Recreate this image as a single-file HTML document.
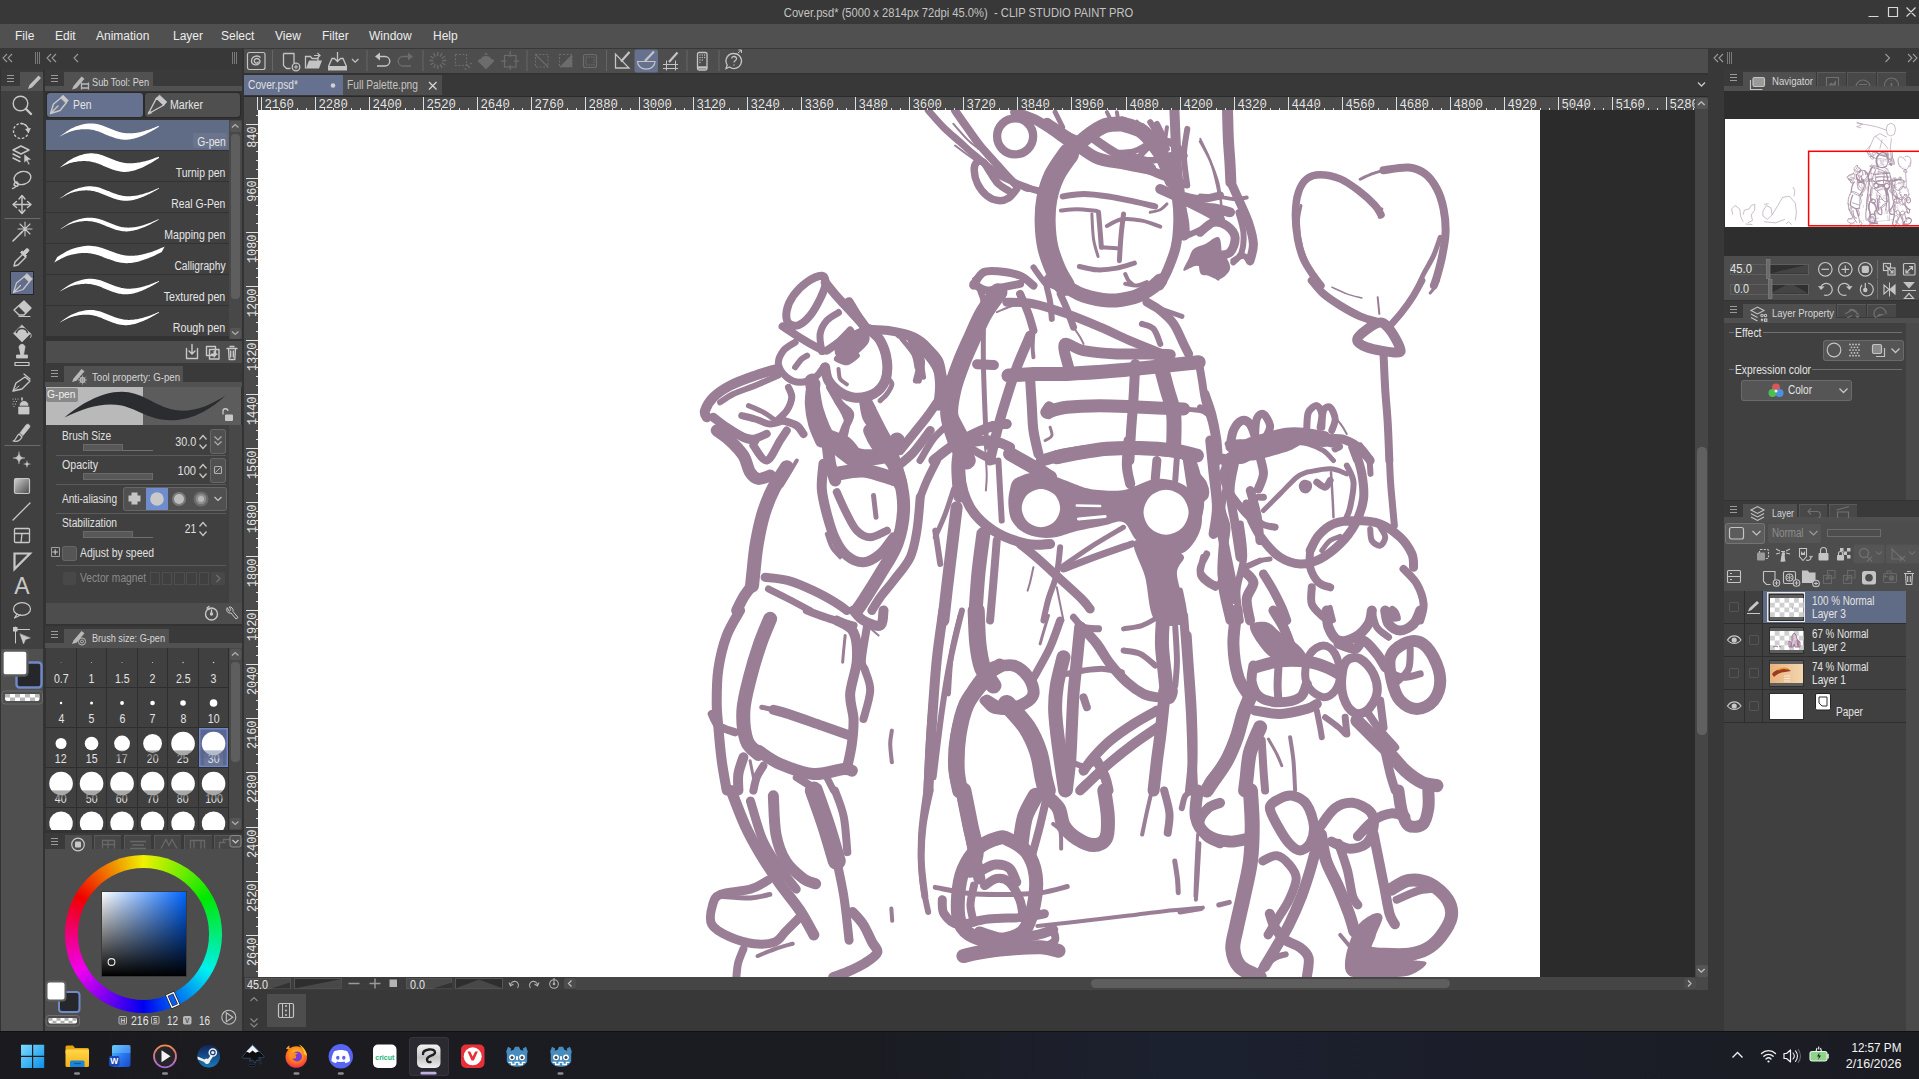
<!DOCTYPE html>
<html lang="en">
<head>
<meta charset="utf-8">
<title>Cover.psd - CLIP STUDIO PAINT PRO</title>
<style>
html,body{margin:0;padding:0;}
body{width:1919px;height:1079px;overflow:hidden;position:relative;background:#4d4d4d;font-family:"Liberation Sans",sans-serif;font-size:12px;color:#dcdcdc;}
.a{position:absolute;}
.t{position:absolute;white-space:nowrap;line-height:14px;}
svg{position:absolute;overflow:visible;}
.ic{stroke:#c8c8c8;fill:none;stroke-width:1.4;stroke-linecap:round;stroke-linejoin:round;}
.icd{stroke:#6e6e6e;fill:none;stroke-width:1.3;stroke-linecap:round;stroke-linejoin:round;}
</style>
</head>
<body>
<!-- title bar -->
<div class="a" style="left:0;top:0;width:1919px;height:24px;background:#383838;"></div>
<div class="t" style="left:771px;width:375px;top:5.600px;text-align:center;color:#c4c4c4;font-size:12px;transform:scaleX(0.932);transform-origin:center center;">Cover.psd* (5000 x 2814px 72dpi 45.0%)&nbsp; - CLIP STUDIO PAINT PRO</div>
<svg style="left:1860px;top:0" width="59" height="24"><path d="M8.500 16.500H18.500 M28.500 7.500h9v9h-9z M46.500 7.500l9 9 M55.500 7.500l-9 9" stroke="#d8d8d8" stroke-width="1.200" fill="none"/></svg>
<!-- menu bar -->
<div class="a" style="left:0;top:24px;width:1919px;height:24px;background:#505050;"></div>
<div class="t" style="left:15px;top:29px;color:#ececec;">File</div>
<div class="t" style="left:55px;top:29px;color:#ececec;">Edit</div>
<div class="t" style="left:96px;top:29px;color:#ececec;">Animation</div>
<div class="t" style="left:173px;top:29px;color:#ececec;">Layer</div>
<div class="t" style="left:221px;top:29px;color:#ececec;">Select</div>
<div class="t" style="left:275px;top:29px;color:#ececec;">View</div>
<div class="t" style="left:322px;top:29px;color:#ececec;">Filter</div>
<div class="t" style="left:369px;top:29px;color:#ececec;">Window</div>
<div class="t" style="left:433px;top:29px;color:#ececec;">Help</div>
<!-- dock header strips -->
<div class="a" style="left:0;top:48px;width:243px;height:21px;background:#383838;"></div>
<div class="a" style="left:1707px;top:48px;width:212px;height:21px;background:#383838;"></div>
<!-- left dock header icons -->
<svg style="left:0;top:48px" width="243" height="21"><path d="M7 6l-4 4 4 4M12 6l-4 4 4 4M51 6l-4 4 4 4M56 6l-4 4 4 4M78 6l-4 4 4 4" stroke="#9a9a9a" stroke-width="1.1" fill="none"/><path d="M35.500 4v12M37.500 4v12M39.500 4v12M232.500 4v12M234.500 4v12M236.500 4v12" stroke="#7a7a7a" stroke-width="1"/></svg>
<!-- tool column -->
<div class="a" style="left:0;top:69px;width:243px;height:962px;background:#333333;"></div>
<div class="a" style="left:1px;top:69px;width:42px;height:17px;background:#3a3a3a;"></div>
<div class="a" style="left:20px;top:72px;width:23px;height:16px;background:#515151;"></div>
<div class="a" style="left:1px;top:86px;width:42px;height:5px;background:#515151;"></div>
<div class="a" style="left:1px;top:91px;width:42px;height:558px;background:#404040;"></div>
<div class="a" style="left:1px;top:649px;width:42px;height:382px;background:#4f4f4f;"></div>
<svg style="left:0;top:69px" width="44" height="22"><path d="M7 6.500h7M7 9.500h7M7 12.500h7" stroke="#9a9a9a" stroke-width="1"/><path d="M28 20l1.500-4 9-9.500 2.500 2.500-9 9.500z" fill="#c0c0c0"/></svg>
<svg style="left:0;top:0" width="44" height="720">
<g class="ic">
<!-- magnifier -->
<circle cx="20.500" cy="103.500" r="7.300"/><path d="M26 109l5 5" stroke-width="2.400"/>
<!-- rotate -->
<circle cx="21" cy="131" r="7.500" stroke-dasharray="1.500 2.900"/><path d="M21 123.500a7.500 7.500 0 0 1 7.300 6" /><path d="M25 129l3.500 4 2.500-5z" fill="#c8c8c8" stroke="none"/>
<!-- layer select -->
<path d="M13 150l8-4 8 4-8 4z M13 154l7 3.500 M13 158l7 3.500"/><path d="M24 154l0 9 2.500-2 2 4 1.500-0.800-2-4 3.500-0.500z" fill="#c8c8c8" stroke="#404040" stroke-width="0.600"/>
<!-- lasso -->
<ellipse cx="22.500" cy="178" rx="8.500" ry="6.500" transform="rotate(-15 22.500 178)"/><path d="M17 182c-3 0-4 3-1.500 4s4-2 1.500-4 M16 186c-1 2-2 2.500-3.500 2.500"/>
<!-- move -->
<path d="M22 196v17M13.500 204.500h17" /><path d="M19 199l3-3.500 3 3.500M19 210l3 3.500 3-3.500M16.500 201.500l-3.500 3 3.500 3M27.500 201.500l3.500 3-3.500 3"/>
<!-- sep -->
<path d="M5 218.500h35" stroke="#6a6a6a" stroke-width="1"/>
<!-- wand -->
<path d="M13 241l9-9" stroke-width="1.600"/><path d="M25 222v14M18 229h14M20 224l10 10M30 224l-10 10" stroke-width="1.100"/>
<!-- eyedropper -->
<path d="M14 266l1-4 8-8 3 3-8 8z" /><path d="M23 252l3-3c1.500-1.500 4 1 2.500 2.500l-3 3 1 1-1.500 1.500-4.500-4.500 1.500-1.500z" fill="#c8c8c8" stroke-width="0.800"/>
</g>
<!-- pen selected -->
<rect x="10.500" y="271.500" width="23" height="23" fill="#616d8b" stroke="#262626" stroke-width="1"/>
<g class="ic">
<path d="M13.500 292.500l3-9.500 8-6.500 5 5-6.500 8z M13.500 292.500l7-7" stroke-width="1.200"/><path d="M24 276.500l3-3 5.500 5.500-3 3z" fill="#c8c8c8" stroke-width="0.600"/>
<!-- eraser -->
<path d="M14 310l10-9 7 7-7 7h-5z" /><path d="M24 301l7 7-5.500 5.500-7-7z" fill="#c8c8c8" stroke="none"/><path d="M19 316.500h11" stroke-width="1.200"/>
<!-- bucket -->
<path d="M22 325l8.500 8.500-8.500 8.500-8.500-8.500z" fill="#c8c8c8" stroke-width="0.500"/><path d="M16.500 332.500c1.500-5.500 9.500-5.500 11 0" stroke="#404040" stroke-width="1.500"/><path d="M30.500 333.500c1 1.500 1 3 0 4" stroke-width="1"/>
<!-- stamp -->
<path d="M19.500 349a3 3 0 1 1 5 0l-1 6h4v3h-11v-3h4z" fill="#c8c8c8" stroke-width="0.800"/><path d="M15 362.500h14v3h-14z" stroke-width="1.200"/>
<!-- nib pencil -->
<path d="M13 391l3-8 9-6 5 4-8 8z" stroke-width="1.300"/><path d="M13 391l6-5" stroke-width="1"/><path d="M24 374l6 5" stroke-width="1.200"/>
<!-- airbrush -->
<path d="M19 407h10v7h-10z" fill="#c8c8c8" stroke-width="0.800"/><path d="M20 405c0-5 8-5 8 0z" fill="#c8c8c8" stroke-width="0.800"/><path d="M22 400v-2" stroke-width="1.600"/><path d="M13 399h0M15.500 399h0M18 399h0M14 401.500h0M16.500 401.500h0M13 404h0M15.500 404h0M14 406.500h0" stroke-width="1.200"/>
<!-- brush -->
<path d="M13 441c3 0 3-5 6-7l3 3c-2 4-5 5-9 4z" stroke-width="1.200"/><path d="M20 433l6-8c1.500-2 5 0 3.500 2.500l-6.500 8z" fill="#c8c8c8" stroke-width="0.700"/>
<!-- sep -->
<path d="M5 445.500h35" stroke="#6a6a6a" stroke-width="1"/>
<!-- sparkles -->
<path d="M19 452c0.500 4 1.500 5.500 6 6-4.500 0.500-5.500 2-6 6-0.500-4-1.500-5.500-6-6 4.500-0.500 5.500-2 6-6z" fill="#c8c8c8" stroke-width="0.400"/><path d="M27 461c0.300 2.200 0.900 2.800 3.500 3-2.600 0.300-3.200 0.900-3.500 3.500-0.300-2.600-0.900-3.200-3.500-3.500 2.600-0.200 3.200-0.800 3.500-3z" fill="#c8c8c8" stroke-width="0.300"/>
</g>
<defs><linearGradient id="tg" x1="0" y1="0" x2="1" y2="1"><stop offset="0" stop-color="#d0d0d0"/><stop offset="1" stop-color="#4a4a4a"/></linearGradient></defs>
<rect x="14.500" y="478.500" width="15" height="15" rx="1.500" fill="url(#tg)" stroke="#c8c8c8" stroke-width="1.200"/>
<g class="ic">
<!-- line -->
<path d="M13 520l17-17" stroke-width="1.300"/>
<!-- frame -->
<rect x="14.500" y="528.500" width="15" height="14" rx="1" stroke-width="1.300"/><path d="M14.500 533.500h15M22 533.500l-1 9" stroke-width="1.300"/>
<!-- triangle ruler -->
<path d="M14.500 553.500h15.500l-15.500 15.500z" stroke-width="2.200" stroke-linejoin="miter"/>
<!-- balloon -->
<ellipse cx="22" cy="609" rx="8.500" ry="6.300" stroke-width="1.200"/><path d="M17 614l-2.500 4 6-3" stroke-width="1.200"/>
<!-- correct line -->
<path d="M15.500 627v16M15.500 629.500h14" stroke-width="1"/><rect x="13" y="627" width="4.500" height="4.500" fill="#c8c8c8" stroke="none"/><path d="M20 634l3.500 10 2-4.500 4.500-1.500z" fill="#c8c8c8" stroke-width="0.500"/>
</g>
<text x="22" y="594" text-anchor="middle" font-family="Liberation Sans, sans-serif" font-size="23" fill="#c8c8c8">A</text>
<!-- swatches -->
<rect x="16.500" y="662.500" width="25" height="25" rx="3" fill="#26272b" stroke="#6f89c9" stroke-width="2.400"/>
<rect x="2.500" y="650.500" width="25" height="25" rx="3" fill="#ffffff" stroke="#5a5a5a" stroke-width="2.400"/>
<rect x="2" y="691" width="40.500" height="13" rx="3" fill="none" stroke="#6a6a6a" stroke-width="1"/>
<rect x="5" y="694" width="34.500" height="7" rx="2" fill="#ffffff"/>
<path d="M5 694h5v3.500h-5zM15 694h5v3.500h-5zM25 694h5v3.500h-5zM35 694h4.500v3.500h-4.500zM10 697.500h5v3.500h-5zM20 697.500h5v3.500h-5zM30 697.500h5v3.500h-5z" fill="#b8b8b8"/>
</svg>
<!-- sub tool -->
<div class="a" style="left:45.000px;top:69.000px;width:197.000px;height:17.000px;background:#3a3a3a;"></div>
<div class="a" style="left:64.000px;top:72.000px;width:89.000px;height:16.000px;background:#515151;"></div>
<div class="a" style="left:45.000px;top:86.000px;width:197.000px;height:5.000px;background:#515151;"></div>
<svg style="left:45px;top:69px" width="60" height="22"><path d="M6 6.500h7M6 9.500h7M6 12.500h7" stroke="#9a9a9a" stroke-width="1"/><path d="M27 20.500l1.500-3.500 8-9.500 3 2.200-8 9.500z" fill="#b8b8b8"/><path d="M36.500 13.500v7M36.500 15h7M36.500 19h7M43.500 13.500v7" stroke="#b8b8b8" stroke-width="1.300" fill="none"/></svg>
<div class="t" style="left:91.500px;top:75.500px;font-size:11px;line-height:13px;color:#d6d6d6;transform:scaleX(0.835);transform-origin:left center;">Sub Tool: Pen</div>
<div class="a" style="left:47.000px;top:93.000px;width:95.500px;height:23.500px;background:#65718e;border-radius:3px;box-shadow:0 0 0 1px #2a2a2a;"></div>
<div class="a" style="left:145.000px;top:93.000px;width:94.500px;height:23.500px;background:#4f4f4f;border-radius:3px;box-shadow:0 0 0 1px #2a2a2a;"></div>
<svg style="left:47px;top:93px" width="200" height="24"><g class="ic" stroke-width="1.100"><path d="M3.500 20.500l3-9.500 8-6.500 5 5-6.500 8z M3.500 20.500l7.500-7.500"/><path d="M13.500 4.500l2.500-2.500 5.500 5.500-2.500 2.500z" fill="#c8c8c8" stroke-width="0.500"/><path d="M101.500 20l1.500-2.500 6.500-12.500 7.500 7-12.500 7z"/><path d="M109.500 5l3-3 7.500 7-3 3z" fill="#c8c8c8" stroke-width="0.500"/><path d="M101 21l1.500-3 2 2z" fill="#c8c8c8" stroke-width="0.500"/></g></svg>
<div class="t" style="left:72.500px;top:98.250px;font-size:12.5px;line-height:14.5px;color:#e4e4e4;transform:scaleX(0.832);transform-origin:left center;">Pen</div>
<div class="t" style="left:170.000px;top:98.250px;font-size:12.5px;line-height:14.5px;color:#e4e4e4;transform:scaleX(0.849);transform-origin:left center;">Marker</div>
<div class="a" style="left:46.000px;top:120.000px;width:182.500px;height:30.000px;background:#606b85;"></div>
<div class="a" style="left:192.500px;top:133.000px;width:34.500px;height:15.000px;background:#6a748c;border-radius:2px;"></div>
<div class="t" style="left:190.759px;top:135.250px;font-size:12.5px;line-height:14.5px;color:#e6e6e6;transform:scaleX(0.820);transform-origin:right center;">G-pen</div>
<div class="a" style="left:46.000px;top:151.000px;width:182.500px;height:30.000px;background:#404040;"></div>
<div class="t" style="left:166.206px;top:166.250px;font-size:12.5px;line-height:14.5px;color:#e6e6e6;transform:scaleX(0.835);transform-origin:right center;">Turnip pen</div>
<div class="a" style="left:46.000px;top:182.000px;width:182.500px;height:30.000px;background:#404040;"></div>
<div class="t" style="left:160.194px;top:197.250px;font-size:12.5px;line-height:14.5px;color:#e6e6e6;transform:scaleX(0.827);transform-origin:right center;">Real G-Pen</div>
<div class="a" style="left:46.000px;top:213.000px;width:182.500px;height:30.000px;background:#404040;"></div>
<div class="t" style="left:153.225px;top:228.250px;font-size:12.5px;line-height:14.5px;color:#e6e6e6;transform:scaleX(0.844);transform-origin:right center;">Mapping pen</div>
<div class="a" style="left:46.000px;top:244.000px;width:182.500px;height:30.000px;background:#404040;"></div>
<div class="t" style="left:162.973px;top:259.250px;font-size:12.5px;line-height:14.5px;color:#e6e6e6;transform:scaleX(0.816);transform-origin:right center;">Calligraphy</div>
<div class="a" style="left:46.000px;top:275.000px;width:182.500px;height:30.000px;background:#404040;"></div>
<div class="t" style="left:153.230px;top:290.250px;font-size:12.5px;line-height:14.5px;color:#e6e6e6;transform:scaleX(0.851);transform-origin:right center;">Textured pen</div>
<div class="a" style="left:46.000px;top:306.000px;width:182.500px;height:30.000px;background:#404040;"></div>
<div class="t" style="left:164.339px;top:321.250px;font-size:12.5px;line-height:14.5px;color:#e6e6e6;transform:scaleX(0.858);transform-origin:right center;">Rough pen</div>
<svg style="left:0;top:0" width="243" height="340"><path d="M59.500 136.700 60.313 136.086 61.398 135.267 62.690 134.298 64.125 133.240 65.638 132.152 67.164 131.094 68.640 130.127 70.000 129.311 71.281 128.620 72.559 127.984 73.831 127.400 75.094 126.864 76.345 126.373 77.582 125.922 78.801 125.508 80.000 125.127 81.173 124.781 82.320 124.476 83.448 124.210 84.562 123.984 85.669 123.797 86.773 123.647 87.882 123.536 89.000 123.462 90.118 123.426 91.227 123.429 92.331 123.470 93.438 123.550 94.552 123.668 95.680 123.827 96.827 124.025 98.000 124.264 99.202 124.560 100.430 124.923 101.677 125.336 102.938 125.786 104.206 126.257 105.477 126.771 106.743 127.280 108.000 127.765 109.257 128.249 110.523 128.755 111.794 129.272 113.062 129.786 114.323 130.286 115.570 130.758 116.798 131.190 118.000 131.569 119.166 131.903 120.297 132.205 121.404 132.476 122.500 132.713 123.596 132.914 124.703 133.079 125.834 133.207 127.000 133.297 128.195 133.347 129.406 133.359 130.633 133.333 131.875 133.272 133.133 133.176 134.406 133.046 135.695 132.884 137.000 132.690 138.327 132.459 139.680 132.186 141.052 131.877 142.438 131.535 143.831 131.167 145.227 130.776 146.618 130.366 148.000 129.944 149.450 129.466 151.008 128.912 152.608 128.315 154.188 127.707 155.681 127.122 157.023 126.592 158.151 126.150 159.000 125.827 159.000 126.773 158.151 127.273 157.023 127.947 155.681 128.748 154.188 129.630 152.608 130.548 151.008 131.455 149.450 132.306 148.000 133.056 146.618 133.735 145.227 134.398 143.831 135.039 142.438 135.652 141.052 136.232 139.680 136.772 138.327 137.266 137.000 137.710 135.695 138.106 134.406 138.463 133.133 138.779 131.875 139.053 130.633 139.283 129.406 139.469 128.195 139.610 127.000 139.703 125.834 139.748 124.703 139.744 123.596 139.694 122.500 139.600 121.404 139.464 120.297 139.290 119.166 139.078 118.000 138.831 116.798 138.533 115.570 138.175 114.323 137.769 113.062 137.326 111.794 136.860 110.523 136.381 109.257 135.902 108.000 135.435 106.743 134.957 105.477 134.444 104.206 133.911 102.938 133.339 101.677 132.780 100.430 132.249 99.202 131.763 98.000 131.336 96.827 130.964 95.680 130.628 94.552 130.328 93.438 130.063 92.331 129.832 91.227 129.635 90.118 129.471 89.000 129.338 87.882 129.237 86.773 129.171 85.669 129.139 84.562 129.141 83.448 129.176 82.320 129.243 81.173 129.342 80.000 129.473 78.801 129.631 77.582 129.814 76.345 130.027 75.094 130.274 73.831 130.559 72.559 130.887 71.281 131.262 70.000 131.689 68.640 132.221 67.164 132.875 65.638 133.604 64.125 134.360 62.690 135.096 61.398 135.764 60.313 136.317 59.500 136.700z" fill="#ffffff"/><path d="M59.500 167.700 60.313 167.045 61.398 166.179 62.690 165.158 64.125 164.042 65.638 162.895 67.164 161.780 68.640 160.758 70.000 159.891 71.281 159.153 72.559 158.471 73.831 157.842 75.094 157.262 76.345 156.728 77.582 156.235 78.801 155.780 80.000 155.360 81.173 154.976 82.320 154.635 83.448 154.334 84.562 154.074 85.669 153.854 86.773 153.672 87.882 153.530 89.000 153.426 90.118 153.360 91.227 153.334 92.331 153.347 93.438 153.400 94.552 153.493 95.680 153.627 96.827 153.801 98.000 154.016 99.202 154.289 100.430 154.630 101.677 155.022 102.938 155.453 104.206 155.906 105.477 156.417 106.743 156.925 108.000 157.411 109.257 157.898 110.523 158.409 111.794 158.933 113.062 159.455 114.323 159.965 115.570 160.449 116.798 160.894 118.000 161.288 119.166 161.636 120.297 161.955 121.404 162.243 122.500 162.497 123.596 162.718 124.703 162.903 125.834 163.053 127.000 163.166 128.195 163.242 129.406 163.280 130.633 163.283 131.875 163.252 133.133 163.187 134.406 163.090 135.695 162.962 137.000 162.804 138.327 162.610 139.680 162.377 141.052 162.108 142.438 161.809 143.831 161.484 145.227 161.136 146.618 160.772 148.000 160.394 149.450 159.965 151.008 159.463 152.608 158.921 154.188 158.368 155.681 157.836 157.023 157.354 158.151 156.952 159.000 156.660 159.000 157.940 158.151 158.471 157.023 159.186 155.681 160.035 154.188 160.969 152.608 161.942 151.008 162.904 149.450 163.807 148.000 164.606 146.618 165.329 145.227 166.037 143.831 166.722 142.438 167.379 141.052 168.000 139.680 168.581 138.327 169.115 137.000 169.596 135.695 170.028 134.406 170.419 133.133 170.768 131.875 171.073 130.633 171.333 129.406 171.548 128.195 171.715 127.000 171.834 125.834 171.902 124.703 171.920 123.596 171.890 122.500 171.815 121.404 171.698 120.297 171.540 119.166 171.344 118.000 171.112 116.798 170.829 115.570 170.484 114.323 170.089 113.062 169.657 111.794 169.199 110.523 168.727 109.257 168.252 108.000 167.789 106.743 167.311 105.477 166.799 104.206 166.262 102.938 165.672 101.677 165.094 100.430 164.542 99.202 164.034 98.000 163.584 96.827 163.188 95.680 162.828 94.552 162.503 93.438 162.212 92.331 161.955 91.227 161.730 90.118 161.537 89.000 161.374 87.882 161.244 86.773 161.146 85.669 161.082 84.562 161.051 83.448 161.052 82.320 161.084 81.173 161.147 80.000 161.240 78.801 161.359 77.582 161.501 76.345 161.672 75.094 161.875 73.831 162.116 72.559 162.399 71.281 162.728 70.000 163.109 68.640 163.590 67.164 164.189 65.638 164.860 64.125 165.558 62.690 166.237 61.398 166.852 60.313 167.357 59.500 167.700z" fill="#ffffff"/><path d="M59.500 198.700 60.313 198.120 61.398 197.340 62.690 196.416 64.125 195.405 65.638 194.365 67.164 193.356 68.640 192.435 70.000 191.661 71.281 191.008 72.559 190.411 73.831 189.864 75.094 189.365 76.345 188.910 77.582 188.494 78.801 188.114 80.000 187.766 81.173 187.452 82.320 187.177 83.448 186.941 84.562 186.742 85.669 186.582 86.773 186.460 87.882 186.374 89.000 186.326 90.118 186.315 91.227 186.342 92.331 186.406 93.438 186.507 94.552 186.648 95.680 186.827 96.827 187.045 98.000 187.304 99.202 187.620 100.430 188.000 101.677 188.431 102.938 188.897 104.206 189.383 105.477 189.900 106.743 190.409 108.000 190.893 109.257 191.374 110.523 191.877 111.794 192.388 113.062 192.895 114.323 193.386 115.570 193.849 116.798 194.270 118.000 194.637 119.166 194.958 120.297 195.247 121.404 195.504 122.500 195.726 123.596 195.911 124.703 196.060 125.834 196.169 127.000 196.239 128.195 196.268 129.406 196.257 130.633 196.208 131.875 196.122 133.133 196.000 134.406 195.843 135.695 195.652 137.000 195.428 138.327 195.166 139.680 194.860 141.052 194.517 142.438 194.141 143.831 193.736 145.227 193.308 146.618 192.862 148.000 192.401 149.450 191.884 151.008 191.286 152.608 190.643 154.188 189.990 155.681 189.361 157.023 188.792 158.151 188.315 159.000 187.966 159.000 188.634 158.151 189.108 157.023 189.747 155.681 190.509 154.188 191.347 152.608 192.219 151.008 193.081 149.450 193.889 148.000 194.599 146.618 195.240 145.227 195.865 143.831 196.469 142.438 197.047 141.052 197.591 139.680 198.097 138.327 198.559 137.000 198.972 135.695 199.338 134.406 199.667 133.133 199.955 131.875 200.203 130.633 200.408 129.406 200.571 128.195 200.689 127.000 200.761 125.834 200.786 124.703 200.764 123.596 200.697 122.500 200.587 121.404 200.437 120.297 200.248 119.166 200.023 118.000 199.763 116.798 199.453 115.570 199.084 114.323 198.668 113.062 198.218 111.794 197.744 110.523 197.259 109.257 196.776 108.000 196.307 106.743 195.828 105.477 195.316 104.206 194.786 102.938 194.228 101.677 193.685 100.430 193.172 99.202 192.703 98.000 192.296 96.827 191.943 95.680 191.628 94.552 191.349 93.438 191.105 92.331 190.897 91.227 190.722 90.118 190.582 89.000 190.474 87.882 190.399 86.773 190.359 85.669 190.354 84.562 190.383 83.448 190.445 82.320 190.542 81.173 190.672 80.000 190.834 78.801 191.025 77.582 191.242 76.345 191.489 75.094 191.772 73.831 192.094 72.559 192.460 71.281 192.873 70.000 193.339 68.640 193.913 67.164 194.613 65.638 195.390 64.125 196.195 62.690 196.979 61.398 197.691 60.313 198.283 59.500 198.700z" fill="#ffffff"/><path d="M59.500 229.700 60.313 229.133 61.398 228.369 62.690 227.463 64.125 226.471 65.638 225.451 67.164 224.461 68.640 223.558 70.000 222.801 71.281 222.164 72.559 221.581 73.831 221.050 75.094 220.566 76.345 220.125 77.582 219.723 78.801 219.357 80.000 219.022 81.173 218.720 82.320 218.457 83.448 218.233 84.562 218.046 85.669 217.897 86.773 217.785 87.882 217.710 89.000 217.672 90.118 217.671 91.227 217.707 92.331 217.780 93.438 217.891 94.552 218.040 95.680 218.227 96.827 218.454 98.000 218.720 99.202 219.043 100.430 219.431 101.677 219.869 102.938 220.341 104.206 220.833 105.477 221.351 106.743 221.860 108.000 222.344 109.257 222.824 110.523 223.325 111.794 223.834 113.062 224.339 114.323 224.826 115.570 225.285 116.798 225.702 118.000 226.064 119.166 226.380 120.297 226.664 121.404 226.915 122.500 227.131 123.596 227.310 124.703 227.452 125.834 227.554 127.000 227.616 128.195 227.636 129.406 227.617 130.633 227.558 131.875 227.462 133.133 227.330 134.406 227.161 135.695 226.959 137.000 226.724 138.327 226.449 139.680 226.130 141.052 225.773 142.438 225.383 143.831 224.964 145.227 224.521 146.618 224.060 148.000 223.585 149.450 223.051 151.008 222.436 152.608 221.775 154.188 221.103 155.681 220.457 157.023 219.871 158.151 219.381 159.000 219.022 159.000 219.578 158.151 220.042 157.023 220.668 155.681 221.413 154.188 222.234 152.608 223.088 151.008 223.931 149.450 224.722 148.000 225.415 146.618 226.041 145.227 226.652 143.831 227.242 142.438 227.805 141.052 228.335 139.680 228.828 138.327 229.277 137.000 229.676 135.695 230.031 134.406 230.348 133.133 230.625 131.875 230.863 130.633 231.058 129.406 231.211 128.195 231.320 127.000 231.384 125.834 231.401 124.703 231.372 123.596 231.298 122.500 231.182 121.404 231.026 120.297 230.831 119.166 230.601 118.000 230.336 116.798 230.021 115.570 229.648 114.323 229.228 113.062 228.774 111.794 228.298 110.523 227.811 109.257 227.326 108.000 226.856 106.743 226.376 105.477 225.865 104.206 225.336 102.938 224.784 101.677 224.247 100.430 223.741 99.202 223.280 98.000 222.880 96.827 222.535 95.680 222.228 94.552 221.957 93.438 221.722 92.331 221.522 91.227 221.357 90.118 221.226 89.000 221.128 87.882 221.064 86.773 221.034 85.669 221.039 84.562 221.079 83.448 221.153 82.320 221.261 81.173 221.403 80.000 221.578 78.801 221.782 77.582 222.013 76.345 222.275 75.094 222.572 73.831 222.908 72.559 223.289 71.281 223.718 70.000 224.199 68.640 224.790 67.164 225.508 65.638 226.305 64.125 227.129 62.690 227.932 61.398 228.662 60.313 229.269 59.500 229.700z" fill="#ffffff"/><path d="M57.260 256.940 58.139 256.414 59.310 255.693 60.706 254.833 62.255 253.889 63.889 252.917 65.537 251.975 67.131 251.118 68.600 250.401 69.983 249.803 71.363 249.258 72.737 248.765 74.101 248.317 75.453 247.912 76.789 247.546 78.105 247.214 79.400 246.913 80.667 246.644 81.906 246.413 83.124 246.219 84.328 246.063 85.522 245.943 86.715 245.860 87.912 245.815 89.120 245.805 90.328 245.833 91.525 245.896 92.718 245.996 93.913 246.133 95.116 246.308 96.334 246.521 97.573 246.773 98.840 247.065 100.138 247.413 101.464 247.826 102.811 248.288 104.173 248.783 105.543 249.297 106.915 249.815 108.283 250.321 109.640 250.801 110.997 251.275 112.365 251.769 113.737 252.269 115.108 252.764 116.469 253.241 117.816 253.687 119.142 254.091 120.440 254.439 121.699 254.741 122.921 255.010 124.117 255.246 125.300 255.446 126.483 255.609 127.679 255.733 128.901 255.817 130.160 255.859 131.451 255.859 132.759 255.818 134.083 255.737 135.425 255.617 136.783 255.459 138.159 255.266 139.551 255.037 140.960 254.774 142.393 254.471 143.854 254.123 145.336 253.736 146.833 253.314 148.338 252.864 149.845 252.389 151.348 251.894 152.840 251.386 154.406 250.817 156.088 250.164 157.817 249.463 159.523 248.751 161.135 248.066 162.585 247.445 163.803 246.924 164.720 246.540 161.720 252.060 160.803 252.499 159.585 253.094 158.135 253.804 156.523 254.586 154.817 255.400 153.088 256.203 151.406 256.955 149.840 257.614 148.348 258.207 146.845 258.785 145.338 259.342 143.833 259.873 142.336 260.373 140.854 260.835 139.393 261.254 137.960 261.626 136.551 261.953 135.159 262.244 133.783 262.496 132.425 262.708 131.083 262.880 129.759 263.010 128.451 263.098 127.160 263.141 125.901 263.138 124.679 263.090 123.483 262.999 122.300 262.867 121.117 262.695 119.921 262.485 118.699 262.240 117.440 261.961 116.142 261.632 114.816 261.246 113.469 260.814 112.108 260.349 110.737 259.862 109.365 259.367 107.997 258.875 106.640 258.399 105.283 257.915 103.915 257.400 102.543 256.871 101.173 256.342 99.811 255.828 98.464 255.346 97.138 254.910 95.840 254.535 94.573 254.215 93.334 253.933 92.116 253.688 90.913 253.479 89.718 253.306 88.525 253.168 87.328 253.064 86.120 252.995 84.912 252.959 83.715 252.958 82.522 252.993 81.328 253.062 80.124 253.167 78.906 253.306 77.667 253.479 76.400 253.687 75.105 253.925 73.789 254.190 72.453 254.487 71.101 254.820 69.737 255.194 68.363 255.612 66.983 256.079 65.600 256.599 64.131 257.230 62.537 257.994 60.889 258.838 59.255 259.711 57.706 260.562 56.310 261.338 55.139 261.988 54.260 262.460z" fill="#ffffff"/><path d="M59.500 291.700 60.313 291.099 61.398 290.296 62.690 289.345 64.125 288.306 65.638 287.237 67.164 286.199 68.640 285.250 70.000 284.451 71.281 283.775 72.559 283.154 73.831 282.586 75.094 282.065 76.345 281.587 77.582 281.151 78.801 280.750 80.000 280.382 81.173 280.049 82.320 279.756 83.448 279.502 84.562 279.287 85.669 279.111 86.773 278.972 87.882 278.871 89.000 278.808 90.118 278.782 91.227 278.794 92.331 278.844 93.438 278.933 94.552 279.060 95.680 279.227 96.827 279.433 98.000 279.680 99.202 279.984 100.430 280.354 101.677 280.774 102.938 281.230 104.206 281.707 105.477 282.223 106.743 282.731 108.000 283.216 109.257 283.699 110.523 284.204 111.794 284.718 113.062 285.230 114.323 285.726 115.570 286.194 116.798 286.622 118.000 286.996 119.166 287.325 120.297 287.622 121.404 287.887 122.500 288.118 123.596 288.313 124.703 288.471 125.834 288.592 127.000 288.673 128.195 288.715 129.406 288.718 130.633 288.683 131.875 288.612 133.133 288.506 134.406 288.365 135.695 288.191 137.000 287.985 138.327 287.742 139.680 287.456 141.052 287.133 142.438 286.778 143.831 286.395 145.227 285.989 146.618 285.565 148.000 285.127 149.450 284.633 151.008 284.062 152.608 283.446 154.188 282.820 155.681 282.218 157.023 281.672 158.151 281.216 159.000 280.882 159.000 281.718 158.151 282.207 157.023 282.867 155.681 283.652 154.188 284.517 152.608 285.416 151.008 286.305 149.450 287.139 148.000 287.873 146.618 288.537 145.227 289.185 143.831 289.811 142.438 290.410 141.052 290.975 139.680 291.502 138.327 291.984 137.000 292.415 135.695 292.799 134.406 293.145 133.133 293.449 131.875 293.713 130.633 293.933 129.406 294.110 128.195 294.241 127.000 294.327 125.834 294.363 124.703 294.352 123.596 294.295 122.500 294.195 121.404 294.053 120.297 293.873 119.166 293.656 118.000 293.404 116.798 293.101 115.570 292.739 114.323 292.329 113.062 291.883 111.794 291.413 110.523 290.932 109.257 290.452 108.000 289.984 106.743 289.505 105.477 288.993 104.206 288.461 102.938 287.895 101.677 287.342 100.430 286.818 99.202 286.339 98.000 285.920 96.827 285.556 95.680 285.228 94.552 284.936 93.438 284.680 92.331 284.458 91.227 284.270 90.118 284.115 89.000 283.992 87.882 283.902 86.773 283.846 85.669 283.825 84.562 283.838 83.448 283.883 82.320 283.962 81.173 284.074 80.000 284.218 78.801 284.389 77.582 284.585 76.345 284.812 75.094 285.073 73.831 285.373 72.559 285.716 71.281 286.106 70.000 286.549 68.640 287.097 67.164 287.770 65.638 288.518 64.125 289.294 62.690 290.049 61.398 290.735 60.313 291.303 59.500 291.700z" fill="#ffffff"/><path d="M59.500 322.700 60.313 322.106 61.398 321.311 62.690 320.369 64.125 319.339 65.638 318.280 67.164 317.251 68.640 316.312 70.000 315.521 71.281 314.853 72.559 314.240 73.831 313.678 75.094 313.165 76.345 312.695 77.582 312.265 78.801 311.872 80.000 311.510 81.173 311.184 82.320 310.897 83.448 310.649 84.562 310.439 85.669 310.268 86.773 310.135 87.882 310.039 89.000 309.981 90.118 309.960 91.227 309.977 92.331 310.031 93.438 310.124 94.552 310.256 95.680 310.427 96.827 310.637 98.000 310.888 99.202 311.196 100.430 311.569 101.677 311.993 102.938 312.452 104.206 312.932 105.477 313.448 106.743 313.957 108.000 314.442 109.257 314.924 110.523 315.428 111.794 315.941 113.062 316.451 114.323 316.946 115.570 317.412 116.798 317.838 118.000 318.210 119.166 318.536 120.297 318.831 121.404 319.093 122.500 319.320 123.596 319.512 124.703 319.668 125.834 319.784 127.000 319.862 128.195 319.899 129.406 319.898 130.633 319.858 131.875 319.782 133.133 319.670 134.406 319.524 135.695 319.345 137.000 319.133 138.327 318.883 139.680 318.591 141.052 318.261 142.438 317.899 143.831 317.509 145.227 317.095 146.618 316.664 148.000 316.218 149.450 315.717 151.008 315.137 152.608 314.512 154.188 313.877 155.681 313.266 157.023 312.712 158.151 312.249 159.000 311.910 159.000 312.690 158.151 313.174 157.023 313.827 155.681 314.604 154.188 315.460 152.608 316.351 151.008 317.231 149.450 318.056 148.000 318.782 146.618 319.438 145.227 320.078 143.831 320.697 142.438 321.289 141.052 321.847 139.680 322.367 138.327 322.842 137.000 323.267 135.695 323.646 134.406 323.985 133.133 324.285 131.875 324.543 130.633 324.758 129.406 324.930 128.195 325.057 127.000 325.138 125.834 325.171 124.703 325.156 123.596 325.096 122.500 324.992 121.404 324.848 120.297 324.665 119.166 324.445 118.000 324.190 116.798 323.885 115.570 323.520 114.323 323.108 113.062 322.661 111.794 322.190 110.523 321.708 109.257 321.227 108.000 320.758 106.743 320.279 105.477 319.767 104.206 319.236 102.938 318.673 101.677 318.123 100.430 317.603 99.202 317.127 98.000 316.712 96.827 316.352 95.680 316.028 94.552 315.740 93.438 315.488 92.331 315.271 91.227 315.088 90.118 314.937 89.000 314.819 87.882 314.734 86.773 314.684 85.669 314.668 84.562 314.686 83.448 314.737 82.320 314.822 81.173 314.940 80.000 315.090 78.801 315.267 77.582 315.471 76.345 315.704 75.094 315.973 73.831 316.280 72.559 316.630 71.281 317.029 70.000 317.479 68.640 318.036 67.164 318.718 65.638 319.476 64.125 320.261 62.690 321.026 61.398 321.720 60.313 322.296 59.500 322.700z" fill="#ffffff"/></svg>
<div class="a" style="left:229.000px;top:120.000px;width:12.500px;height:218.500px;background:#484848;"></div>
<div class="a" style="left:229.500px;top:120.500px;width:11.500px;height:11.000px;background:#555555;border-radius:2px;"></div>
<div class="a" style="left:229.500px;top:327.500px;width:11.500px;height:11.000px;background:#555555;border-radius:2px;"></div>
<div class="a" style="left:230.500px;top:133.500px;width:9.000px;height:165.000px;background:#5e5e5e;border-radius:4px;"></div>
<svg style="left:229px;top:120px" width="13" height="220"><path d="M3 7.500l3.200-3 3.200 3M3 211.500l3.200 3 3.200-3" stroke="#b0b0b0" stroke-width="1.200" fill="none"/></svg>
<div class="a" style="left:46.000px;top:341.000px;width:196.000px;height:21.500px;background:#4d4d4d;"></div>
<svg style="left:180px;top:341px" width="62" height="22"><g class="ic" stroke="#a8a8a8" stroke-width="1.100"><path d="M6.500 7.500v10h11v-10M12 3.500v9.500M9 10l3 3 3-3"/><path d="M26.500 5.500h9v9h-9z M29.500 8.500h9.500v9.500h-9.500z M34.200 10.500v5.500M31.500 13.200h5.500"/><path d="M47 7.500h10M48.500 7.500l0.700 11h5.600l0.700-11M50 5.500h4M50.700 10v6M53.300 10v6"/></g></svg>
<!-- tool property + brush size -->
<div class="a" style="left:45.000px;top:363.000px;width:197.000px;height:19.000px;background:#3a3a3a;"></div>
<div class="a" style="left:64.000px;top:366.000px;width:119.000px;height:18.000px;background:#515151;"></div>
<div class="a" style="left:45.000px;top:382.000px;width:197.000px;height:5.000px;background:#515151;"></div>
<svg style="left:45px;top:363px" width="60" height="24"><path d="M6 7.500h7M6 10.500h7M6 13.500h7" stroke="#9a9a9a" stroke-width="1"/><path d="M27 19l1.500-3.500 8-9.500 3 2.200-8 9.500z" fill="#b8b8b8"/><circle cx="37.500" cy="17" r="2.300" fill="none" stroke="#b8b8b8" stroke-width="1.200"/><path d="M37.500 12.500v9M33 17h9M34.300 13.800l6.400 6.400M40.700 13.800l-6.400 6.400" stroke="#b8b8b8" stroke-width="0.800"/></svg>
<div class="t" style="left:91.500px;top:370.800px;font-size:11px;line-height:13px;color:#d6d6d6;transform:scaleX(0.878);transform-origin:left center;">Tool property: G-pen</div>
<div class="a" style="left:46.000px;top:387.000px;width:97.000px;height:38.000px;background:#b9b9b9;"></div>
<div class="a" style="left:143.000px;top:387.000px;width:98.000px;height:38.000px;background:#5c5c5c;"></div>
<svg style="left:46px;top:387px" width="196" height="38"><path d="M19 35C35 22 60 7 84 7c22 0 34 13 56 19 22 5 42-3 62-15-14 13-36 27-62 27-24 0-38-12-56-16-20-4-42 2-65 13z" fill="#2b2c30" transform="scale(0.88 0.92) translate(2 -1.800)"/><path d="M177 27.500v-3a2.500 2.500 0 0 1 5-0.500" stroke="#c8c8c8" stroke-width="1.300" fill="none"/><rect x="179" y="27.500" width="8" height="6.500" rx="1" fill="#c8c8c8"/></svg>
<div class="a" style="left:46.000px;top:388.000px;width:32.000px;height:14.000px;background:rgba(120,120,120,0.75);border-radius:2px;"></div>
<div class="t" style="left:47.000px;top:388.250px;font-size:11.5px;line-height:13.5px;color:#f0f0f0;transform:scaleX(0.892);transform-origin:left center;">G-pen</div>
<div class="a" style="left:46.000px;top:425.000px;width:182.500px;height:178.000px;background:#404040;"></div>
<div class="a" style="left:228.500px;top:425.000px;width:13.000px;height:178.000px;background:#484848;"></div>
<div class="t" style="left:62.000px;top:428.750px;font-size:12.5px;line-height:14.5px;color:#e0e0e0;transform:scaleX(0.811);transform-origin:left center;">Brush Size</div>
<div class="a" style="left:83.000px;top:450.000px;width:70.000px;height:1.000px;background:#707070;"></div>
<div class="a" style="left:83.000px;top:444.000px;width:39.900px;height:6.500px;background:#585858;box-shadow:inset 0 0 0 1px #6a6a6a;"></div>
<div class="t" style="left:173.145px;top:434.500px;font-size:12px;line-height:14px;color:#e0e0e0;transform:scaleX(0.899);transform-origin:right center;">30.0</div>
<svg style="left:198.000px;top:432.500px" width="10" height="18"><path d="M1.500 6.500l3.500-4 3.500 4M1.500 11.500l3.500 4 3.500-4" stroke="#c8c8c8" stroke-width="1.200" fill="none"/></svg>
<div class="a" style="left:211.000px;top:429.500px;width:14.000px;height:23.000px;background:#505050;border-radius:2px;box-shadow:0 0 0 1px #666;"></div>
<svg style="left:211px;top:429px" width="14" height="24"><path d="M3.500 7.500l3.500 3.500 3.500-3.500M3.500 12.500l3.500 3.500 3.500-3.500" stroke="#b0b0b0" stroke-width="1.200" fill="none"/></svg>
<div class="a" style="left:56.000px;top:455.000px;width:169.500px;height:1.000px;background:#5a5a5a;"></div>
<div class="t" style="left:62.000px;top:457.750px;font-size:12.5px;line-height:14.5px;color:#e0e0e0;transform:scaleX(0.850);transform-origin:left center;">Opacity</div>
<div class="a" style="left:83.000px;top:479.000px;width:70.000px;height:1.000px;background:#707070;"></div>
<div class="a" style="left:83.000px;top:473.000px;width:70.000px;height:6.500px;background:#585858;box-shadow:inset 0 0 0 1px #6a6a6a;"></div>
<div class="t" style="left:176.480px;top:463.500px;font-size:12px;line-height:14px;color:#e0e0e0;transform:scaleX(0.924);transform-origin:right center;">100</div>
<svg style="left:198.000px;top:461.500px" width="10" height="18"><path d="M1.500 6.500l3.500-4 3.500 4M1.500 11.500l3.500 4 3.500-4" stroke="#c8c8c8" stroke-width="1.200" fill="none"/></svg>
<div class="a" style="left:211.000px;top:458.500px;width:14.000px;height:23.000px;background:#505050;border-radius:2px;box-shadow:0 0 0 1px #666;"></div>
<svg style="left:211px;top:458px" width="14" height="24"><rect x="3.500" y="8.500" width="7" height="7" rx="1" stroke="#b0b0b0" fill="none" stroke-width="1.100"/><path d="M4.500 14.500l5-5" stroke="#b0b0b0" stroke-width="1"/></svg>
<div class="a" style="left:56.000px;top:484.000px;width:169.500px;height:1.000px;background:#5a5a5a;"></div>
<div class="t" style="left:62.000px;top:491.750px;font-size:12.5px;line-height:14.5px;color:#e0e0e0;transform:scaleX(0.808);transform-origin:left center;">Anti-aliasing</div>
<div class="a" style="left:124.000px;top:488.000px;width:101.500px;height:22.000px;background:#505050;border-radius:2px;box-shadow:0 0 0 1px #666;"></div>
<div class="a" style="left:146.000px;top:488.000px;width:22.000px;height:22.000px;background:#6f8ccf;"></div>
<svg style="left:124px;top:488px" width="102" height="22"><path d="M7.500 4.500h6v3h3v6h-3v3h-6v-3h-3v-6h3z" fill="#c4c4c4"/><circle cx="33" cy="11" r="6.800" fill="#c9c9c9"/><circle cx="55" cy="11" r="7" fill="#7a7a7a"/><circle cx="55" cy="11" r="5" fill="#bdbdbd"/><circle cx="77" cy="11" r="7.500" fill="#6c6c6c"/><circle cx="77" cy="11" r="5.200" fill="#8f8f8f"/><circle cx="77" cy="11" r="3" fill="#b8b8b8"/><path d="M90.500 9l3.500 3.500 3.500-3.500" stroke="#c8c8c8" stroke-width="1.200" fill="none"/></svg>
<div class="a" style="left:56.000px;top:513.000px;width:169.500px;height:1.000px;background:#5a5a5a;"></div>
<div class="t" style="left:62.000px;top:515.750px;font-size:12.5px;line-height:14.5px;color:#e0e0e0;transform:scaleX(0.816);transform-origin:left center;">Stabilization</div>
<div class="a" style="left:83.000px;top:537.000px;width:70.000px;height:1.000px;background:#707070;"></div>
<div class="a" style="left:83.000px;top:531.000px;width:50.400px;height:6.500px;background:#585858;box-shadow:inset 0 0 0 1px #6a6a6a;"></div>
<div class="t" style="left:183.153px;top:521.500px;font-size:12px;line-height:14px;color:#e0e0e0;transform:scaleX(0.862);transform-origin:right center;">21</div>
<svg style="left:198.000px;top:519.500px" width="10" height="18"><path d="M1.500 6.500l3.500-4 3.500 4M1.500 11.500l3.500 4 3.500-4" stroke="#c8c8c8" stroke-width="1.200" fill="none"/></svg>
<div class="a" style="left:50.500px;top:547.000px;width:9.500px;height:10.000px;background:#404040;box-shadow:inset 0 0 0 1px #a0a0a0;border-radius:1px;"></div>
<svg style="left:50px;top:547px" width="10" height="10"><path d="M2.500 5h5.500M5.200 2.300v5.500" stroke="#d0d0d0" stroke-width="1"/></svg>
<div class="a" style="left:62.500px;top:546.500px;width:13.500px;height:13.000px;background:#555555;border-radius:2px;box-shadow:0 0 0 1px #666;"></div>
<div class="t" style="left:80.000px;top:545.750px;font-size:12.5px;line-height:14.5px;color:#e0e0e0;transform:scaleX(0.832);transform-origin:left center;">Adjust by speed</div>
<div class="a" style="left:56.000px;top:565.000px;width:169.500px;height:1.000px;background:#5a5a5a;"></div>
<div class="a" style="left:62.500px;top:571.500px;width:13.500px;height:13.000px;background:#484848;border-radius:2px;"></div>
<div class="t" style="left:80.000px;top:570.750px;font-size:12.5px;line-height:14.5px;color:#8a8a8a;transform:scaleX(0.819);transform-origin:left center;">Vector magnet</div>
<div class="a" style="left:149.500px;top:572.000px;width:10.500px;height:12.500px;background:#404040;box-shadow:inset 0 0 0 1px #4e4e4e;"></div>
<div class="a" style="left:161.800px;top:572.000px;width:10.500px;height:12.500px;background:#404040;box-shadow:inset 0 0 0 1px #4e4e4e;"></div>
<div class="a" style="left:174.100px;top:572.000px;width:10.500px;height:12.500px;background:#404040;box-shadow:inset 0 0 0 1px #4e4e4e;"></div>
<div class="a" style="left:186.400px;top:572.000px;width:10.500px;height:12.500px;background:#404040;box-shadow:inset 0 0 0 1px #4e4e4e;"></div>
<div class="a" style="left:198.700px;top:572.000px;width:10.500px;height:12.500px;background:#404040;box-shadow:inset 0 0 0 1px #4e4e4e;"></div>
<div class="a" style="left:211.000px;top:572.000px;width:14.000px;height:13.000px;background:#484848;border-radius:2px;"></div>
<svg style="left:211px;top:572px" width="14" height="13"><path d="M5.500 3l3.500 3.500-3.500 3.500" stroke="#707070" stroke-width="1.200" fill="none"/></svg>
<div class="a" style="left:46.000px;top:603.000px;width:196.000px;height:20.500px;background:#4d4d4d;"></div>
<svg style="left:200px;top:603px" width="42" height="21"><g class="ic" stroke="#a8a8a8" stroke-width="1.100"><circle cx="11.500" cy="11" r="6"/><path d="M11.500 11v-4M9 3.500l-2 1.500 2 1.500" /><circle cx="11.500" cy="11" r="1" fill="#a8a8a8"/><path d="M27 5a3.500 3.500 0 0 0 4 5l5 6 2-1.500-5-6a3.500 3.500 0 0 0-4-4.500l2 2.500-1.500 1.500z" stroke-width="1"/></g></svg>
<div class="a" style="left:45.000px;top:626.000px;width:197.000px;height:18.000px;background:#3a3a3a;"></div>
<div class="a" style="left:64.000px;top:629.000px;width:105.000px;height:17.000px;background:#515151;"></div>
<div class="a" style="left:45.000px;top:643.000px;width:197.000px;height:5.000px;background:#515151;"></div>
<svg style="left:45px;top:626px" width="60" height="24"><path d="M6 5.500h7M6 8.500h7M6 11.500h7" stroke="#9a9a9a" stroke-width="1"/><path d="M27 18l1.500-3.500 8-9.500 3 2.200-8 9.500z" fill="#b8b8b8"/><circle cx="37" cy="15.500" r="3.600" fill="none" stroke="#b8b8b8" stroke-width="1"/><circle cx="37" cy="15.500" r="1.500" fill="none" stroke="#b8b8b8" stroke-width="1"/></svg>
<div class="t" style="left:92.000px;top:632.000px;font-size:11px;line-height:13px;color:#d6d6d6;transform:scaleX(0.829);transform-origin:left center;">Brush size: G-pen</div>
<div class="a" style="left:46.000px;top:648.000px;width:183.000px;height:182.000px;background:#2e2e2e;"></div>
<div class="a" style="left:46.000px;top:648.000px;width:29.500px;height:39.000px;background:#404040;"></div>
<div class="t" style="left:52.709px;top:672.000px;font-size:12px;line-height:14px;color:#e4e4e4;transform:scaleX(0.880);transform-origin:center center;">0.7</div>
<div class="a" style="left:76.500px;top:648.000px;width:29.500px;height:39.000px;background:#404040;"></div>
<div class="t" style="left:88.213px;top:672.000px;font-size:12px;line-height:14px;color:#e4e4e4;transform:scaleX(0.880);transform-origin:center center;">1</div>
<div class="a" style="left:107.000px;top:648.000px;width:29.500px;height:39.000px;background:#404040;"></div>
<div class="t" style="left:113.709px;top:672.000px;font-size:12px;line-height:14px;color:#e4e4e4;transform:scaleX(0.880);transform-origin:center center;">1.5</div>
<div class="a" style="left:137.500px;top:648.000px;width:29.500px;height:39.000px;background:#404040;"></div>
<div class="t" style="left:149.213px;top:672.000px;font-size:12px;line-height:14px;color:#e4e4e4;transform:scaleX(0.880);transform-origin:center center;">2</div>
<div class="a" style="left:168.000px;top:648.000px;width:29.500px;height:39.000px;background:#404040;"></div>
<div class="t" style="left:174.709px;top:672.000px;font-size:12px;line-height:14px;color:#e4e4e4;transform:scaleX(0.880);transform-origin:center center;">2.5</div>
<div class="a" style="left:198.500px;top:648.000px;width:29.500px;height:39.000px;background:#404040;"></div>
<div class="t" style="left:210.213px;top:672.000px;font-size:12px;line-height:14px;color:#e4e4e4;transform:scaleX(0.880);transform-origin:center center;">3</div>
<div class="a" style="left:46.000px;top:688.000px;width:29.500px;height:39.000px;background:#404040;"></div>
<div class="t" style="left:57.713px;top:712.000px;font-size:12px;line-height:14px;color:#e4e4e4;transform:scaleX(0.880);transform-origin:center center;">4</div>
<div class="a" style="left:76.500px;top:688.000px;width:29.500px;height:39.000px;background:#404040;"></div>
<div class="t" style="left:88.213px;top:712.000px;font-size:12px;line-height:14px;color:#e4e4e4;transform:scaleX(0.880);transform-origin:center center;">5</div>
<div class="a" style="left:107.000px;top:688.000px;width:29.500px;height:39.000px;background:#404040;"></div>
<div class="t" style="left:118.713px;top:712.000px;font-size:12px;line-height:14px;color:#e4e4e4;transform:scaleX(0.880);transform-origin:center center;">6</div>
<div class="a" style="left:137.500px;top:688.000px;width:29.500px;height:39.000px;background:#404040;"></div>
<div class="t" style="left:149.213px;top:712.000px;font-size:12px;line-height:14px;color:#e4e4e4;transform:scaleX(0.880);transform-origin:center center;">7</div>
<div class="a" style="left:168.000px;top:688.000px;width:29.500px;height:39.000px;background:#404040;"></div>
<div class="t" style="left:179.713px;top:712.000px;font-size:12px;line-height:14px;color:#e4e4e4;transform:scaleX(0.880);transform-origin:center center;">8</div>
<div class="a" style="left:198.500px;top:688.000px;width:29.500px;height:39.000px;background:#404040;"></div>
<div class="t" style="left:206.877px;top:712.000px;font-size:12px;line-height:14px;color:#e4e4e4;transform:scaleX(0.880);transform-origin:center center;">10</div>
<div class="a" style="left:46.000px;top:728.000px;width:29.500px;height:39.000px;background:#404040;"></div>
<div class="t" style="left:54.377px;top:752.000px;font-size:12px;line-height:14px;color:#e4e4e4;transform:scaleX(0.880);transform-origin:center center;">12</div>
<div class="a" style="left:76.500px;top:728.000px;width:29.500px;height:39.000px;background:#404040;"></div>
<div class="t" style="left:84.877px;top:752.000px;font-size:12px;line-height:14px;color:#e4e4e4;transform:scaleX(0.880);transform-origin:center center;">15</div>
<div class="a" style="left:107.000px;top:728.000px;width:29.500px;height:39.000px;background:#404040;"></div>
<div class="t" style="left:115.377px;top:752.000px;font-size:12px;line-height:14px;color:#e4e4e4;transform:scaleX(0.880);transform-origin:center center;">17</div>
<div class="a" style="left:137.500px;top:728.000px;width:29.500px;height:39.000px;background:#404040;"></div>
<div class="t" style="left:145.877px;top:752.000px;font-size:12px;line-height:14px;color:#e4e4e4;transform:scaleX(0.880);transform-origin:center center;">20</div>
<div class="a" style="left:168.000px;top:728.000px;width:29.500px;height:39.000px;background:#404040;"></div>
<div class="t" style="left:176.377px;top:752.000px;font-size:12px;line-height:14px;color:#e4e4e4;transform:scaleX(0.880);transform-origin:center center;">25</div>
<div class="a" style="left:198.500px;top:728.000px;width:29.500px;height:39.000px;background:#5a6790;box-shadow:inset 0 0 0 1.5px #7086c6;"></div>
<div class="a" style="left:203.500px;top:753.000px;width:19.500px;height:13.000px;background:#6a7698;border-radius:2px;"></div>
<div class="t" style="left:206.877px;top:752.000px;font-size:12px;line-height:14px;color:#e4e4e4;transform:scaleX(0.880);transform-origin:center center;">30</div>
<div class="a" style="left:46.000px;top:768.000px;width:29.500px;height:39.000px;background:#404040;"></div>
<div class="t" style="left:54.377px;top:792.000px;font-size:12px;line-height:14px;color:#e4e4e4;transform:scaleX(0.880);transform-origin:center center;">40</div>
<div class="a" style="left:76.500px;top:768.000px;width:29.500px;height:39.000px;background:#404040;"></div>
<div class="t" style="left:84.877px;top:792.000px;font-size:12px;line-height:14px;color:#e4e4e4;transform:scaleX(0.880);transform-origin:center center;">50</div>
<div class="a" style="left:107.000px;top:768.000px;width:29.500px;height:39.000px;background:#404040;"></div>
<div class="t" style="left:115.377px;top:792.000px;font-size:12px;line-height:14px;color:#e4e4e4;transform:scaleX(0.880);transform-origin:center center;">60</div>
<div class="a" style="left:137.500px;top:768.000px;width:29.500px;height:39.000px;background:#404040;"></div>
<div class="t" style="left:145.877px;top:792.000px;font-size:12px;line-height:14px;color:#e4e4e4;transform:scaleX(0.880);transform-origin:center center;">70</div>
<div class="a" style="left:168.000px;top:768.000px;width:29.500px;height:39.000px;background:#404040;"></div>
<div class="t" style="left:176.377px;top:792.000px;font-size:12px;line-height:14px;color:#e4e4e4;transform:scaleX(0.880);transform-origin:center center;">80</div>
<div class="a" style="left:198.500px;top:768.000px;width:29.500px;height:39.000px;background:#404040;"></div>
<div class="t" style="left:203.540px;top:792.000px;font-size:12px;line-height:14px;color:#e4e4e4;transform:scaleX(0.880);transform-origin:center center;">100</div>
<div class="a" style="left:46.000px;top:808.000px;width:29.500px;height:22.000px;background:#404040;"></div>
<div class="a" style="left:76.500px;top:808.000px;width:29.500px;height:22.000px;background:#404040;"></div>
<div class="a" style="left:107.000px;top:808.000px;width:29.500px;height:22.000px;background:#404040;"></div>
<div class="a" style="left:137.500px;top:808.000px;width:29.500px;height:22.000px;background:#404040;"></div>
<div class="a" style="left:168.000px;top:808.000px;width:29.500px;height:22.000px;background:#404040;"></div>
<div class="a" style="left:198.500px;top:808.000px;width:29.500px;height:22.000px;background:#404040;"></div>
<svg style="left:0;top:0" width="243" height="832"><circle cx="61.050" cy="662.500" r="0.400" fill="#c8c8c8"/><circle cx="91.550" cy="662.500" r="0.500" fill="#c8c8c8"/><circle cx="122.050" cy="662.500" r="0.500" fill="#c8c8c8"/><circle cx="152.550" cy="662.500" r="0.600" fill="#c8c8c8"/><circle cx="183.050" cy="662.500" r="0.700" fill="#c8c8c8"/><circle cx="213.550" cy="662.500" r="0.800" fill="#c8c8c8"/><circle cx="61.050" cy="703.000" r="1.200" fill="#ffffff"/><circle cx="91.550" cy="703.000" r="1.500" fill="#ffffff"/><circle cx="122.050" cy="703.000" r="1.900" fill="#ffffff"/><circle cx="152.550" cy="703.000" r="2.300" fill="#ffffff"/><circle cx="183.050" cy="703.000" r="2.800" fill="#ffffff"/><circle cx="213.550" cy="703.000" r="3.800" fill="#ffffff"/><circle cx="61.050" cy="743.500" r="5.500" fill="#ffffff"/><circle cx="91.550" cy="743.500" r="6.800" fill="#ffffff"/><circle cx="122.050" cy="743.500" r="7.900" fill="#ffffff"/><rect x="108.000" y="750.400" width="27.500" height="8.000" fill="#404040" fill-opacity="0.450"/><circle cx="152.550" cy="743.500" r="9.400" fill="#ffffff"/><rect x="138.500" y="750.400" width="27.500" height="8.000" fill="#404040" fill-opacity="0.450"/><circle cx="183.050" cy="743.500" r="11.800" fill="#ffffff"/><rect x="169.000" y="750.400" width="27.500" height="8.000" fill="#404040" fill-opacity="0.450"/><circle cx="213.550" cy="743.500" r="11.800" fill="#ffffff"/><rect x="199.500" y="750.400" width="27.500" height="8.000" fill="#5a6790" fill-opacity="0.450"/><circle cx="61.050" cy="783.500" r="11.800" fill="#ffffff"/><rect x="47.000" y="790.400" width="27.500" height="8.000" fill="#404040" fill-opacity="0.450"/><circle cx="91.550" cy="783.500" r="11.800" fill="#ffffff"/><rect x="77.500" y="790.400" width="27.500" height="8.000" fill="#404040" fill-opacity="0.450"/><circle cx="122.050" cy="783.500" r="11.800" fill="#ffffff"/><rect x="108.000" y="790.400" width="27.500" height="8.000" fill="#404040" fill-opacity="0.450"/><circle cx="152.550" cy="783.500" r="11.800" fill="#ffffff"/><rect x="138.500" y="790.400" width="27.500" height="8.000" fill="#404040" fill-opacity="0.450"/><circle cx="183.050" cy="783.500" r="11.800" fill="#ffffff"/><rect x="169.000" y="790.400" width="27.500" height="8.000" fill="#404040" fill-opacity="0.450"/><circle cx="213.550" cy="783.500" r="11.800" fill="#ffffff"/><rect x="199.500" y="790.400" width="27.500" height="8.000" fill="#404040" fill-opacity="0.450"/><path d="M51.374 830.000a11.800 11.800 0 1 1 19.352 0z" fill="#ffffff"/><path d="M81.874 830.000a11.800 11.800 0 1 1 19.352 0z" fill="#ffffff"/><path d="M112.374 830.000a11.800 11.800 0 1 1 19.352 0z" fill="#ffffff"/><path d="M142.874 830.000a11.800 11.800 0 1 1 19.352 0z" fill="#ffffff"/><path d="M173.374 830.000a11.800 11.800 0 1 1 19.352 0z" fill="#ffffff"/><path d="M203.874 830.000a11.800 11.800 0 1 1 19.352 0z" fill="#ffffff"/></svg>
<div class="a" style="left:45.000px;top:830.000px;width:197.000px;height:3.000px;background:#333333;"></div>
<div class="a" style="left:229.000px;top:648.000px;width:12.500px;height:182.000px;background:#484848;"></div>
<div class="a" style="left:229.500px;top:648.500px;width:11.500px;height:11.000px;background:#555555;border-radius:2px;"></div>
<div class="a" style="left:229.500px;top:817.500px;width:11.500px;height:11.000px;background:#555555;border-radius:2px;"></div>
<div class="a" style="left:230.500px;top:661.500px;width:9.000px;height:100.000px;background:#5e5e5e;border-radius:4px;"></div>
<svg style="left:229px;top:648px" width="13" height="182"><path d="M3 7.500l3.200-3 3.200 3M3 173.500l3.200 3 3.200-3" stroke="#b0b0b0" stroke-width="1.200" fill="none"/></svg>
<!-- color wheel -->
<div class="a" style="left:45.000px;top:833.000px;width:197.000px;height:198.000px;background:#4d4d4d;"></div>
<div class="a" style="left:45.000px;top:833.000px;width:197.000px;height:16.000px;background:#3a3a3a;"></div>
<div class="a" style="left:64.500px;top:835.000px;width:27.000px;height:15.000px;background:#4d4d4d;"></div>
<div class="a" style="left:93.500px;top:835.000px;width:27.500px;height:13.500px;background:#474747;box-shadow:inset 0 1px 0 #5a5a5a, inset 1px 0 0 #585858;"></div>
<div class="a" style="left:123.500px;top:835.000px;width:27.500px;height:13.500px;background:#474747;box-shadow:inset 0 1px 0 #5a5a5a, inset 1px 0 0 #585858;"></div>
<div class="a" style="left:153.500px;top:835.000px;width:27.500px;height:13.500px;background:#474747;box-shadow:inset 0 1px 0 #5a5a5a, inset 1px 0 0 #585858;"></div>
<div class="a" style="left:183.500px;top:835.000px;width:28.000px;height:13.500px;background:#474747;box-shadow:inset 0 1px 0 #5a5a5a, inset 1px 0 0 #585858;"></div>
<div class="a" style="left:213.500px;top:835.000px;width:28.000px;height:13.500px;background:#474747;box-shadow:inset 0 1px 0 #5a5a5a, inset 1px 0 0 #585858;"></div>
<svg style="left:45px;top:833px" width="197" height="18"><path d="M6 5.500h7M6 8.500h7M6 11.500h7" stroke="#9a9a9a" stroke-width="1"/><circle cx="33" cy="11.500" r="6.300" fill="none" stroke="#c8c8c8" stroke-width="1.200"/><rect x="30" y="8.500" width="6" height="6" rx="1" fill="#c8c8c8"/><g stroke="#686868" fill="none" stroke-width="1.300"><path d="M57.500 15.500v-8h12v8M63 7.500v8M57.500 11.500h12"/><path d="M85 8.500h16M87 12h12M85 15.500h16"/><path d="M116 15.500l5-9 3 6 3-6 5 9"/><path d="M145.500 15.500v-8h14v8M149 7.500v8M156 7.500v8"/><path d="M174.500 15.500v-6h6M178.500 9.500v-3h7"/></g><rect x="185" y="2.500" width="11" height="11.500" rx="2" fill="#505050" stroke="#8a8a8a" stroke-width="1"/><path d="M187.500 7l3 3 3-3" stroke="#c8c8c8" stroke-width="1.200" fill="none"/></svg>
<div class="a" style="left:64.850px;top:855.200px;width:157.600px;height:157.600px;border-radius:50%;background:conic-gradient(from 0deg,#f0f000 0deg,#00e800 60deg,#00f0f0 120deg,#0000f0 180deg,#f000f0 240deg,#f00000 300deg,#f0f000 360deg);"></div>
<div class="a" style="left:77.950px;top:868.300px;width:131.400px;height:131.400px;border-radius:50%;background:#4d4d4d;"></div>
<div class="a" style="left:102px;top:892px;width:84px;height:83.500px;background:linear-gradient(to bottom,rgba(0,0,0,0),#000000),linear-gradient(to right,#ffffff,#0066ff);box-shadow:0 0 0 1px #3a3a3a;"></div>
<svg style="left:0;top:0" width="243" height="1031"><circle cx="111.500" cy="962" r="3.400" fill="none" stroke="#202020" stroke-width="2.200"/><circle cx="111.500" cy="962" r="3.400" fill="none" stroke="#f0f0f0" stroke-width="1.100"/><g transform="translate(172.800 1000) rotate(-24)"><rect x="-3.700" y="-6.500" width="7.400" height="13" fill="#0a5cf0" stroke="#222" stroke-width="2.600"/><rect x="-3.700" y="-6.500" width="7.400" height="13" fill="none" stroke="#ffffff" stroke-width="1.300"/></g><rect x="59" y="992" width="20.500" height="20" rx="3" fill="#26272b" stroke="#6f89c9" stroke-width="2"/><rect x="46.500" y="981.500" width="19" height="19" rx="3" fill="#ffffff" stroke="#5e5e5e" stroke-width="2"/><rect x="46" y="1015.500" width="33.500" height="10.500" rx="3" fill="none" stroke="#707070" stroke-width="1"/><rect x="48.500" y="1018" width="28.500" height="5.500" rx="2" fill="#ffffff"/><path d="M48.500 1018h4v2.700h-4zM56.500 1018h4v2.700h-4zM64.500 1018h4v2.700h-4zM72.500 1018h4v2.700h-4zM52.500 1020.700h4v2.800h-4zM60.500 1020.700h4v2.800h-4zM68.500 1020.700h4v2.800h-4z" fill="#b0b0b0"/><g fill="none" stroke="#b8b8b8" stroke-width="1"><rect x="119" y="1016.500" width="7.500" height="7.500" rx="1"/><rect x="151.500" y="1016.500" width="7.500" height="7.500" rx="1"/><rect x="183.500" y="1016.500" width="7.500" height="7.500" rx="1" fill="#b8b8b8"/></g><circle cx="228.800" cy="1017.200" r="7" fill="none" stroke="#c0c0c0" stroke-width="1.100"/><path d="M226.300 1012.800l6.500 4.400-6.500 4.400z" fill="none" stroke="#c0c0c0" stroke-width="1.100"/><text x="122.750" y="1023" font-size="6.500" font-family="Liberation Sans, sans-serif" font-weight="bold" fill="#d0d0d0" text-anchor="middle">H</text><text x="155.250" y="1023" font-size="6.500" font-family="Liberation Sans, sans-serif" font-weight="bold" fill="#d0d0d0" text-anchor="middle">S</text><text x="187.250" y="1023" font-size="6.500" font-family="Liberation Sans, sans-serif" font-weight="bold" fill="#4d4d4d" text-anchor="middle">V</text></svg>
<div class="t" style="left:130.500px;top:1014.050px;font-size:12.5px;line-height:14.5px;color:#e4e4e4;transform:scaleX(0.839);transform-origin:left center;">216</div>
<div class="t" style="left:167.000px;top:1014.050px;font-size:12.5px;line-height:14.5px;color:#e4e4e4;transform:scaleX(0.791);transform-origin:left center;">12</div>
<div class="t" style="left:199.000px;top:1014.050px;font-size:12.5px;line-height:14.5px;color:#e4e4e4;transform:scaleX(0.791);transform-origin:left center;">16</div>
<!-- canvas window -->
<div class="a" style="left:242.000px;top:48.000px;width:2.000px;height:983.000px;background:#333333;"></div>
<div class="a" style="left:244.000px;top:48.000px;width:1464.000px;height:25.000px;background:#4d4d4d;"></div>
<div class="a" style="left:243.000px;top:48.000px;width:1465.000px;height:1.000px;background:#383838;"></div>
<div class="a" style="left:244.000px;top:73.000px;width:1464.000px;height:2.000px;background:#333333;"></div>
<svg style="left:244px;top:48px" width="520" height="25"><rect x="3.500" y="4.500" width="17.500" height="17" rx="2" fill="none" stroke="#c4c4c4" stroke-width="1.200"/><path d="M16.500 9.500c-3-3-9-1-9 3.500 0 4 5 5 7.500 2.500 2-2 0.500-5-2-5s-3.500 2.500-2 4 3.500 0 3-1" fill="none" stroke="#c4c4c4" stroke-width="1.300"/><path d="M28.500 2v21" stroke="#666" stroke-width="1"/><g fill="none" stroke="#c4c4c4" stroke-width="1.300" stroke-linejoin="round"><path d="M39.500 5.500h10.500v9.500M39.500 5.500v12l3 3h4"/><circle cx="52" cy="19" r="3.800" fill="#4f4f4f"/><path d="M52 16.800v4.400M49.800 19h4.400" stroke-width="1.100"/></g><path d="M61.500 20.500v-12h5l1.500 2h6v2.500" fill="none" stroke="#c4c4c4" stroke-width="1.300"/><path d="M62 20.500l3-8h13l-3 8z" fill="#c4c4c4"/><path d="M70 7.500h5M73.500 5l2.500 2.500-2.500 2.500" fill="none" stroke="#c4c4c4" stroke-width="1.200"/><path d="M84.500 18.500l3.500-8h3M96 10.500h3l3.500 8M93.500 4v9M90.500 10.500l3 3 3-3" fill="none" stroke="#c4c4c4" stroke-width="1.300"/><rect x="84.500" y="18.500" width="18" height="3.500" fill="#c4c4c4" stroke="#c4c4c4" stroke-width="1"/><path d="M108 11l3.200 3.200 3.200-3.200" fill="none" stroke="#c4c4c4" stroke-width="1.200"/><path d="M123.000 2v21" stroke="#666" stroke-width="1"/><path d="M133 8.500h8a4.500 4.500 0 0 1 0 9.500h-8" fill="none" stroke="#c4c4c4" stroke-width="1.400"/><path d="M131 8.500l5-4v8z" fill="#c4c4c4"/><path d="M167 8.500h-8a4.500 4.500 0 0 0 0 9.500h8" fill="none" stroke="#6c6c6c" stroke-width="1.400"/><path d="M169 8.500l-5-4v8z" fill="#6c6c6c"/><path d="M179.000 2v21" stroke="#666" stroke-width="1"/><path d="M198.300 12.500L202.300 12.500M197.697 14.750L201.161 16.750M196.050 16.397L198.050 19.861M193.800 17.000L193.800 21.000M191.550 16.397L189.550 19.861M189.903 14.750L186.439 16.750M189.300 12.500L185.300 12.500M189.903 10.250L186.439 8.250M191.550 8.603L189.550 5.139M193.800 8.000L193.800 4.000M196.050 8.603L198.050 5.139M197.697 10.250L201.161 8.250" stroke="#6c6c6c" stroke-width="1.300" fill="none"/><rect x="211.500" y="6.500" width="11" height="11" fill="none" stroke="#6c6c6c" stroke-width="1.200" stroke-dasharray="2 1.500"/><path d="M222 16l4 4M226 15l2 1M221 20l1 2" stroke="#6c6c6c" stroke-width="1.200"/><path d="M242 4.500l8.500 8.500-8.500 8.500-8.500-8.500z" fill="#6c6c6c"/><path d="M236 11c2-5 10-5 12 0" stroke="#4f4f4f" stroke-width="1.300" fill="none"/><rect x="260.500" y="7.500" width="11.500" height="11.500" fill="none" stroke="#6c6c6c" stroke-width="1.200"/><path d="M266.200 3v6M266.200 17v5M257 13.200h5M270 13.200h5" stroke="#6c6c6c" stroke-width="1.200"/><path d="M283.000 2v21" stroke="#666" stroke-width="1"/><rect x="291.500" y="6.500" width="12.500" height="12.500" fill="none" stroke="#6c6c6c" stroke-width="1.100" stroke-dasharray="2 1.500"/><path d="M291.500 6.500l12.500 12.500" stroke="#6c6c6c" stroke-width="1.100"/><rect x="315.500" y="6.500" width="12.500" height="12.500" fill="none" stroke="#6c6c6c" stroke-width="1.100" stroke-dasharray="2 1.500"/><path d="M328 6.500v12.500h-12.500z" fill="#6c6c6c"/><rect x="339.500" y="6.500" width="13" height="13" rx="2" fill="none" stroke="#6c6c6c" stroke-width="1.200"/><rect x="342" y="9" width="8" height="8" fill="none" stroke="#6c6c6c" stroke-width="1" stroke-dasharray="1.500 1"/><path d="M362.500 2v21" stroke="#666" stroke-width="1"/><path d="M371.500 6v14h13.500z" fill="none" stroke="#c4c4c4" stroke-width="1.300"/><path d="M377 13.500l8.500-9.500" stroke="#c4c4c4" stroke-width="2.200"/><rect x="390.500" y="1.500" width="23.500" height="23" rx="2" fill="#65718e"/><path d="M393.500 13.500a8.500 7.500 0 0 0 17.500 0z" fill="none" stroke="#c4c4c4" stroke-width="1.200"/><path d="M401 13l9-9.500" stroke="#c4c4c4" stroke-width="2.200"/><path d="M419 16.500h15M422.500 12.500v10M431.500 12.500v10M419 20.500h15" stroke="#c4c4c4" stroke-width="1" fill="none"/><path d="M425 14l8.500-9.500" stroke="#c4c4c4" stroke-width="2.200"/><path d="M443.000 2v21" stroke="#666" stroke-width="1"/><rect x="453.500" y="4.500" width="9.500" height="17.500" rx="1.500" fill="none" stroke="#c4c4c4" stroke-width="1.300"/><path d="M456 7h0M458.300 7h0M460.600 7h0M456 9.500h0M458.300 9.500h0M460.600 9.500h0M456 12h0M458.300 12h0M456 14.500h0" stroke="#c4c4c4" stroke-width="1.300" stroke-linecap="round"/><path d="M454 19.500h9" stroke="#c4c4c4" stroke-width="2.400"/><path d="M475.000 2v21" stroke="#666" stroke-width="1"/><path d="M490 5.500a7.500 7.500 0 1 1-4.500 13.500l-3.500 1.500 1.200-3.500a7.500 7.500 0 0 1 6.800-11.500z" fill="none" stroke="#c4c4c4" stroke-width="1.300"/><path d="M487.500 10.500c0.500-3 5.500-2.500 5 0.500-0.300 1.600-2.500 1.500-2.500 3.500M490 16.500v1" fill="none" stroke="#c4c4c4" stroke-width="1.300"/><path d="M494 5l3-2.500M494.500 2h3v3" fill="none" stroke="#c4c4c4" stroke-width="1"/></svg>
<div class="a" style="left:244.000px;top:75.000px;width:1464.000px;height:21.000px;background:#383838;"></div>
<div class="a" style="left:244.000px;top:75.000px;width:99.000px;height:20.000px;background:#65718e;"></div>
<div class="a" style="left:343.000px;top:75.000px;width:99.000px;height:20.000px;background:#4d4d4d;"></div>
<div class="t" style="left:247.500px;top:77.750px;font-size:12.5px;line-height:14.5px;color:#e0e0e0;transform:scaleX(0.818);transform-origin:left center;">Cover.psd*</div>
<div class="t" style="left:347.000px;top:77.750px;font-size:12.5px;line-height:14.5px;color:#c4c4c4;transform:scaleX(0.817);transform-origin:left center;">Full Palette.png</div>
<svg style="left:244px;top:75px" width="1464" height="21"><circle cx="89" cy="10.500" r="2.300" fill="#d0d0d0"/><path d="M185 7l7.500 7.500M192.500 7l-7.500 7.500" stroke="#d8d8d8" stroke-width="1.200"/><path d="M1454 7.500l3.500 3.500 3.500-3.500" stroke="#c8c8c8" stroke-width="1.300" fill="none"/></svg>
<div class="a" style="left:244.000px;top:96.000px;width:1464.000px;height:1.000px;background:#2b2b2b;"></div>
<div class="a" style="left:244.000px;top:97.000px;width:1451.000px;height:12.500px;background:#4a4a4a;"></div>
<div class="a" style="left:244.000px;top:109.500px;width:14.000px;height:868.000px;background:#4a4a4a;"></div>
<div class="a" style="left:258.000px;top:109.500px;width:1282.000px;height:867.500px;background:#ffffff;"></div>
<div class="a" style="left:1540.000px;top:109.500px;width:155.000px;height:867.500px;background:#2b2b2b;"></div>
<svg style="left:0;top:0" width="1708" height="980" font-family="Liberation Mono, monospace" font-size="12" fill="#e4e4e4"><text x="264.500" y="108" textLength="29.500" lengthAdjust="spacingAndGlyphs">2160</text><text x="318.500" y="108" textLength="29.500" lengthAdjust="spacingAndGlyphs">2280</text><text x="372.500" y="108" textLength="29.500" lengthAdjust="spacingAndGlyphs">2400</text><text x="426.500" y="108" textLength="29.500" lengthAdjust="spacingAndGlyphs">2520</text><text x="480.500" y="108" textLength="29.500" lengthAdjust="spacingAndGlyphs">2640</text><text x="534.500" y="108" textLength="29.500" lengthAdjust="spacingAndGlyphs">2760</text><text x="588.500" y="108" textLength="29.500" lengthAdjust="spacingAndGlyphs">2880</text><text x="642.500" y="108" textLength="29.500" lengthAdjust="spacingAndGlyphs">3000</text><text x="696.500" y="108" textLength="29.500" lengthAdjust="spacingAndGlyphs">3120</text><text x="750.500" y="108" textLength="29.500" lengthAdjust="spacingAndGlyphs">3240</text><text x="804.500" y="108" textLength="29.500" lengthAdjust="spacingAndGlyphs">3360</text><text x="858.500" y="108" textLength="29.500" lengthAdjust="spacingAndGlyphs">3480</text><text x="912.500" y="108" textLength="29.500" lengthAdjust="spacingAndGlyphs">3600</text><text x="966.500" y="108" textLength="29.500" lengthAdjust="spacingAndGlyphs">3720</text><text x="1020.500" y="108" textLength="29.500" lengthAdjust="spacingAndGlyphs">3840</text><text x="1074.500" y="108" textLength="29.500" lengthAdjust="spacingAndGlyphs">3960</text><text x="1129.500" y="108" textLength="29.500" lengthAdjust="spacingAndGlyphs">4080</text><text x="1183.500" y="108" textLength="29.500" lengthAdjust="spacingAndGlyphs">4200</text><text x="1237.500" y="108" textLength="29.500" lengthAdjust="spacingAndGlyphs">4320</text><text x="1291.500" y="108" textLength="29.500" lengthAdjust="spacingAndGlyphs">4440</text><text x="1345.500" y="108" textLength="29.500" lengthAdjust="spacingAndGlyphs">4560</text><text x="1399.500" y="108" textLength="29.500" lengthAdjust="spacingAndGlyphs">4680</text><text x="1453.500" y="108" textLength="29.500" lengthAdjust="spacingAndGlyphs">4800</text><text x="1507.500" y="108" textLength="29.500" lengthAdjust="spacingAndGlyphs">4920</text><text x="1561.500" y="108" textLength="29.500" lengthAdjust="spacingAndGlyphs">5040</text><text x="1615.500" y="108" textLength="29.500" lengthAdjust="spacingAndGlyphs">5160</text><text x="1669.500" y="108" textLength="29.500" lengthAdjust="spacingAndGlyphs">5280</text><text transform="translate(255.500 147.700) rotate(-90)" textLength="21.200" lengthAdjust="spacingAndGlyphs">840</text><text transform="translate(255.500 201.700) rotate(-90)" textLength="21.200" lengthAdjust="spacingAndGlyphs">960</text><text transform="translate(255.500 263.100) rotate(-90)" textLength="28.600" lengthAdjust="spacingAndGlyphs">1080</text><text transform="translate(255.500 317.100) rotate(-90)" textLength="28.600" lengthAdjust="spacingAndGlyphs">1200</text><text transform="translate(255.500 371.100) rotate(-90)" textLength="28.600" lengthAdjust="spacingAndGlyphs">1320</text><text transform="translate(255.500 425.100) rotate(-90)" textLength="28.600" lengthAdjust="spacingAndGlyphs">1440</text><text transform="translate(255.500 479.100) rotate(-90)" textLength="28.600" lengthAdjust="spacingAndGlyphs">1560</text><text transform="translate(255.500 533.100) rotate(-90)" textLength="28.600" lengthAdjust="spacingAndGlyphs">1680</text><text transform="translate(255.500 587.100) rotate(-90)" textLength="28.600" lengthAdjust="spacingAndGlyphs">1800</text><text transform="translate(255.500 641.100) rotate(-90)" textLength="28.600" lengthAdjust="spacingAndGlyphs">1920</text><text transform="translate(255.500 695.100) rotate(-90)" textLength="28.600" lengthAdjust="spacingAndGlyphs">2040</text><text transform="translate(255.500 749.100) rotate(-90)" textLength="28.600" lengthAdjust="spacingAndGlyphs">2160</text><text transform="translate(255.500 803.100) rotate(-90)" textLength="28.600" lengthAdjust="spacingAndGlyphs">2280</text><text transform="translate(255.500 858.100) rotate(-90)" textLength="28.600" lengthAdjust="spacingAndGlyphs">2400</text><text transform="translate(255.500 912.100) rotate(-90)" textLength="28.600" lengthAdjust="spacingAndGlyphs">2520</text><text transform="translate(255.500 966.100) rotate(-90)" textLength="28.600" lengthAdjust="spacingAndGlyphs">2640</text><path d="M261.500 97v12.500M270.500 107.500v2M279.500 107.500v2M288.500 107.500v2M297.500 107.500v2M306.500 107.500v2M315.500 97v12.500M324.500 107.500v2M333.500 107.500v2M342.500 107.500v2M351.500 107.500v2M360.500 107.500v2M369.500 97v12.500M378.500 107.500v2M387.500 107.500v2M396.500 107.500v2M405.500 107.500v2M414.500 107.500v2M423.500 97v12.500M432.500 107.500v2M441.500 107.500v2M450.500 107.500v2M459.500 107.500v2M468.500 107.500v2M477.500 97v12.500M486.500 107.500v2M495.500 107.500v2M504.500 107.500v2M513.500 107.500v2M522.500 107.500v2M531.500 97v12.500M540.500 107.500v2M549.500 107.500v2M558.500 107.500v2M567.500 107.500v2M576.500 107.500v2M585.500 97v12.500M594.500 107.500v2M603.500 107.500v2M612.500 107.500v2M621.500 107.500v2M630.500 107.500v2M639.500 97v12.500M648.500 107.500v2M657.500 107.500v2M666.500 107.500v2M675.500 107.500v2M684.500 107.500v2M693.500 97v12.500M702.500 107.500v2M711.500 107.500v2M720.500 107.500v2M729.500 107.500v2M738.500 107.500v2M747.500 97v12.500M756.500 107.500v2M765.500 107.500v2M774.500 107.500v2M783.500 107.500v2M792.500 107.500v2M801.500 97v12.500M810.500 107.500v2M819.500 107.500v2M828.500 107.500v2M837.500 107.500v2M846.500 107.500v2M855.500 97v12.500M864.500 107.500v2M873.500 107.500v2M882.500 107.500v2M891.500 107.500v2M900.500 107.500v2M909.500 97v12.500M918.500 107.500v2M927.500 107.500v2M936.500 107.500v2M945.500 107.500v2M954.500 107.500v2M963.500 97v12.500M972.500 107.500v2M981.500 107.500v2M990.500 107.500v2M999.500 107.500v2M1008.500 107.500v2M1017.500 97v12.500M1026.500 107.500v2M1035.500 107.500v2M1044.500 107.500v2M1053.500 107.500v2M1062.500 107.500v2M1071.500 97v12.500M1080.500 107.500v2M1089.500 107.500v2M1098.500 107.500v2M1107.500 107.500v2M1116.500 107.500v2M1126.500 97v12.500M1135.500 107.500v2M1144.500 107.500v2M1153.500 107.500v2M1162.500 107.500v2M1171.500 107.500v2M1180.500 97v12.500M1189.500 107.500v2M1198.500 107.500v2M1207.500 107.500v2M1216.500 107.500v2M1225.500 107.500v2M1234.500 97v12.500M1243.500 107.500v2M1252.500 107.500v2M1261.500 107.500v2M1270.500 107.500v2M1279.500 107.500v2M1288.500 97v12.500M1297.500 107.500v2M1306.500 107.500v2M1315.500 107.500v2M1324.500 107.500v2M1333.500 107.500v2M1342.500 97v12.500M1351.500 107.500v2M1360.500 107.500v2M1369.500 107.500v2M1378.500 107.500v2M1387.500 107.500v2M1396.500 97v12.500M1405.500 107.500v2M1414.500 107.500v2M1423.500 107.500v2M1432.500 107.500v2M1441.500 107.500v2M1450.500 97v12.500M1459.500 107.500v2M1468.500 107.500v2M1477.500 107.500v2M1486.500 107.500v2M1495.500 107.500v2M1504.500 97v12.500M1513.500 107.500v2M1522.500 107.500v2M1531.500 107.500v2M1540.500 107.500v2M1549.500 107.500v2M1558.500 97v12.500M1567.500 107.500v2M1576.500 107.500v2M1585.500 107.500v2M1594.500 107.500v2M1603.500 107.500v2M1612.500 97v12.500M1621.500 107.500v2M1630.500 107.500v2M1639.500 107.500v2M1648.500 107.500v2M1657.500 107.500v2M1666.500 97v12.500M1675.500 107.500v2M1684.500 107.500v2M1693.500 107.500v2M257.500 97v12.500M246 124.500h11.500M255.500 133.500h2M255.500 142.500h2M255.500 151.500h2M255.500 160.500h2M255.500 169.500h2M246 178.500h11.500M255.500 187.500h2M255.500 196.500h2M255.500 205.500h2M255.500 214.500h2M255.500 223.500h2M246 232.500h11.500M255.500 241.500h2M255.500 250.500h2M255.500 259.500h2M255.500 268.500h2M255.500 277.500h2M246 286.500h11.500M255.500 295.500h2M255.500 304.500h2M255.500 313.500h2M255.500 322.500h2M255.500 331.500h2M246 340.500h11.500M255.500 349.500h2M255.500 358.500h2M255.500 367.500h2M255.500 376.500h2M255.500 385.500h2M246 394.500h11.500M255.500 403.500h2M255.500 412.500h2M255.500 421.500h2M255.500 430.500h2M255.500 439.500h2M246 448.500h11.500M255.500 457.500h2M255.500 466.500h2M255.500 475.500h2M255.500 484.500h2M255.500 493.500h2M246 502.500h11.500M255.500 511.500h2M255.500 520.500h2M255.500 529.500h2M255.500 538.500h2M255.500 547.500h2M246 556.500h11.500M255.500 565.500h2M255.500 574.500h2M255.500 583.500h2M255.500 592.500h2M255.500 601.500h2M246 610.500h11.500M255.500 619.500h2M255.500 628.500h2M255.500 637.500h2M255.500 646.500h2M255.500 655.500h2M246 664.500h11.500M255.500 673.500h2M255.500 682.500h2M255.500 691.500h2M255.500 700.500h2M255.500 709.500h2M246 718.500h11.500M255.500 727.500h2M255.500 736.500h2M255.500 745.500h2M255.500 754.500h2M255.500 763.500h2M246 772.500h11.500M255.500 782.500h2M255.500 791.500h2M255.500 800.500h2M255.500 809.500h2M255.500 818.500h2M246 827.500h11.500M255.500 836.500h2M255.500 845.500h2M255.500 854.500h2M255.500 863.500h2M255.500 872.500h2M246 881.500h11.500M255.500 890.500h2M255.500 899.500h2M255.500 908.500h2M255.500 917.500h2M255.500 926.500h2M246 935.500h11.500M255.500 944.500h2M255.500 953.500h2M255.500 962.500h2M255.500 971.500h2M255.500 115.500h2" stroke="#e0e0e0" stroke-width="1" fill="none" shape-rendering="crispEdges"/></svg>
<!-- sketch -->
<svg style="left:258px;top:109.500px;overflow:hidden" width="1282" height="867.500" viewBox="258 109.500 1282 867.500"><g id="sk" fill="none" stroke="#997e95" stroke-linecap="round" stroke-linejoin="round"><path d="M1331.798 286.673C1334.301 287.786 1341.808 291.539 1346.813 293.347C1351.818 295.154 1359.326 296.822 1361.828 297.518" stroke-width="1.500"/><path d="M953.387 123.352C955.611 125.854 962.563 134.196 966.733 138.367C970.904 142.538 976.465 146.708 978.412 148.377M955.055 145.040C958.114 147.264 965.899 153.660 973.407 158.387C980.914 163.114 995.651 170.899 1000.100 173.402M1200.300 138.367C1201.969 141.981 1207.530 152.269 1210.310 160.055C1213.091 167.841 1215.538 178.685 1216.984 185.080C1218.430 191.475 1218.652 196.202 1218.986 198.427M1136.904 120.015C1138.572 121.683 1144.133 126.966 1146.914 130.025C1149.694 133.084 1152.475 136.976 1153.587 138.367M1377.678 296.683L1379.346 313.367M1335.135 416.803C1336.247 418.194 1339.862 422.365 1341.808 425.145C1343.755 427.926 1345.979 432.097 1346.813 433.487M1073.507 326.713C1074.619 328.382 1078.512 333.943 1080.180 336.723C1081.849 339.504 1082.961 342.285 1083.517 343.397M996.763 311.698C998.710 310.864 1004.549 308.084 1008.442 306.693C1012.335 305.303 1018.174 303.913 1020.120 303.357M985.045 445.005C985.323 449.732 986.574 465.859 986.713 473.367C986.852 480.874 986.018 487.269 985.879 490.050M1033.427 566.793C1032.871 569.296 1031.063 577.916 1030.090 581.808C1029.117 585.701 1028.005 588.760 1027.588 590.150M1056.783 586.813C1057.340 589.594 1059.008 597.964 1060.120 603.497C1061.232 609.030 1062.901 617.261 1063.457 620.013M863.517 621.678L878.532 635.025" stroke-width="2.000"/><path d="M1015.115 183.412C1017.062 184.524 1023.179 189.112 1026.793 190.085C1030.408 191.058 1035.135 189.390 1036.803 189.251M1200.000 140.869C1201.668 144.067 1206.951 152.965 1210.010 160.055C1213.069 167.145 1216.405 175.348 1218.352 183.412C1220.298 191.475 1221.132 204.266 1221.688 208.437M1330.984 471.698C1331.262 476.147 1332.236 490.884 1332.653 498.392C1333.070 505.899 1333.348 513.685 1333.487 516.743" stroke-width="2.500"/><path d="M1150.250 211.773C1151.919 211.356 1157.480 210.661 1160.260 209.271C1163.041 207.881 1165.821 204.405 1166.934 203.432M1091.859 213.442C1092.137 217.613 1092.498 231.376 1093.527 238.467C1094.556 245.557 1097.281 253.065 1098.031 255.984M973.407 278.507L983.417 269.331M1381.849 208.437L1379.346 216.778M1300.934 205.100C1300.517 207.881 1298.293 214.832 1298.432 221.783C1298.571 228.735 1299.822 239.023 1301.768 246.808C1303.715 254.594 1308.720 264.882 1310.110 268.497M1360.160 178.740C1362.107 177.851 1367.946 174.903 1371.839 173.402C1375.731 171.900 1381.570 170.343 1383.517 169.731M1438.572 280.000C1437.738 281.390 1434.957 286.256 1433.567 288.342C1432.177 290.427 1430.786 291.817 1430.230 292.513M1200.000 370.090C1200.417 372.315 1201.668 379.544 1202.503 383.437C1203.337 387.330 1204.588 391.778 1205.005 393.447M1050.150 426.813C1050.428 428.204 1052.653 432.931 1051.818 435.155C1050.984 437.380 1046.257 439.326 1045.145 440.160M973.627 285.025C974.461 283.357 976.129 277.462 978.632 275.015C981.134 272.568 986.974 271.122 988.642 270.344M1388.542 440.000L1389.376 456.683M1268.422 738.462C1269.812 740.964 1274.539 749.028 1276.763 753.477C1278.988 757.926 1280.934 763.209 1281.768 765.155M1197.612 834.030C1197.318 839.900 1196.291 858.980 1195.851 869.253C1195.410 879.527 1195.117 891.268 1194.970 895.671M1048.482 615.005C1047.648 617.786 1044.867 626.961 1043.477 631.688C1042.087 636.415 1040.696 641.420 1040.140 643.367M845.165 635.025C844.887 637.806 843.914 647.259 843.497 651.708C843.080 656.157 842.802 660.050 842.663 661.718M750.070 760.150L753.407 776.834M928.327 911.522L925.685 899.193" stroke-width="3.000"/><path d="M1106.874 111.673L1111.879 121.683M1116.884 111.673L1118.552 121.683M1166.934 126.688L1165.265 138.367M1060.994 210.105C1063.636 209.883 1070.865 208.715 1076.844 208.770C1082.822 208.826 1093.527 210.161 1096.864 210.439M1101.368 246.808L1116.884 247.809M1106.874 225.454C1109.376 224.342 1116.049 219.670 1121.889 218.780C1127.728 217.891 1135.513 218.892 1141.909 220.115C1148.304 221.339 1157.202 225.120 1160.260 226.121M1125.225 273.502C1125.781 274.614 1127.172 278.340 1128.562 280.175C1129.952 282.010 1132.733 283.790 1133.567 284.513M1200.000 195.090C1202.781 195.229 1211.122 195.368 1216.683 195.924C1222.244 196.480 1228.362 198.232 1233.367 198.427C1238.372 198.621 1244.489 197.315 1246.713 197.092M1350.150 446.834L1355.155 460.013M1033.467 330.050C1033.328 332.831 1032.633 342.285 1032.633 346.733C1032.633 351.182 1033.328 355.075 1033.467 356.743M1125.225 283.337C1127.172 283.615 1133.289 285.283 1136.904 285.005C1140.518 284.727 1145.245 282.224 1146.914 281.668M918.572 346.753C921.074 350.090 929.694 359.544 933.587 366.773C937.480 374.003 940.205 384.291 941.929 390.130C943.653 395.969 943.597 399.862 943.931 401.808M838.492 368.442C838.770 370.110 838.770 375.894 840.160 378.452C841.550 381.010 845.721 382.901 846.834 383.790M868.522 398.472L873.527 406.813M796.783 460.030C795.115 462.811 789.276 472.543 786.773 476.713C784.271 480.884 782.603 483.665 781.768 485.055M826.813 533.437C827.648 535.661 829.594 542.891 831.818 546.783C834.043 550.676 838.770 555.125 840.160 556.793M1185.005 615.005L1186.673 635.025M1290.110 736.793C1290.666 740.686 1292.613 751.280 1293.447 760.150C1294.281 769.020 1294.837 785.036 1295.115 790.013M1340.268 934.417L1349.074 944.984M1037.372 925.611C1043.830 924.877 1060.855 922.969 1076.118 921.208C1091.382 919.447 1114.277 916.805 1128.954 915.044C1143.630 913.283 1151.849 911.962 1164.178 910.641C1176.506 909.320 1196.466 907.706 1202.924 907.119M1053.223 823.462C1054.397 824.637 1058.947 826.398 1060.268 830.507C1061.589 834.617 1061.002 845.184 1061.148 848.119M1151.849 790.000C1150.969 793.816 1148.180 805.557 1146.566 812.895C1144.951 820.234 1142.897 830.507 1142.163 834.030M1199.401 842.836C1199.108 848.119 1198.227 865.144 1197.640 874.537C1197.053 883.930 1196.172 895.084 1195.879 899.193M891.879 730.120C891.600 732.345 890.210 738.184 890.210 743.467C890.210 748.750 891.600 758.760 891.879 761.818M757.492 955.551C760.427 954.377 769.233 950.561 775.104 948.507C780.975 946.452 789.780 944.104 792.716 943.223M891.342 907.999L892.223 920.328" stroke-width="4.000"/><path d="M1046.813 125.020C1050.150 126.410 1061.272 130.998 1066.834 133.362C1072.395 135.725 1077.956 138.228 1080.180 139.201M1055.155 111.673L1062.663 126.688M1098.532 211.773C1098.810 215.110 1099.728 225.954 1100.200 231.793C1100.673 237.633 1101.173 244.306 1101.368 246.808M1123.557 213.442C1123.140 217.057 1121.750 227.345 1121.054 235.130C1120.359 242.916 1119.664 255.984 1119.386 260.155M1079.346 265.994C1082.266 266.550 1090.607 269.053 1096.864 269.331C1103.120 269.609 1110.627 268.775 1116.884 267.663C1123.140 266.550 1131.481 263.492 1134.401 262.658M1440.240 236.798C1439.128 239.857 1436.347 249.033 1433.567 255.150C1430.786 261.267 1426.059 268.525 1423.557 273.502C1421.054 278.479 1419.386 283.095 1418.552 285.013M1293.427 441.828C1295.929 442.107 1303.437 442.107 1308.442 443.497C1313.447 444.887 1319.286 447.417 1323.457 450.170C1327.628 452.923 1331.798 458.373 1333.467 460.013M983.417 321.708C983.417 328.660 983.139 348.124 983.417 363.417C983.695 378.710 984.529 399.564 985.085 413.467C985.641 427.370 986.475 441.272 986.753 446.834M1160.260 308.362L1181.949 315.869M1183.617 408.462C1186.398 408.740 1196.408 409.296 1200.300 410.130C1204.193 410.964 1205.861 412.911 1206.974 413.467M916.683 346.733C918.908 348.958 925.581 354.519 930.030 360.080C934.479 365.641 940.318 373.983 943.377 380.100C946.435 386.217 947.548 394.003 948.382 396.783M886.874 376.783C887.708 377.896 891.879 380.676 891.879 383.457C891.879 386.237 888.820 390.686 886.874 393.467C884.927 396.247 881.312 399.028 880.200 400.140M748.402 405.145C750.904 406.257 759.246 409.594 763.417 411.818C767.588 414.043 771.758 417.380 773.427 418.492M873.527 495.065L876.029 516.753M953.607 488.392C952.217 492.563 948.324 505.353 945.265 513.417C942.207 521.480 936.924 532.881 935.255 536.773M1040.100 459.186L1056.783 456.683M1123.517 526.753C1117.956 530.090 1100.160 540.378 1090.150 546.773C1080.140 553.169 1067.906 562.067 1063.457 565.125M1263.417 510.070C1266.197 507.290 1274.539 498.948 1280.100 493.387C1285.661 487.826 1292.335 480.318 1296.783 476.703C1301.232 473.089 1305.125 472.533 1306.793 471.698M1306.793 471.698C1310.686 471.142 1323.477 468.084 1330.150 468.362C1336.823 468.640 1344.053 472.533 1346.834 473.367M1321.808 550.110C1323.199 548.442 1327.092 542.464 1330.150 540.100C1333.209 537.737 1338.492 536.624 1340.160 535.929M1330.150 606.834L1333.487 620.013M1243.397 566.793C1246.177 565.681 1255.631 561.510 1260.080 560.120C1264.529 558.730 1268.422 558.730 1270.090 558.452M1180.000 911.522L1201.134 907.999M1218.746 904.477L1229.313 901.835M960.060 615.005C958.670 621.122 953.665 638.640 951.718 651.708C949.772 664.777 948.938 686.465 948.382 693.417M1123.557 628.352C1126.616 627.796 1136.626 626.683 1141.909 625.015C1147.192 623.347 1153.031 619.454 1155.255 618.342M935.224 886.865C941.094 887.892 958.706 891.855 970.447 893.029C982.189 894.203 993.930 894.057 1005.671 893.910C1017.412 893.763 1030.621 893.470 1040.895 892.149C1051.168 890.828 1062.909 887.012 1067.312 885.985M1174.745 860.447C1175.185 863.383 1176.799 872.776 1177.386 878.059C1177.973 883.343 1178.120 889.800 1178.267 892.149M761.748 706.763L773.427 709.266M720.507 895.671C725.497 895.965 742.228 897.726 750.447 897.432C758.666 897.139 766.592 894.497 769.820 893.910M910.230 340.080C911.899 343.417 918.016 353.983 920.240 360.100C922.465 366.217 923.021 374.003 923.577 376.783M901.889 338.412C903.835 340.914 911.064 348.700 913.567 353.427C916.069 358.154 916.347 364.549 916.904 366.773" stroke-width="5.000"/><path d="M1113.547 152.548C1116.884 152.269 1128.006 152.269 1133.567 150.879C1139.128 149.489 1143.299 145.874 1146.914 144.206C1150.528 142.538 1153.865 141.425 1155.255 140.869M1140.240 155.050C1141.909 153.660 1146.914 146.708 1150.250 146.708C1153.587 146.708 1157.480 151.435 1160.260 155.050C1163.041 158.665 1165.821 166.172 1166.934 168.397M1156.924 123.352L1163.597 136.698M1187.287 128.357C1186.731 132.806 1183.951 145.596 1183.951 155.050C1183.951 164.504 1186.731 180.075 1187.287 185.080M1183.617 208.437C1184.034 210.661 1185.563 217.335 1186.119 221.783C1186.676 226.232 1186.815 232.906 1186.954 235.130M1186.954 235.130C1188.900 234.296 1195.017 231.654 1198.632 230.125C1202.247 228.596 1206.974 226.649 1208.642 225.954M1150.250 121.683L1166.934 148.377M1062.663 195.924C1066.138 195.507 1075.870 193.422 1083.517 193.422C1091.163 193.422 1100.200 194.673 1108.542 195.924C1116.884 197.176 1125.781 199.261 1133.567 200.929C1141.352 202.598 1151.641 205.100 1155.255 205.934M1033.467 266.828C1034.857 268.775 1039.584 275.476 1041.808 278.507C1044.033 281.538 1045.979 283.929 1046.813 285.013M1233.367 260.155C1235.035 259.321 1240.596 254.872 1243.377 255.150C1246.157 255.428 1248.938 260.711 1250.050 261.823M1238.372 211.773C1239.206 215.110 1242.821 225.120 1243.377 231.793C1243.933 238.467 1243.377 246.808 1241.708 251.813C1240.040 256.818 1234.757 260.155 1233.367 261.823M1200.000 406.793L1210.010 411.798M1221.688 460.013C1223.635 458.929 1228.640 454.313 1233.367 453.507C1238.094 452.700 1247.269 454.897 1250.050 455.175M980.080 290.010C980.636 291.956 983.695 297.796 983.417 301.688C983.139 305.581 979.246 311.420 978.412 313.367M1046.813 286.673C1047.370 289.176 1049.316 296.405 1050.150 301.688C1050.984 306.971 1051.540 315.591 1051.818 318.372M1141.909 323.377C1143.855 324.211 1150.528 325.045 1153.587 328.382C1156.646 331.718 1159.148 340.894 1160.260 343.397M915.849 380.100C916.322 377.876 918.546 371.202 918.685 366.753C918.824 362.305 917.017 355.631 916.683 353.407M913.567 343.417C914.957 346.197 921.019 353.983 921.909 360.100C922.798 366.217 919.406 376.783 918.906 380.120M795.115 366.773C796.227 365.383 799.786 360.378 801.788 358.432C803.790 356.485 806.237 355.651 807.127 355.095M836.823 358.432C838.492 358.988 843.497 362.325 846.834 361.768C850.170 361.212 855.175 356.207 856.844 355.095M778.432 375.115C774.539 376.783 762.583 382.067 755.075 385.125C747.568 388.184 739.226 390.686 733.387 393.467C727.548 396.247 722.264 400.418 720.040 401.808M935.255 530.100C935.672 532.881 936.924 541.222 937.758 546.783C938.592 552.345 939.843 560.686 940.260 563.467M1176.904 456.683L1175.235 480.040M998.392 460.020C998.670 465.025 999.504 480.040 1000.060 490.050C1000.616 500.060 1001.450 515.075 1001.728 520.080M1060.120 546.773C1059.564 551.222 1058.730 564.847 1056.783 573.467C1054.837 582.087 1050.666 590.734 1048.442 598.492C1046.217 606.250 1044.271 616.426 1043.437 620.013M1245.305 566.793L1259.987 560.120M1360.180 445.005C1361.570 446.951 1366.798 451.956 1368.522 456.683C1370.246 461.410 1370.190 470.586 1370.524 473.367M1346.834 465.025C1347.946 467.806 1352.951 474.757 1353.507 481.708C1354.063 488.660 1351.560 500.338 1350.170 506.733C1348.780 513.129 1345.999 517.856 1345.165 520.080M1370.190 528.422C1370.468 530.368 1370.190 537.320 1371.859 540.100C1373.527 542.881 1377.976 545.661 1380.200 545.105C1382.425 544.549 1385.205 539.822 1385.205 536.763C1385.205 533.705 1381.034 528.422 1380.200 526.753M1180.000 590.150C1180.556 592.931 1182.503 601.856 1183.337 606.834C1184.171 611.811 1184.727 617.817 1185.005 620.013M1316.803 710.100C1317.360 712.881 1319.306 722.335 1320.140 726.783C1320.974 731.232 1321.530 735.125 1321.808 736.793M1325.145 716.773C1327.370 718.442 1335.155 724.003 1338.492 726.783C1341.828 729.564 1344.053 732.345 1345.165 733.457M1261.014 967.880C1263.363 966.118 1270.994 959.661 1275.104 957.312C1279.213 954.964 1283.910 954.377 1285.671 953.790M1066.834 673.397C1069.614 672.841 1077.400 670.894 1083.517 670.060C1089.634 669.226 1097.142 668.114 1103.537 668.392C1109.932 668.670 1118.830 671.172 1121.889 671.728M1175.275 626.683C1175.553 632.244 1176.944 650.318 1176.944 660.050C1176.944 669.782 1175.553 680.904 1175.275 685.075M1123.557 650.040C1126.337 650.596 1134.957 650.874 1140.240 653.377C1145.523 655.879 1152.753 663.109 1155.255 665.055M1056.823 740.130C1058.492 742.911 1062.941 752.643 1066.834 756.813C1070.726 760.984 1076.009 764.043 1080.180 765.155C1084.351 766.267 1089.912 763.765 1091.859 763.487M926.418 790.000C925.537 797.338 921.868 819.353 921.134 834.030C920.400 848.706 920.841 865.144 922.015 878.059C923.189 890.975 927.152 905.945 928.179 911.522M1181.789 807.612C1182.376 805.557 1183.551 798.219 1185.312 795.284C1187.073 792.348 1191.182 790.881 1192.356 790.000M961.949 610.000C960.002 618.342 953.607 643.367 950.270 660.050C946.934 676.733 944.709 690.636 941.929 710.100C939.148 729.564 934.977 765.711 933.587 776.834M836.823 400.140C838.492 403.477 845.721 413.487 846.834 420.160C847.946 426.834 844.053 436.844 843.497 440.180" stroke-width="6.000"/><path d="M928.362 110.005C930.864 112.786 938.094 121.405 943.377 126.688C948.660 131.971 954.777 136.976 960.060 141.703C965.343 146.430 968.402 149.489 975.075 155.050C981.748 160.611 991.480 169.787 1000.100 175.070C1008.720 180.353 1020.398 184.190 1026.793 186.748C1033.189 189.307 1036.525 189.807 1038.472 190.419M1130.230 155.050C1133.567 155.884 1143.577 160.055 1150.250 160.055C1156.924 160.055 1166.934 155.884 1170.270 155.050M1421.889 280.000C1420.498 282.503 1416.884 289.732 1413.547 295.015C1410.210 300.298 1405.761 306.693 1401.869 311.698C1397.976 316.703 1392.137 322.821 1390.190 325.045M1306.773 426.813C1307.051 424.311 1306.773 415.413 1308.442 411.798C1310.110 408.184 1314.559 404.847 1316.783 405.125C1319.008 405.403 1321.232 409.852 1321.788 413.467C1322.345 417.082 1320.398 424.589 1320.120 426.813M1321.788 426.813C1322.067 424.033 1322.067 413.467 1323.457 410.130C1324.847 406.793 1328.184 405.403 1330.130 406.793C1332.077 408.184 1334.857 414.579 1335.135 418.472C1335.413 422.365 1332.355 428.204 1331.798 430.150M1060.160 293.347C1061.272 295.849 1064.609 302.801 1066.834 308.362C1069.058 313.923 1072.395 323.655 1073.507 326.713M920.020 460.013C922.244 456.426 928.918 444.303 933.367 438.492C937.816 432.680 944.489 427.370 946.713 425.145M838.492 312.052C836.545 313.387 829.872 316.501 826.813 320.060C823.755 323.619 820.974 328.263 820.140 333.407C819.306 338.551 821.530 348.005 821.808 350.924M795.115 341.748C793.169 343.139 786.217 346.475 783.437 350.090C780.656 353.705 777.876 358.988 778.432 363.437C778.988 367.886 783.159 373.725 786.773 376.783C790.388 379.842 795.393 381.788 800.120 381.788C804.847 381.788 811.242 379.286 815.135 376.783C819.028 374.281 822.087 368.442 823.477 366.773M741.728 415.155C743.953 415.711 750.348 417.102 755.075 418.492C759.802 419.882 765.363 423.219 770.090 423.497C774.817 423.775 781.212 420.716 783.437 420.160M788.442 386.793C788.998 388.462 792.057 392.911 791.778 396.803C791.500 400.696 789.276 406.257 786.773 410.150C784.271 414.043 778.432 418.492 776.763 420.160M768.422 588.492C771.758 590.160 781.490 594.915 788.442 598.502C795.393 602.089 806.515 608.095 810.130 610.013M1131.859 543.437C1126.297 545.383 1109.892 550.944 1098.492 555.115C1087.092 559.286 1069.296 566.237 1063.457 568.462M1223.617 456.683C1224.173 460.854 1227.232 473.367 1226.954 481.708C1226.676 490.050 1221.949 499.226 1221.949 506.733C1221.949 514.241 1226.676 519.802 1226.954 526.753C1227.232 533.705 1224.173 544.827 1223.617 548.442M1195.255 473.367C1196.646 475.035 1201.929 479.762 1203.597 483.377C1205.265 486.991 1206.099 492.274 1205.265 495.055C1204.431 497.836 1199.704 499.226 1198.592 500.060M1203.597 556.783C1203.041 559.564 1199.704 569.296 1200.260 573.467C1200.816 577.638 1204.431 579.584 1206.934 581.808C1209.436 584.033 1213.885 585.979 1215.275 586.813M1240.300 523.417C1240.856 528.978 1244.193 545.661 1243.637 556.783C1243.081 567.906 1237.520 579.612 1236.964 590.150C1236.408 600.688 1239.744 615.036 1240.300 620.013M1231.959 450.010C1233.349 451.678 1236.964 459.186 1240.300 460.020C1243.637 460.854 1250.032 455.849 1251.979 455.015M1389.376 456.683C1389.571 460.854 1389.988 473.367 1390.544 481.708C1391.100 490.050 1392.073 499.504 1392.713 506.733C1393.352 513.963 1394.103 522.026 1394.381 525.085M1316.803 481.708C1318.194 482.543 1322.921 486.991 1325.145 486.713C1327.370 486.435 1329.316 481.152 1330.150 480.040M1313.467 440.000C1317.638 440.834 1334.877 443.615 1338.492 445.005C1342.107 446.395 1335.711 447.786 1335.155 448.342M1263.417 496.723C1262.026 497.001 1256.604 495.611 1255.075 498.392C1253.546 501.172 1253.129 509.236 1254.241 513.407C1255.353 517.578 1258.273 521.192 1261.748 523.417C1265.224 525.641 1272.871 526.197 1275.095 526.753M1206.693 553.447C1205.581 556.227 1199.464 565.403 1200.020 570.130C1200.576 574.857 1206.971 579.306 1210.030 581.808C1213.089 584.311 1216.981 584.589 1218.372 585.145M1410.230 648.372C1409.952 651.708 1410.786 662.831 1408.562 668.392C1406.337 673.953 1398.830 679.514 1396.884 681.738M1385.205 668.392C1387.986 669.782 1396.049 675.899 1401.889 676.733C1407.728 677.568 1417.182 673.953 1420.240 673.397M1371.859 610.000C1372.693 612.781 1374.083 622.234 1376.864 626.683C1379.644 631.132 1386.595 635.025 1388.542 636.693M1345.165 716.773L1346.834 733.457M1073.507 616.673C1075.175 618.342 1079.346 624.737 1083.517 626.683C1087.688 628.630 1096.029 628.074 1098.532 628.352M826.813 776.834L833.487 790.013M943.597 610.000C942.485 618.342 939.148 640.586 936.924 660.050C934.699 679.514 931.919 705.123 930.250 726.783C928.582 748.444 927.470 779.475 926.914 790.013M930.088 790.000C928.914 795.871 924.511 813.482 923.043 825.224C921.576 836.965 920.989 848.706 921.282 860.447C921.576 872.189 924.217 889.800 924.805 895.671" stroke-width="7.000"/><path d="M1016.783 188.417C1015.393 189.946 1011.500 195.646 1008.442 197.593C1005.383 199.539 1002.046 200.512 998.432 200.095C994.817 199.678 990.229 197.871 986.753 195.090C983.278 192.310 979.663 187.583 977.578 183.412C975.492 179.241 974.380 173.680 974.241 170.065C974.102 166.450 975.214 163.114 976.743 161.723C978.273 160.333 981.192 160.055 983.417 161.723C985.641 163.392 987.588 168.119 990.090 171.733C992.593 175.348 995.373 180.353 998.432 183.412C1001.490 186.470 1006.773 188.973 1008.442 190.085M1381.014 214.276C1380.041 212.747 1378.929 209.132 1375.175 205.100C1371.421 201.068 1364.331 194.534 1358.492 190.085C1352.653 185.636 1346.535 181.048 1340.140 178.407C1333.745 175.765 1325.681 174.236 1320.120 174.236C1314.559 174.236 1310.388 175.487 1306.773 178.407C1303.159 181.326 1300.323 185.914 1298.432 191.753C1296.541 197.593 1295.568 205.656 1295.429 213.442C1295.290 221.227 1296.263 230.959 1297.598 238.467C1298.932 245.974 1300.795 252.370 1303.437 258.487C1306.078 264.604 1310.527 270.749 1313.447 275.170C1316.366 279.591 1319.703 283.373 1320.954 285.013" stroke-width="7.500"/><path d="M955.055 110.005C957.001 112.786 962.563 120.849 966.733 126.688C970.904 132.528 975.631 139.479 980.080 145.040C984.529 150.601 988.978 155.050 993.427 160.055C997.876 165.060 1002.881 170.899 1006.773 175.070C1010.666 179.241 1015.115 183.412 1016.783 185.080M1160.260 140.035C1162.485 140.591 1169.714 140.869 1173.607 143.372C1177.500 145.874 1181.949 153.104 1183.617 155.050M1181.949 195.090C1185.007 195.702 1193.961 198.760 1200.300 198.760C1206.640 198.760 1216.706 195.702 1219.987 195.090M1141.909 126.688C1144.967 130.025 1154.977 139.201 1160.260 146.708C1165.543 154.216 1171.382 167.563 1173.607 171.733M973.407 285.013C975.075 282.817 978.968 274.169 983.417 271.834C987.866 269.498 993.983 270.443 1000.100 270.999C1006.217 271.555 1014.559 272.835 1020.120 275.170C1025.681 277.506 1031.242 283.373 1033.467 285.013M1383.517 169.731C1387.688 169.287 1401.590 166.450 1408.542 167.062C1415.493 167.674 1420.498 169.843 1425.225 173.402C1429.952 176.961 1433.845 182.578 1436.904 188.417C1439.962 194.256 1442.131 201.207 1443.577 208.437C1445.023 215.666 1445.801 224.008 1445.579 231.793C1445.356 239.579 1443.633 247.921 1442.242 255.150C1440.852 262.380 1438.628 270.193 1437.237 275.170C1435.847 280.147 1434.457 283.373 1433.901 285.013M1311.778 280.000C1313.725 282.224 1318.730 289.176 1323.457 293.347C1328.184 297.518 1334.023 301.271 1340.140 305.025C1346.257 308.779 1353.765 313.089 1360.160 315.869C1366.555 318.650 1375.453 320.735 1378.512 321.708M1383.517 353.407C1383.795 359.246 1384.490 377.041 1385.185 388.442C1385.880 399.842 1386.993 409.880 1387.688 421.808C1388.383 433.737 1389.078 453.646 1389.356 460.013M1255.055 435.155C1255.333 432.375 1255.333 422.087 1256.723 418.472C1258.114 414.857 1261.172 412.355 1263.397 413.467C1265.621 414.579 1269.514 421.530 1270.070 425.145C1270.626 428.760 1267.290 433.487 1266.733 435.155M973.407 283.337C975.631 284.449 981.748 289.454 986.753 290.010C991.758 290.566 997.876 287.786 1003.437 286.673C1008.998 285.561 1017.340 283.893 1020.120 283.337M1020.120 293.347C1021.510 296.683 1026.237 307.249 1028.462 313.367C1030.686 319.484 1032.633 327.269 1033.467 330.050M1198.632 360.080C1199.188 363.417 1200.856 373.427 1201.969 380.100C1203.081 386.773 1203.637 393.169 1205.305 400.120C1206.974 407.072 1210.032 414.023 1211.979 421.808C1213.925 429.594 1216.149 442.663 1216.984 446.834M955.055 438.492C959.226 440.994 973.685 449.920 980.080 453.507C986.475 457.094 991.202 458.929 993.427 460.013M821.808 275.349C818.694 275.071 811.520 278.407 806.793 281.688C802.067 284.969 796.783 290.308 793.447 295.035C790.110 299.762 787.608 305.462 786.773 310.050C785.939 314.638 786.495 320.116 788.442 322.563C790.388 325.009 794.837 325.983 798.452 324.731C802.067 323.480 806.515 319.448 810.130 315.055C813.745 310.662 817.582 303.655 820.140 298.372C822.698 293.089 825.201 287.194 825.479 283.357C825.757 279.520 824.923 275.627 821.808 275.349zM782.603 325.899C784.966 327.429 791.639 331.877 796.783 335.075C801.927 338.273 809.018 342.583 813.467 345.085C817.916 347.588 821.808 349.256 823.477 350.090M826.813 350.090C828.760 348.700 834.599 345.085 838.492 341.748C842.385 338.412 848.224 332.016 850.170 330.070M783.437 420.160C785.661 420.994 793.447 422.941 796.783 425.165C800.120 427.390 802.345 432.117 803.457 433.507M830.150 386.793C831.818 389.574 836.823 399.028 840.160 403.477C843.497 407.926 849.336 409.594 850.170 413.487C851.004 417.380 846.834 422.412 845.165 426.834C843.497 431.255 840.994 437.817 840.160 440.013M940.260 368.442C941.372 372.057 945.265 383.735 946.934 390.130C948.602 396.525 947.490 399.584 950.270 406.813C953.051 414.043 961.393 429.058 963.617 433.507M735.055 433.337C737.836 434.171 746.455 438.342 751.738 438.342C757.021 438.342 764.251 434.171 766.753 433.337M753.407 445.015C755.631 447.518 762.305 460.864 766.753 460.030C771.202 459.196 776.763 445.015 780.100 440.010C783.437 435.005 785.661 431.668 786.773 430.000M836.823 491.728C838.492 495.343 843.497 507.021 846.834 513.417C850.170 519.812 852.951 526.207 856.844 530.100C860.736 533.993 865.185 536.773 870.190 536.773C875.195 536.773 884.093 531.212 886.874 530.100M830.150 433.337C832.931 434.449 842.385 436.951 846.834 440.010C851.282 443.069 855.175 449.742 856.844 451.688M936.924 460.030C935.255 463.367 929.694 473.933 926.914 480.050C924.133 486.167 921.352 493.953 920.240 496.733M996.723 540.100C996.167 547.051 994.499 568.490 993.387 581.808C992.274 595.127 990.606 613.646 990.050 620.013M1230.050 460.020C1228.938 462.244 1223.655 468.362 1223.377 473.367C1223.099 478.372 1225.045 483.933 1228.382 490.050C1231.718 496.167 1239.226 505.065 1243.397 510.070C1247.568 515.075 1251.738 518.412 1253.407 520.080M1310.130 550.110C1310.130 552.891 1308.740 561.510 1310.130 566.793C1311.520 572.077 1315.135 578.472 1318.472 581.808C1321.808 585.145 1328.204 585.979 1330.150 586.813M1311.798 586.813C1311.798 589.594 1310.130 598.770 1311.798 603.497C1313.467 608.224 1318.750 612.422 1321.808 615.175C1324.867 617.928 1328.760 619.207 1330.150 620.013M1403.557 568.462C1405.781 570.964 1413.567 577.638 1416.904 583.477C1420.240 589.316 1423.021 597.407 1423.577 603.497C1424.133 609.586 1420.796 617.261 1420.240 620.013M1278.432 666.723C1278.293 669.782 1277.598 679.514 1277.598 685.075C1277.598 690.636 1278.293 697.588 1278.432 700.090M1310.130 653.377C1313.189 648.650 1319.306 645.035 1323.477 645.035C1327.648 645.035 1332.375 648.650 1335.155 653.377C1337.936 658.104 1340.160 667.280 1340.160 673.397C1340.160 679.514 1337.936 686.187 1335.155 690.080C1332.375 693.973 1327.648 697.031 1323.477 696.753C1319.306 696.475 1313.189 692.305 1310.130 688.412C1307.072 684.519 1305.125 679.236 1305.125 673.397C1305.125 667.558 1307.072 658.104 1310.130 653.377zM1261.748 740.130C1262.026 744.857 1262.861 760.178 1263.417 768.492C1263.973 776.806 1264.807 786.426 1265.085 790.013M1368.522 713.437C1370.468 716.217 1375.751 724.559 1380.200 730.120C1384.649 735.681 1392.713 744.023 1395.215 746.803M1380.200 700.090L1383.537 726.783M1396.626 899.193C1400.148 897.726 1412.183 892.149 1417.760 890.387C1423.337 888.626 1428.033 888.920 1430.088 888.626M1060.160 620.010C1058.492 624.459 1054.043 638.084 1050.150 646.703C1046.257 655.323 1039.862 666.167 1036.803 671.728C1033.745 677.290 1032.633 678.680 1031.798 680.070M1083.517 696.753L1086.854 706.763M1046.178 798.806C1045.151 803.209 1042.216 816.418 1040.014 825.224C1037.813 834.030 1034.143 847.238 1032.969 851.641M973.970 885.104C973.383 888.333 970.447 898.313 970.447 904.477C970.447 910.641 973.383 919.153 973.970 922.089M1053.223 929.133C1053.516 930.895 1056.452 936.765 1054.984 939.701C1053.516 942.636 1046.178 945.571 1044.417 946.745M1164.178 790.000C1165.058 793.816 1168.874 805.851 1169.461 812.895C1170.048 819.940 1167.993 829.040 1167.700 832.268M711.698 713.437C712.811 715.383 714.479 722.057 718.372 725.115C722.264 728.174 732.274 730.676 735.055 731.788M866.854 626.683C866.019 632.244 862.127 652.821 861.849 660.050C861.570 667.280 863.795 665.055 865.185 670.060C866.575 675.065 870.468 682.016 870.190 690.080C869.912 698.144 864.629 713.715 863.517 718.442M806.793 610.000C810.686 611.390 822.365 615.839 830.150 618.342C837.936 620.844 849.614 623.903 853.507 625.015M763.417 765.155C762.305 767.102 758.412 772.690 756.743 776.834C755.075 780.977 753.963 787.817 753.407 790.013M796.783 776.834C799.008 778.224 806.793 782.979 810.130 785.175C813.467 787.372 815.691 789.207 816.803 790.013M983.637 700.090C985.027 701.480 989.254 706.763 991.979 708.432C994.704 710.100 998.652 709.822 999.987 710.100M743.403 948.507C742.522 950.855 739.293 957.899 738.119 962.596C736.945 967.292 736.651 974.337 736.358 976.685M834.984 790.000C836.452 794.403 841.735 806.144 843.790 816.418C845.845 826.691 846.725 845.771 847.312 851.641" stroke-width="8.000"/><path d="M1015.115 117.846C1019.342 117.846 1024.791 120.015 1027.794 123.018C1030.797 126.021 1033.133 131.582 1033.133 135.864C1033.133 140.146 1030.797 145.707 1027.794 148.710C1024.791 151.713 1019.342 153.882 1015.115 153.882C1010.889 153.882 1005.439 151.713 1002.436 148.710C999.433 145.707 997.097 140.146 997.097 135.864C997.097 131.582 999.433 126.021 1002.436 123.018C1005.439 120.015 1010.889 117.846 1015.115 117.846z" stroke-width="8.300"/><path d="M1095.195 139.201C1097.420 140.730 1103.537 145.179 1108.542 148.377C1113.547 151.574 1118.830 155.050 1125.225 158.387C1131.621 161.723 1139.962 165.338 1146.914 168.397C1153.865 171.455 1160.816 174.236 1166.934 176.738C1173.051 179.241 1180.836 182.300 1183.617 183.412M1230.864 181.743C1232.115 184.524 1235.452 191.753 1238.372 198.427C1241.291 205.100 1245.879 214.276 1248.382 221.783C1250.884 229.291 1253.109 237.077 1253.387 243.472C1253.665 249.867 1250.606 257.375 1250.050 260.155M1200.000 231.793C1202.224 230.125 1208.898 222.896 1213.347 221.783C1217.796 220.671 1223.079 222.618 1226.693 225.120C1230.308 227.623 1234.479 232.350 1235.035 236.798C1235.591 241.247 1233.089 248.755 1230.030 251.813C1226.971 254.872 1218.908 254.594 1216.683 255.150M1230.030 446.834C1230.586 444.053 1231.420 434.599 1233.367 430.150C1235.313 425.701 1238.928 421.252 1241.708 420.140C1244.489 419.028 1247.826 420.974 1250.050 423.477C1252.274 425.979 1254.221 433.209 1255.055 435.155M1323.457 438.492C1326.515 438.492 1335.969 437.102 1341.808 438.492C1347.648 439.882 1353.765 443.247 1358.492 446.834C1363.219 450.420 1368.224 457.817 1370.170 460.013M1205.005 393.447C1206.117 396.783 1209.732 405.959 1211.678 413.467C1213.625 420.974 1215.571 430.734 1216.683 438.492C1217.796 446.250 1218.074 456.426 1218.352 460.013M1006.773 301.688C1011.222 301.966 1023.457 301.410 1033.467 303.357C1043.477 305.303 1055.711 309.474 1066.834 313.367C1077.956 317.259 1089.078 321.986 1100.200 326.713C1111.322 331.440 1122.445 337.001 1133.567 341.728C1144.689 346.455 1161.372 352.851 1166.934 355.075M1146.914 301.688C1149.138 303.079 1155.811 306.415 1160.260 310.030C1164.709 313.645 1169.714 317.816 1173.607 323.377C1177.500 328.938 1181.114 338.392 1183.617 343.397C1186.119 348.402 1187.788 351.738 1188.622 353.407M900.000 450.170C902.224 447.390 908.898 439.048 913.347 433.487C917.796 427.926 922.523 422.365 926.693 416.803C930.864 411.242 936.425 402.901 938.372 400.120M825.145 281.688C827.092 284.052 832.931 291.420 836.823 295.869C840.716 300.318 843.775 303.238 848.502 308.382C853.229 313.526 862.405 323.675 865.185 326.733M868.522 328.735C871.859 328.958 881.590 329.013 888.542 330.070C895.493 331.127 903.835 332.295 910.230 335.075C916.626 337.856 922.187 342.583 926.914 346.753C931.641 350.924 936.034 355.095 938.592 360.100C941.150 365.105 941.651 374.003 942.262 376.783M713.367 416.823C715.591 418.492 721.708 423.497 726.713 426.834C731.718 430.170 738.670 434.647 743.397 436.844C748.124 439.040 753.129 439.485 755.075 440.013M863.517 400.140C864.073 402.921 864.629 411.818 866.854 416.823C869.078 421.828 873.805 426.305 876.864 430.170C879.922 434.035 883.815 438.373 885.205 440.013M765.085 576.813C768.978 577.370 780.378 577.926 788.442 580.150C796.505 582.375 805.681 586.545 813.467 590.160C821.252 593.775 829.594 598.530 835.155 601.839C840.716 605.147 844.887 608.651 846.834 610.013M920.240 496.733C919.684 502.295 918.572 520.090 916.904 530.100C915.235 540.110 914.123 548.452 910.230 556.793C906.337 565.135 898.552 573.477 893.547 580.150C888.542 586.823 883.815 591.856 880.200 596.834C876.585 601.811 873.249 607.817 871.859 610.013M930.250 430.000C927.470 433.615 918.850 445.849 913.567 451.688C908.284 457.528 901.054 462.811 898.552 465.035M1156.884 460.020L1155.215 478.372M1186.914 456.683L1191.919 490.050M1020.080 543.437C1023.417 546.217 1033.427 554.281 1040.100 560.120C1046.773 565.959 1053.169 572.077 1060.120 578.472C1067.072 584.867 1076.803 593.487 1081.808 598.492C1086.813 603.497 1088.760 606.834 1090.150 608.502M1223.617 540.100C1223.339 545.661 1221.393 563.735 1221.949 573.467C1222.505 583.199 1225.007 590.734 1226.954 598.492C1228.900 606.250 1232.515 616.426 1233.627 620.013M1250.310 490.050C1251.423 494.221 1255.371 506.733 1256.984 515.075C1258.596 523.417 1259.486 535.929 1259.987 540.100M1355.175 450.010C1356.287 453.903 1360.458 465.303 1361.849 473.367C1363.239 481.430 1364.629 490.050 1363.517 498.392C1362.405 506.733 1359.068 515.909 1355.175 523.417C1351.282 530.924 1345.999 537.598 1340.160 543.437C1334.321 549.276 1326.813 555.115 1320.140 558.452C1313.467 561.788 1306.793 563.735 1300.120 563.457C1293.447 563.179 1286.217 560.676 1280.100 556.783C1273.983 552.891 1268.144 546.217 1263.417 540.100C1258.690 533.983 1254.519 526.197 1251.738 520.080C1248.958 513.963 1247.568 506.177 1246.733 503.397M1260.080 456.683C1260.636 459.464 1263.695 468.084 1263.417 473.367C1263.139 478.650 1259.246 485.879 1258.412 488.382M1310.130 550.110C1311.520 547.608 1314.579 539.544 1318.472 535.095C1322.365 530.646 1327.370 525.919 1333.487 523.417C1339.604 520.914 1347.390 520.080 1355.175 520.080C1362.961 520.080 1372.693 520.636 1380.200 523.417C1387.708 526.197 1394.937 531.758 1400.220 536.763C1405.503 541.768 1409.674 548.442 1411.899 553.447C1414.123 558.452 1413.289 564.569 1413.567 566.793M1235.055 460.020C1234.221 465.025 1230.050 479.484 1230.050 490.050C1230.050 500.616 1233.387 512.295 1235.055 523.417C1236.723 534.539 1239.226 551.222 1240.060 556.783M1221.708 581.808C1222.264 584.589 1223.655 592.124 1225.045 598.492C1226.435 604.859 1229.216 616.426 1230.050 620.013M1263.417 573.467C1265.085 576.247 1270.368 584.589 1273.427 590.150C1276.485 595.711 1279.544 601.856 1281.768 606.834C1283.993 611.811 1285.939 617.817 1286.773 620.013M1346.834 660.050C1349.892 656.991 1355.731 656.157 1360.180 658.382C1364.629 660.606 1370.746 667.558 1373.527 673.397C1376.307 679.236 1377.976 687.300 1376.864 693.417C1375.751 699.534 1370.746 707.041 1366.854 710.100C1362.961 713.159 1357.400 713.993 1353.507 711.768C1349.614 709.544 1345.443 702.593 1343.497 696.753C1341.550 690.914 1341.272 682.851 1341.828 676.733C1342.385 670.616 1343.775 663.109 1346.834 660.050zM1385.205 751.808C1386.039 755.423 1388.542 767.129 1390.210 773.497C1391.879 779.864 1394.381 787.261 1395.215 790.013M1262.776 860.447C1265.124 859.567 1272.462 854.577 1276.865 855.164C1281.268 855.751 1285.965 860.154 1289.193 863.970C1292.422 867.786 1296.238 872.189 1296.238 878.059C1296.238 883.930 1292.129 892.736 1289.193 899.193C1286.258 905.651 1282.149 910.935 1278.626 916.805C1275.104 922.676 1269.820 931.482 1268.059 934.417M1338.507 842.836C1339.974 847.238 1344.964 860.447 1347.312 869.253C1349.661 878.059 1350.835 889.800 1352.596 895.671C1354.357 901.542 1356.999 903.009 1357.880 904.477M1183.617 615.005C1184.173 622.513 1185.841 644.201 1186.954 660.050C1188.066 675.899 1189.456 694.807 1190.290 710.100C1191.124 725.393 1191.403 738.490 1191.959 751.808C1192.515 765.127 1193.349 783.646 1193.627 790.013M984.537 885.104C986.592 883.930 992.756 878.646 996.865 878.059C1000.975 877.472 1005.377 878.059 1009.193 881.582C1013.009 885.104 1017.412 893.323 1019.760 899.193C1022.109 905.064 1022.696 913.870 1023.283 916.805M942.268 899.193C942.562 901.542 941.388 909.173 944.030 913.283C946.671 917.392 950.781 922.969 958.119 923.850C965.457 924.731 977.199 919.741 988.059 918.566C998.920 917.392 1013.890 917.686 1023.283 916.805C1032.676 915.925 1040.895 913.870 1044.417 913.283M750.447 800.567C752.502 807.025 758.079 828.453 762.776 839.313C767.472 850.174 773.049 857.512 778.626 865.731C784.203 873.950 793.303 884.810 796.238 888.626M768.059 879.820C765.124 881.288 758.373 886.278 750.447 888.626C742.522 890.975 726.818 891.268 720.507 893.910C714.196 896.552 714.050 899.487 712.582 904.477C711.114 909.467 708.913 918.566 711.701 923.850C714.490 929.133 722.268 932.949 729.313 936.178C736.358 939.407 746.338 942.342 753.970 943.223C761.602 944.104 769.820 943.516 775.104 941.462C780.387 939.407 781.562 935.004 785.671 930.895C789.780 926.785 797.412 919.153 799.760 916.805M836.745 860.447C837.919 866.318 841.735 882.462 843.790 895.671C845.845 908.880 848.193 932.362 849.074 939.701" stroke-width="9.000"/><path d="M1015.115 111.673C1018.174 112.786 1027.628 115.566 1033.467 118.347C1039.306 121.127 1044.589 124.742 1050.150 128.357C1055.711 131.971 1061.272 136.420 1066.834 140.035C1072.395 143.650 1080.736 148.377 1083.517 150.045M1171.939 180.075C1172.773 183.134 1175.887 191.475 1176.944 198.427C1178.000 205.378 1178.501 213.720 1178.278 221.783C1178.056 229.847 1177.444 238.745 1175.609 246.808C1173.774 254.872 1169.964 263.798 1167.267 270.165C1164.570 276.533 1160.733 282.539 1159.426 285.013M1174.441 110.005C1174.636 114.732 1175.136 128.079 1175.609 138.367C1176.082 148.655 1176.443 161.723 1177.277 171.733C1178.111 181.743 1179.780 190.085 1180.614 198.427C1181.448 206.768 1181.726 215.666 1182.282 221.783C1182.838 227.901 1183.673 232.906 1183.951 235.130M1160.260 188.417C1164.153 190.224 1175.553 195.368 1183.617 199.261C1191.681 203.154 1202.580 208.520 1208.642 211.773C1214.704 215.027 1218.096 217.613 1219.987 218.780M1200.000 206.768C1202.781 207.046 1211.678 207.603 1216.683 208.437C1221.688 209.271 1227.806 211.217 1230.030 211.773M1377.678 322.543C1372.534 324.211 1359.465 333.526 1357.658 337.558C1355.850 341.589 1360.299 344.314 1366.834 346.733C1373.368 349.152 1391.441 352.211 1396.864 352.072C1402.286 351.933 1400.756 349.987 1399.366 345.899C1397.976 341.812 1392.137 331.440 1388.522 327.548C1384.907 323.655 1382.822 320.874 1377.678 322.543zM977.077 363.750L993.927 364.585M1030.130 335.055C1027.906 340.338 1020.676 356.465 1016.783 366.753C1012.891 377.041 1009.832 387.051 1006.773 396.783C1003.715 406.515 1001.212 414.607 998.432 425.145C995.651 435.683 991.480 454.202 990.090 460.013M1030.130 378.432C1030.408 382.881 1031.242 396.505 1031.798 405.125C1032.355 413.745 1032.355 422.087 1033.467 430.150C1034.579 438.214 1037.638 449.614 1038.472 453.507M1135.235 363.417C1134.957 368.978 1134.262 385.661 1133.567 396.783C1132.872 407.906 1131.760 419.612 1131.064 430.150C1130.369 440.688 1129.674 455.036 1129.396 460.013M900.000 333.387C902.224 333.943 908.898 334.499 913.347 336.723C917.796 338.948 922.801 342.285 926.693 346.733C930.586 351.182 934.479 357.300 936.703 363.417C938.928 369.534 939.762 376.485 940.040 383.437C940.318 390.388 938.650 401.510 938.372 405.125M933.367 460.013C936.147 457.817 943.933 450.977 950.050 446.834C956.167 442.690 962.841 438.770 970.070 435.155C977.300 431.540 987.310 427.092 993.427 425.145C999.544 423.199 1004.549 423.755 1006.773 423.477M848.836 301.708C850.170 303.933 854.063 310.829 856.844 315.055C859.624 319.282 864.073 325.065 865.519 327.067M868.522 328.402C870.468 330.348 877.142 334.797 880.200 340.080C883.259 345.363 886.039 353.427 886.874 360.100C887.708 366.773 887.430 374.559 885.205 380.120C882.981 385.681 878.532 390.631 873.527 393.467C868.522 396.303 860.736 397.415 855.175 397.137C849.614 396.859 844.609 394.635 840.160 391.798C835.711 388.962 830.984 384.291 828.482 380.120C825.979 375.949 825.701 368.998 825.145 366.773M776.763 368.442C773.149 369.554 762.861 372.335 755.075 375.115C747.290 377.896 737.001 381.510 730.050 385.125C723.099 388.740 717.538 392.633 713.367 396.803C709.196 400.974 706.137 406.813 705.025 410.150C703.913 413.487 706.415 415.711 706.693 416.823M823.477 463.367C823.199 467.538 821.252 480.050 821.808 488.392C822.365 496.733 824.589 505.075 826.813 513.417C829.038 521.758 831.818 531.490 835.155 538.442C838.492 545.393 842.107 551.232 846.834 555.125C851.560 559.018 857.956 562.077 863.517 561.798C869.078 561.520 875.195 557.628 880.200 553.457C885.205 549.286 891.322 539.554 893.547 536.773M1010.070 446.673C1006.733 445.561 997.836 440.000 990.050 440.000C982.264 440.000 968.362 441.112 963.357 446.673C958.352 452.234 958.908 463.357 960.020 473.367C961.132 483.377 964.469 497.280 970.030 506.733C975.591 516.187 983.933 523.973 993.387 530.090C1002.841 536.207 1017.300 541.212 1026.753 543.437C1036.207 545.661 1046.217 543.437 1050.110 543.437M1128.522 440.000C1128.244 444.171 1126.575 457.796 1126.854 465.025C1127.132 472.254 1129.634 480.318 1130.190 483.377M1210.270 440.000C1210.826 445.561 1212.495 462.244 1213.607 473.367C1214.719 484.489 1216.944 496.723 1216.944 506.733C1216.944 516.743 1214.163 528.978 1213.607 533.427M1213.367 440.000C1213.645 445.561 1214.201 462.244 1215.035 473.367C1215.869 484.489 1216.981 495.611 1218.372 506.733C1219.762 517.856 1221.430 528.978 1223.377 540.100C1225.323 551.222 1228.104 563.735 1230.050 573.467C1231.996 583.199 1234.221 594.321 1235.055 598.492M1243.397 570.130C1245.065 572.077 1252.851 577.082 1253.407 581.808C1253.963 586.535 1247.290 592.124 1246.733 598.492C1246.177 604.859 1249.514 616.426 1250.070 620.013M1186.673 635.025C1186.951 639.196 1187.508 647.538 1188.342 660.050C1189.176 672.563 1190.983 693.417 1191.678 710.100C1192.373 726.783 1192.791 746.831 1192.513 760.150C1192.234 773.469 1190.427 785.036 1190.010 790.013M1273.427 610.000C1275.095 612.781 1280.656 621.122 1283.437 626.683C1286.217 632.244 1288.998 640.586 1290.110 643.367M1253.407 665.055C1253.129 667.836 1250.626 676.455 1251.738 681.738C1252.851 687.021 1255.353 693.417 1260.080 696.753C1264.807 700.090 1273.427 701.758 1280.100 701.758C1286.773 701.758 1295.671 699.812 1300.120 696.753C1304.569 693.695 1305.681 685.631 1306.793 683.407M1326.813 610.000C1327.092 612.781 1326.535 621.678 1328.482 626.683C1330.428 631.688 1334.043 638.362 1338.492 640.030C1342.941 641.698 1350.170 639.474 1355.175 636.693C1360.180 633.913 1365.741 627.796 1368.522 623.347C1371.302 618.898 1371.302 612.224 1371.859 610.000M1385.205 610.000C1385.761 612.224 1386.039 620.010 1388.542 623.347C1391.044 626.683 1396.049 630.020 1400.220 630.020C1404.391 630.020 1410.230 626.683 1413.567 623.347C1416.904 620.010 1419.128 612.224 1420.240 610.000M1338.492 643.367C1341.272 644.201 1351.004 648.928 1355.175 648.372C1359.346 647.816 1359.902 639.196 1363.517 640.030C1367.132 640.864 1373.249 648.928 1376.864 653.377C1380.478 657.826 1383.815 664.499 1385.205 666.723M1255.075 710.100C1259.246 710.656 1271.480 713.715 1280.100 713.437C1288.720 713.159 1300.676 710.100 1306.793 708.432C1312.911 706.763 1315.135 704.261 1316.803 703.427M1269.820 807.612C1269.820 802.915 1274.810 800.861 1278.626 798.806C1282.442 796.751 1288.019 794.403 1292.716 795.284C1297.412 796.164 1303.283 799.099 1306.805 804.089C1310.328 809.079 1313.263 818.766 1313.850 825.224C1314.437 831.681 1312.676 838.726 1310.328 842.836C1307.979 846.945 1303.283 849.880 1299.760 849.880C1296.238 849.880 1292.716 846.651 1289.193 842.836C1285.671 839.020 1281.855 832.855 1278.626 826.985C1275.397 821.114 1269.820 812.308 1269.820 807.612zM1269.820 913.283C1270.701 915.631 1272.462 922.969 1275.104 927.372C1277.746 931.775 1281.562 936.472 1285.671 939.701C1289.780 942.929 1295.945 943.810 1299.760 946.745C1303.576 949.681 1307.392 952.322 1308.566 957.312C1309.741 962.302 1307.099 973.457 1306.805 976.685M1320.895 825.224C1323.243 822.288 1329.701 811.428 1334.984 807.612C1340.268 803.796 1346.725 801.741 1352.596 802.328C1358.467 802.915 1366.685 807.318 1370.208 811.134C1373.730 814.950 1374.317 819.940 1373.730 825.224C1373.143 830.507 1370.795 839.020 1366.685 842.836C1362.576 846.651 1354.944 848.413 1349.074 848.119C1343.203 847.826 1334.397 842.248 1331.462 841.074M1357.880 835.791C1360.521 833.149 1368.153 823.756 1373.730 819.940C1379.307 816.124 1386.058 813.482 1391.342 812.895C1396.626 812.308 1403.083 815.831 1405.431 816.418M1373.730 834.030C1374.611 838.433 1377.253 851.641 1379.014 860.447C1380.775 869.253 1382.536 878.059 1384.297 886.865C1386.058 895.671 1387.820 907.119 1389.581 913.283C1391.342 919.447 1393.984 922.089 1394.864 923.850M943.377 610.000C942.264 618.342 938.650 640.586 936.703 660.050C934.757 679.514 933.089 705.123 931.698 726.783C930.308 748.444 928.918 779.475 928.362 790.013M1083.517 628.352C1085.741 630.854 1092.415 637.528 1096.864 643.367C1101.312 649.206 1105.205 656.991 1110.210 663.387C1115.215 669.782 1121.332 676.733 1126.894 681.738C1132.455 686.743 1138.572 690.914 1143.577 693.417C1148.582 695.919 1154.699 696.197 1156.924 696.753M1156.924 710.100C1153.031 712.325 1141.352 718.442 1133.567 723.447C1125.781 728.452 1116.884 734.569 1110.210 740.130C1103.537 745.691 1097.976 751.808 1093.527 756.813C1089.078 761.818 1085.185 767.936 1083.517 770.160M1160.260 725.115C1155.811 728.174 1142.187 737.072 1133.567 743.467C1124.947 749.862 1116.327 756.813 1108.542 763.487C1100.756 770.160 1091.580 779.086 1086.854 783.507C1082.127 787.928 1081.292 788.929 1080.180 790.013M1096.864 760.150C1098.254 762.931 1103.259 771.856 1105.205 776.834C1107.152 781.811 1107.986 787.817 1108.542 790.013M1219.987 768.492C1218.374 770.438 1212.757 776.583 1210.310 780.170C1207.863 783.757 1206.139 788.373 1205.305 790.013M982.776 869.253C984.830 868.373 990.701 864.263 995.104 863.970C999.507 863.676 1005.671 864.557 1009.193 867.492C1012.716 870.427 1015.064 879.233 1016.238 881.582M979.253 930.895C983.656 932.069 995.985 937.352 1005.671 937.939C1015.358 938.526 1029.447 935.885 1037.372 934.417C1045.298 932.949 1050.581 930.014 1053.223 929.133M1220.007 802.328C1218.040 803.209 1211.641 804.383 1208.207 807.612C1204.773 810.841 1199.695 817.005 1199.401 821.701C1199.108 826.398 1203.012 832.268 1206.446 835.791C1209.880 839.313 1217.747 841.661 1220.007 842.836M740.060 610.000C737.836 614.171 730.328 625.293 726.713 635.025C723.099 644.757 720.040 657.269 718.372 668.392C716.703 679.514 716.703 692.026 716.703 701.758C716.703 711.490 717.538 717.051 718.372 726.783C719.206 736.515 720.318 749.612 721.708 760.150C723.099 770.688 725.879 785.036 726.713 790.013M773.427 709.266C775.929 709.961 780.378 710.795 788.442 713.437C796.505 716.078 811.520 721.500 821.808 725.115C832.097 728.730 845.443 733.457 850.170 735.125M836.823 620.010C839.604 621.956 850.170 625.015 853.507 631.688C856.844 638.362 857.400 649.762 856.844 660.050C856.287 670.338 850.726 683.685 850.170 693.417C849.614 703.149 853.229 710.100 853.507 718.442C853.785 726.783 852.951 735.125 851.839 743.467C850.726 751.808 847.668 764.321 846.834 768.492M853.507 610.000C855.175 611.668 859.068 617.508 863.517 620.010C867.966 622.513 876.864 626.683 880.200 625.015C883.537 623.347 882.981 612.503 883.537 610.000M743.397 756.813C742.563 759.594 739.226 767.964 738.392 773.497C737.558 779.030 738.392 787.261 738.392 790.013M852.596 911.522C854.357 913.576 859.934 918.860 863.163 923.850C866.392 928.840 869.621 936.765 871.969 941.462C874.317 946.158 878.427 948.507 877.253 952.029C876.078 955.551 869.914 959.367 864.924 962.596C859.934 965.825 852.596 969.054 847.312 971.402C842.029 973.750 835.571 975.805 833.223 976.685M866.854 400.140C869.078 404.589 875.751 417.936 880.200 426.834C884.649 435.731 890.210 443.517 893.547 453.527C896.884 463.537 899.108 481.332 900.220 486.894" stroke-width="10.000"/><path d="M1227.528 110.005C1227.667 114.732 1227.945 129.469 1228.362 138.367C1228.779 147.264 1229.613 156.162 1230.030 163.392C1230.447 170.621 1230.725 178.685 1230.864 181.743M1068.502 366.753C1067.807 362.861 1061.828 346.177 1064.331 343.397C1066.834 340.616 1074.758 348.402 1083.517 350.070C1092.276 351.738 1105.761 352.851 1116.884 353.407C1128.006 353.963 1141.352 353.268 1150.250 353.407C1159.148 353.546 1166.934 354.102 1170.270 354.241M751.738 585.155C750.348 587.102 745.899 592.690 743.397 596.834C740.894 600.977 737.836 607.817 736.723 610.013M1180.000 450.010C1181.668 451.678 1187.229 454.737 1190.010 460.020C1192.791 465.303 1195.293 473.923 1196.683 481.708C1198.074 489.494 1199.464 498.114 1198.352 506.733C1197.239 515.353 1193.069 526.753 1190.010 533.427C1186.951 540.100 1181.668 544.549 1180.000 546.773M1317.372 842.836C1316.198 847.238 1312.969 860.447 1310.328 869.253C1307.686 878.059 1305.044 886.572 1301.522 895.671C1297.999 904.770 1293.596 915.044 1289.193 923.850C1284.790 932.656 1279.213 941.462 1275.104 948.507C1270.994 955.551 1266.298 963.183 1264.537 966.118M731.074 790.000C733.423 795.871 740.467 814.950 745.164 825.224C749.860 835.497 753.676 842.248 759.253 851.641C764.830 861.034 771.875 871.895 778.626 881.582C785.377 891.268 793.890 900.955 799.760 909.760C805.631 918.566 811.502 930.308 813.850 934.417M773.343 795.284C773.783 801.741 773.930 823.169 775.985 834.030C778.039 844.890 781.121 853.109 785.671 860.447C790.221 867.786 798.293 874.243 803.283 878.059C808.273 881.875 813.556 882.462 815.611 883.343" stroke-width="11.000"/><path d="M1046.813 123.352C1050.150 125.576 1058.770 131.137 1066.834 136.698C1074.897 142.259 1085.463 152.269 1095.195 156.718C1104.927 161.167 1116.049 161.445 1125.225 163.392C1134.401 165.338 1146.079 167.563 1150.250 168.397M1041.808 460.013C1045.979 458.929 1057.102 455.286 1066.834 453.507C1076.565 451.727 1089.078 450.170 1100.200 449.336C1111.322 448.502 1122.445 448.363 1133.567 448.502C1144.689 448.641 1156.367 449.058 1166.934 450.170C1177.500 451.282 1191.959 454.341 1196.964 455.175M716.703 430.000C718.928 431.668 725.601 435.839 730.050 440.010C734.499 444.181 740.060 449.742 743.397 455.025C746.733 460.308 747.568 467.816 750.070 471.708C752.573 475.601 755.075 477.826 758.412 478.382C761.748 478.938 768.144 475.601 770.090 475.045M826.813 436.673C827.370 441.122 828.760 456.137 830.150 463.367C831.540 470.596 834.321 477.269 835.155 480.050M956.683 506.733C955.849 513.685 953.347 534.539 951.678 548.442C950.010 562.345 948.064 578.222 946.673 590.150C945.283 602.079 943.893 615.036 943.337 620.013M1236.723 610.000C1236.167 615.561 1233.109 632.244 1233.387 643.367C1233.665 654.489 1235.611 667.836 1238.392 676.733C1241.172 685.631 1248.124 693.417 1250.070 696.753M1255.075 666.723C1259.246 665.750 1270.924 661.718 1280.100 660.884C1289.276 660.050 1301.788 660.467 1310.130 661.718C1318.472 662.970 1325.145 666.306 1330.150 668.392C1335.155 670.477 1338.492 673.258 1340.160 674.231M1390.210 656.713C1392.157 650.596 1398.552 645.869 1403.557 643.367C1408.562 640.864 1415.235 639.474 1420.240 641.698C1425.245 643.923 1430.250 650.318 1433.587 656.713C1436.924 663.109 1440.260 672.841 1440.260 680.070C1440.260 687.300 1437.480 695.363 1433.587 700.090C1429.694 704.817 1422.465 708.432 1416.904 708.432C1411.342 708.432 1404.391 704.817 1400.220 700.090C1396.049 695.363 1393.547 687.300 1391.879 680.070C1390.210 672.841 1388.264 662.831 1390.210 656.713zM1197.612 790.000C1197.318 794.403 1194.383 809.079 1195.851 816.418C1197.318 823.756 1200.841 829.920 1206.418 834.030C1211.995 838.139 1221.975 840.487 1229.313 841.074C1236.651 841.661 1246.925 838.139 1250.447 837.552M1320.895 834.030C1321.775 838.433 1323.243 851.641 1326.178 860.447C1329.114 869.253 1334.691 878.059 1338.507 886.865C1342.322 895.671 1346.432 905.945 1349.074 913.283C1351.715 920.621 1353.477 927.959 1354.357 930.895M1398.387 790.000C1398.974 793.522 1400.148 805.264 1401.909 811.134C1403.670 817.005 1405.431 823.169 1408.954 825.224C1412.476 827.278 1419.814 826.398 1423.043 823.462C1426.272 820.527 1427.446 813.189 1428.327 807.612C1429.207 802.035 1428.327 792.935 1428.327 790.000M993.427 666.723C996.763 666.445 1007.608 663.387 1013.447 665.055C1019.286 666.723 1025.125 672.006 1028.462 676.733C1031.798 681.460 1034.301 688.968 1033.467 693.417C1032.633 697.866 1028.462 700.924 1023.457 703.427C1018.452 705.929 1009.554 708.988 1003.437 708.432C997.320 707.876 989.534 701.480 986.753 700.090M1080.180 626.683C1079.624 632.244 1077.956 648.928 1076.844 660.050C1075.731 671.172 1074.341 682.295 1073.507 693.417C1072.673 704.539 1072.395 715.661 1071.839 726.783C1071.282 737.906 1071.004 749.612 1070.170 760.150C1069.336 770.688 1067.390 785.036 1066.834 790.013M1163.597 703.427C1163.041 708.710 1161.372 725.671 1160.260 735.125C1159.148 744.579 1158.036 751.002 1156.924 760.150C1155.811 769.298 1154.143 785.036 1153.587 790.013M758.412 750.140C762.026 752.365 770.924 759.594 780.100 763.487C789.276 767.380 802.901 772.663 813.467 773.497C824.033 774.331 837.102 769.048 843.497 768.492C849.892 767.936 850.448 769.882 851.839 770.160M973.627 610.000C973.905 615.561 974.183 633.635 975.295 643.367C976.408 653.099 977.798 662.274 980.300 668.392C982.803 674.509 988.642 678.124 990.310 680.070M961.789 790.000C962.963 795.871 966.486 813.482 968.834 825.224C971.182 836.965 974.118 851.641 975.879 860.447C977.640 869.253 978.814 875.124 979.401 878.059" stroke-width="12.000"/><path d="M1046.813 411.798C1050.150 410.964 1057.936 407.906 1066.834 406.793C1075.731 405.681 1087.688 405.125 1100.200 405.125C1112.713 405.125 1128.006 406.237 1141.909 406.793C1155.811 407.350 1176.666 408.184 1183.617 408.462M888.542 446.683C890.488 452.244 897.718 469.484 900.220 480.050C902.723 490.616 904.113 499.514 903.557 510.080C903.001 520.646 900.776 532.881 896.884 543.447C892.991 554.013 885.761 564.023 880.200 573.477C874.639 582.931 867.410 594.081 863.517 600.170C859.624 606.260 857.956 608.373 856.844 610.013M1356.844 720.110C1359.346 722.613 1366.575 729.842 1371.859 735.125C1377.142 740.408 1382.981 745.969 1388.542 751.808C1394.103 757.648 1399.664 765.155 1405.225 770.160C1410.786 775.165 1416.626 779.336 1421.909 781.839C1427.192 784.341 1434.421 784.619 1436.924 785.175M1391.342 888.626C1394.277 887.159 1402.496 880.701 1408.954 879.820C1415.412 878.940 1423.630 880.114 1430.088 883.343C1436.546 886.572 1444.178 893.616 1447.700 899.193C1451.222 904.770 1452.396 910.641 1451.222 916.805C1450.048 922.969 1444.765 930.895 1440.655 936.178C1436.546 941.462 1431.849 945.571 1426.566 948.507C1421.282 951.442 1416.292 952.909 1408.954 953.790C1401.616 954.671 1389.874 954.084 1382.536 953.790C1375.198 953.497 1367.860 952.322 1364.924 952.029" stroke-width="13.000"/><path d="M1050.150 280.000C1052.931 281.112 1061.272 284.171 1066.834 286.673C1072.395 289.176 1076.565 292.791 1083.517 295.015C1090.468 297.239 1100.200 299.742 1108.542 300.020C1116.884 300.298 1126.616 298.630 1133.567 296.683C1140.518 294.737 1145.801 291.122 1150.250 288.342C1154.699 285.561 1158.592 281.390 1160.260 280.000M1008.442 375.095C1012.613 374.817 1023.735 373.705 1033.467 373.427C1043.199 373.149 1052.931 373.983 1066.834 373.427C1080.736 372.871 1100.200 371.480 1116.884 370.090C1133.567 368.700 1153.309 366.475 1166.934 365.085C1180.558 363.695 1193.349 362.305 1198.632 361.748M813.467 383.457C813.189 386.793 811.520 396.803 811.798 403.477C812.077 410.150 813.467 417.407 815.135 423.497C816.803 429.586 820.696 437.261 821.808 440.013M786.773 466.703C784.549 470.318 777.320 480.606 773.427 488.392C769.534 496.177 766.197 504.241 763.417 513.417C760.636 522.593 758.412 533.715 756.743 543.447C755.075 553.179 754.185 564.857 753.407 571.808C752.628 578.760 752.295 582.931 752.072 585.155M836.823 473.377C841.272 472.821 854.063 469.206 863.517 470.040C872.971 470.874 888.542 476.991 893.547 478.382M870.190 430.000C871.302 432.224 872.971 437.786 876.864 443.347C880.756 448.908 889.654 456.693 893.547 463.367C897.440 470.040 899.108 480.050 900.220 483.387M1010.070 453.347C1013.963 455.571 1026.753 462.801 1033.427 466.693C1040.100 470.586 1047.330 475.035 1050.110 476.703M1056.783 456.683C1059.564 456.127 1065.125 454.737 1073.467 453.347C1081.808 451.956 1095.711 449.315 1106.834 448.342C1117.956 447.368 1129.078 447.229 1140.200 447.508C1151.322 447.786 1164.113 448.759 1173.567 450.010C1183.021 451.261 1193.031 454.181 1196.924 455.015M983.377 533.427C982.543 540.100 979.762 559.036 978.372 573.467C976.981 587.898 975.591 612.256 975.035 620.013M961.688 440.000C961.132 444.171 958.630 455.849 958.352 465.025C958.074 474.201 959.742 490.050 960.020 495.055M1250.070 696.753C1248.958 699.534 1245.621 706.763 1243.397 713.437C1241.172 720.110 1239.504 729.008 1236.723 736.793C1233.943 744.579 1230.606 752.921 1226.713 760.150C1222.821 767.380 1216.703 775.193 1213.367 780.170C1210.030 785.147 1207.806 788.373 1206.693 790.013M1260.080 726.783C1258.412 730.954 1252.295 743.467 1250.070 751.808C1247.846 760.150 1247.568 770.466 1246.733 776.834C1245.899 783.201 1245.343 787.817 1245.065 790.013M1063.497 656.713C1062.385 661.440 1058.214 676.177 1056.823 685.075C1055.433 693.973 1054.877 700.368 1055.155 710.100C1055.433 719.832 1056.823 730.148 1058.492 743.467C1060.160 756.786 1064.053 782.256 1065.165 790.013M1163.597 610.000C1163.319 615.561 1161.651 632.244 1161.929 643.367C1162.207 654.489 1164.431 668.392 1165.265 676.733C1166.099 685.075 1166.656 690.636 1166.934 693.417M998.626 837.552C993.343 839.020 983.363 842.836 977.492 848.119C971.621 853.403 966.631 861.328 963.403 869.253C960.174 877.179 958.706 886.865 958.119 895.671C957.532 904.477 957.238 915.338 959.880 922.089C962.522 928.840 967.512 933.243 973.970 936.178C980.427 939.114 990.407 940.581 998.626 939.701C1006.845 938.820 1017.412 936.765 1023.283 930.895C1029.153 925.024 1031.795 913.870 1033.850 904.477C1035.905 895.084 1036.785 883.343 1035.611 874.537C1034.437 865.731 1031.208 857.512 1026.805 851.641C1022.402 845.771 1013.890 841.661 1009.193 839.313C1004.497 836.965 1003.910 836.084 998.626 837.552zM963.403 955.551C966.044 954.964 972.209 953.203 979.253 952.029C986.298 950.855 995.397 949.387 1005.671 948.507C1015.945 947.626 1032.089 946.452 1040.895 946.745C1049.701 947.039 1055.571 949.681 1058.507 950.268M1046.178 795.284C1048.233 797.338 1055.571 802.622 1058.507 807.612C1061.442 812.602 1060.855 820.234 1063.790 825.224C1066.725 830.214 1071.128 834.323 1076.118 837.552C1081.108 840.781 1088.740 844.597 1093.730 844.597C1098.720 844.597 1103.710 842.248 1106.058 837.552C1108.407 832.855 1108.113 824.343 1107.820 816.418C1107.526 808.492 1104.884 794.403 1104.297 790.000M770.090 618.342C768.422 622.513 763.417 633.635 760.080 643.367C756.743 653.099 752.851 665.611 750.070 676.733C747.290 687.856 743.953 699.534 743.397 710.100C742.841 720.666 744.231 732.901 746.733 740.130C749.236 747.360 756.465 751.252 758.412 753.477M999.987 665.055C997.262 667.001 989.142 670.338 983.637 676.733C978.131 683.129 971.403 693.417 966.954 703.427C962.505 713.437 958.890 725.949 956.944 736.793C954.997 747.638 954.719 759.622 955.275 768.492C955.831 777.362 959.446 786.426 960.280 790.013M811.798 380.120C812.633 385.125 813.745 400.140 816.803 410.150C819.862 420.160 824.033 431.839 830.150 440.180C836.267 448.522 849.614 456.864 853.507 460.200" stroke-width="14.000"/><path d="M1121.889 123.352C1119.108 123.630 1111.044 122.851 1105.205 125.020C1099.366 127.189 1092.971 131.638 1086.854 136.365C1080.736 141.092 1071.560 150.546 1068.502 153.382M1121.889 123.352C1124.947 124.408 1134.957 126.410 1140.240 129.691C1145.523 132.972 1149.555 137.977 1153.587 143.038C1157.619 148.099 1161.372 153.882 1164.431 160.055C1167.490 166.228 1170.687 176.738 1171.939 180.075M1160.260 363.417C1161.372 367.588 1164.709 380.100 1166.934 388.442C1169.158 396.783 1172.495 403.735 1173.607 413.467C1174.719 423.199 1173.607 441.272 1173.607 446.834M1250.447 790.000C1250.741 795.871 1252.209 813.482 1252.209 825.224C1252.209 836.965 1251.915 848.706 1250.447 860.447C1248.980 872.189 1245.751 884.517 1243.403 895.671C1241.054 906.825 1238.119 918.566 1236.358 927.372C1234.597 936.178 1232.248 942.049 1232.836 948.507C1233.423 954.964 1235.477 961.422 1239.880 966.118C1244.283 970.815 1256.024 974.924 1259.253 976.685" stroke-width="15.000"/><path d="M1250.050 445.165C1252.831 444.331 1260.616 441.828 1266.733 440.160C1272.851 438.492 1280.636 435.989 1286.753 435.155C1292.871 434.321 1297.320 434.599 1303.437 435.155C1309.554 435.711 1320.120 437.936 1323.457 438.492M843.497 450.020C846.834 451.132 856.009 456.137 863.517 456.693C871.024 457.249 882.981 456.137 888.542 453.357C894.103 450.576 895.493 442.234 896.884 440.010M976.743 610.000C977.021 615.561 977.300 633.635 978.412 643.367C979.524 653.099 980.914 661.440 983.417 668.392C985.919 675.343 991.758 682.295 993.427 685.075M983.417 680.070C980.636 683.963 970.904 694.251 966.733 703.427C962.563 712.603 960.060 724.281 958.392 735.125C956.723 745.969 956.445 759.344 956.723 768.492C957.001 777.640 959.504 786.426 960.060 790.013M963.403 790.000C964.577 795.871 968.393 814.950 970.447 825.224C972.502 835.497 975.731 844.303 975.731 851.641C975.731 858.980 971.328 866.318 970.447 869.253M1035.611 795.284C1033.850 798.806 1027.539 808.492 1025.044 816.418C1022.549 824.343 1021.375 838.433 1020.641 842.836" stroke-width="16.000"/><path d="M998.432 291.678C995.929 295.293 987.866 305.581 983.417 313.367C978.968 321.152 975.492 330.050 971.738 338.392C967.985 346.733 964.092 355.075 960.894 363.417C957.697 371.758 954.499 380.100 952.553 388.442C950.606 396.783 948.660 405.125 949.216 413.467C949.772 421.808 952.970 430.734 955.889 438.492C958.809 446.250 964.926 456.426 966.733 460.013M1006.773 703.427C1010.110 707.320 1021.510 718.720 1026.793 726.783C1032.077 734.847 1035.691 743.467 1038.472 751.808C1041.252 760.150 1042.087 770.466 1043.477 776.834C1044.867 783.201 1046.257 787.817 1046.813 790.013M813.850 790.000C815.905 795.871 822.362 813.482 826.178 825.224C829.994 836.965 834.984 854.577 836.745 860.447" stroke-width="18.000"/><path d="M1068.502 153.382C1066.138 156.996 1057.936 167.563 1054.321 175.070C1050.706 182.578 1048.343 190.641 1046.813 198.427C1045.284 206.212 1044.978 213.720 1045.145 221.783C1045.312 229.847 1046.063 238.884 1047.814 246.808C1049.566 254.733 1052.903 262.964 1055.656 269.331C1058.408 275.698 1062.885 282.400 1064.331 285.013" stroke-width="21.000"/><path d="M1193.627 248.477C1196.408 245.974 1200.912 245.140 1205.305 243.472C1209.699 241.803 1217.540 232.628 1219.987 238.467C1222.434 244.306 1221.877 272.946 1219.987 278.507C1218.096 284.068 1212.479 274.058 1208.642 271.834C1204.805 269.609 1201.134 265.438 1196.964 265.160C1192.793 264.882 1185.007 271.277 1183.617 270.165C1182.227 269.053 1186.954 262.102 1188.622 258.487C1190.290 254.872 1190.846 250.979 1193.627 248.477zM1200.000 248.477C1202.224 244.306 1209.176 245.696 1213.347 246.808C1217.518 247.921 1222.244 251.535 1225.025 255.150C1227.806 258.765 1230.864 264.604 1230.030 268.497C1229.196 272.390 1223.635 277.395 1220.020 278.507C1216.405 279.619 1211.678 276.282 1208.342 275.170C1205.005 274.058 1201.390 276.282 1200.000 271.834C1198.610 267.385 1197.776 252.648 1200.000 248.477zM1047.648 400.954C1049.872 400.259 1053.765 402.484 1055.155 404.291C1056.545 406.098 1056.823 409.435 1055.989 411.798C1055.155 414.162 1052.236 417.777 1050.150 418.472C1048.065 419.167 1044.867 417.638 1043.477 415.969C1042.087 414.301 1041.113 410.964 1041.808 408.462C1042.504 405.959 1045.423 401.649 1047.648 400.954zM838.492 340.080C843.219 335.631 858.373 326.733 863.517 326.733C868.661 326.733 870.329 335.631 869.356 340.080C868.383 344.529 861.849 349.951 857.678 353.427C853.507 356.902 848.085 360.934 844.331 360.934C840.577 360.934 836.128 356.902 835.155 353.427C834.182 349.951 833.765 344.529 838.492 340.080zM1015.075 478.372C1018.968 475.591 1028.144 472.533 1033.427 471.698C1038.710 470.864 1040.656 471.698 1046.773 473.367C1052.891 475.035 1062.901 479.206 1070.130 481.708C1077.360 484.211 1081.808 486.991 1090.150 488.382C1098.492 489.772 1112.395 490.606 1120.180 490.050C1127.966 489.494 1130.746 486.991 1136.864 485.045C1142.981 483.099 1149.376 478.650 1156.884 478.372C1164.391 478.094 1175.235 480.040 1181.909 483.377C1188.582 486.713 1193.587 492.274 1196.924 498.392C1200.260 504.509 1202.207 513.129 1201.929 520.080C1201.651 527.031 1198.870 534.539 1195.255 540.100C1191.641 545.661 1186.636 552.057 1180.240 553.447C1173.845 554.837 1164.113 550.666 1156.884 548.442C1149.654 546.217 1142.425 544.549 1136.864 540.100C1131.302 535.651 1129.078 524.251 1123.517 521.748C1117.956 519.246 1111.839 523.472 1103.497 525.085C1095.155 526.698 1081.252 529.534 1073.467 531.425C1065.681 533.316 1062.345 535.484 1056.783 536.430C1051.222 537.375 1045.661 537.876 1040.100 537.097C1034.539 536.319 1028.144 534.595 1023.417 531.758C1018.690 528.922 1014.241 524.807 1011.738 520.080C1009.236 515.353 1008.680 508.680 1008.402 503.397C1008.124 498.114 1008.958 492.553 1010.070 488.382C1011.182 484.211 1011.182 481.152 1015.075 478.372zM1135.195 540.100C1141.312 536.207 1174.957 547.886 1181.909 553.447C1188.860 559.008 1176.347 562.372 1176.904 573.467C1177.460 584.561 1188.860 612.256 1185.245 620.013C1181.631 627.771 1161.889 627.215 1155.215 620.013C1148.542 612.812 1148.542 590.122 1145.205 576.803C1141.869 563.485 1129.078 543.993 1135.195 540.100zM1305.125 479.206C1306.793 479.345 1309.852 480.318 1310.964 481.708C1312.077 483.099 1312.355 485.740 1311.798 487.548C1311.242 489.355 1309.296 491.857 1307.628 492.553C1305.959 493.248 1303.262 492.831 1301.788 491.718C1300.315 490.606 1298.924 487.687 1298.785 485.879C1298.646 484.072 1299.898 481.986 1300.954 480.874C1302.011 479.762 1303.457 479.067 1305.125 479.206zM1228.382 440.000C1238.670 437.497 1285.939 438.610 1296.783 440.000C1307.628 441.390 1297.340 445.839 1293.447 448.342C1289.554 450.844 1280.656 453.069 1273.427 455.015C1266.197 456.961 1256.465 460.020 1250.070 460.020C1243.675 460.020 1238.670 458.352 1235.055 455.015C1231.440 451.678 1218.094 442.503 1228.382 440.000zM1371.859 607.668C1373.026 607.668 1374.778 611.449 1375.195 613.507C1375.612 615.564 1375.473 618.929 1374.361 620.013C1373.249 621.098 1369.551 621.098 1368.522 620.013C1367.493 618.929 1367.632 615.564 1368.188 613.507C1368.744 611.449 1370.691 607.668 1371.859 607.668zM1391.879 605.165C1393.825 604.887 1397.162 607.695 1398.552 610.170C1399.942 612.645 1401.889 618.373 1400.220 620.013C1398.552 621.654 1390.766 621.376 1388.542 620.013C1386.317 618.651 1386.317 614.313 1386.874 611.839C1387.430 609.364 1389.932 605.443 1391.879 605.165zM1250.070 625.015C1251.460 621.400 1261.748 620.566 1266.753 621.678C1271.758 622.791 1275.095 628.074 1280.100 631.688C1285.105 635.303 1292.335 639.196 1296.783 643.367C1301.232 647.538 1306.793 653.099 1306.793 656.713C1306.793 660.328 1302.345 664.777 1296.783 665.055C1291.222 665.333 1279.822 661.996 1273.427 658.382C1267.031 654.767 1262.305 648.928 1258.412 643.367C1254.519 637.806 1248.680 628.630 1250.070 625.015zM1356.118 927.372C1360.815 920.034 1369.327 915.044 1373.730 913.283C1378.133 911.522 1382.243 912.989 1382.536 916.805C1382.830 920.621 1376.959 930.308 1375.491 936.178C1374.024 942.049 1368.153 948.213 1373.730 952.029C1379.307 955.845 1400.148 957.312 1408.954 959.074C1417.760 960.835 1426.566 959.954 1426.566 962.596C1426.566 965.238 1417.760 972.576 1408.954 974.924C1400.148 977.273 1383.710 976.685 1373.730 976.685C1363.750 976.685 1353.770 978.153 1349.074 974.924C1344.377 971.695 1344.377 965.238 1345.551 957.312C1346.725 949.387 1351.422 934.711 1356.118 927.372zM1166.934 680.070C1169.575 679.514 1173.468 681.460 1175.275 683.407C1177.083 685.353 1178.056 688.690 1177.778 691.748C1177.500 694.807 1175.692 699.812 1173.607 701.758C1171.522 703.705 1167.768 704.261 1165.265 703.427C1162.763 702.593 1159.565 699.534 1158.592 696.753C1157.619 693.973 1158.036 689.524 1159.426 686.743C1160.816 683.963 1164.292 680.626 1166.934 680.070z" fill="#997e95" stroke="none"/><path d="M1040.934 488.382C1045.439 488.382 1051.250 490.856 1054.448 494.054C1057.645 497.252 1060.120 503.063 1060.120 507.568C1060.120 512.072 1057.645 517.883 1054.448 521.081C1051.250 524.279 1045.439 526.753 1040.934 526.753C1036.430 526.753 1030.618 524.279 1027.421 521.081C1024.223 517.883 1021.748 512.072 1021.748 507.568C1021.748 503.063 1024.223 497.252 1027.421 494.054C1030.618 490.856 1036.430 488.382 1040.934 488.382zM1166.059 489.216C1171.342 489.216 1178.155 492.135 1181.909 495.889C1185.662 499.643 1188.582 506.455 1188.582 511.738C1188.582 517.021 1185.662 523.834 1181.909 527.588C1178.155 531.341 1171.342 534.261 1166.059 534.261C1160.776 534.261 1153.964 531.341 1150.210 527.588C1146.456 523.834 1143.537 517.021 1143.537 511.738C1143.537 506.455 1146.456 499.643 1150.210 495.889C1153.964 492.135 1160.776 489.216 1166.059 489.216z" fill="#ffffff" stroke="none"/><path d="M1076.803 505.065L1100.160 505.399" stroke="#ffffff" stroke-width="2.500"/><path d="M1078.472 518.412L1105.165 515.909" stroke="#ffffff" stroke-width="3.000"/></g></svg>
<!-- canvas overlay -->
<div class="a" style="left:1540.000px;top:109.500px;width:155.000px;height:867.500px;background:#2b2b2b;"></div>
<div class="a" style="left:244.000px;top:97.000px;width:14.000px;height:12.500px;background:#4a4a4a;"></div>
<div class="a" style="left:257.000px;top:97.000px;width:1.000px;height:12.500px;background:#e0e0e0;"></div>
<div class="a" style="left:1695.000px;top:97.000px;width:13.000px;height:880.000px;background:#464646;"></div>
<div class="a" style="left:1695.500px;top:97.500px;width:12.000px;height:11.500px;background:#555555;border-radius:2px;"></div>
<div class="a" style="left:1695.500px;top:965.000px;width:12.000px;height:11.500px;background:#555555;border-radius:2px;"></div>
<div class="a" style="left:1697.000px;top:447.000px;width:9.500px;height:287.500px;background:#606060;border-radius:4.500px;"></div>
<svg style="left:1695px;top:97px" width="13" height="880"><path d="M3 8l3.300-3.200 3.300 3.200M3 872l3.300 3.200 3.300-3.200" stroke="#c0c0c0" stroke-width="1.300" fill="none"/></svg>
<div class="a" style="left:244.000px;top:977.000px;width:1464.000px;height:12.500px;background:#454545;"></div>
<div class="a" style="left:244.000px;top:977.000px;width:332.000px;height:12.500px;background:#3c3c3c;"></div>
<div class="a" style="left:245.000px;top:978.000px;width:46.000px;height:10.500px;background:#4a4a4a;box-shadow:inset 0 0 0 1px #555;"></div>
<div class="a" style="left:294.000px;top:978.000px;width:48.000px;height:10.500px;background:#2e2e2e;box-shadow:inset 0 0 0 1px #555;"></div>
<div class="a" style="left:406.000px;top:978.000px;width:46.000px;height:10.500px;background:#4a4a4a;box-shadow:inset 0 0 0 1px #555;"></div>
<div class="a" style="left:455.000px;top:978.000px;width:47.500px;height:10.500px;background:#2e2e2e;box-shadow:inset 0 0 0 1px #555;"></div>
<div class="a" style="left:564.000px;top:978.000px;width:11.500px;height:10.500px;background:#4d4d4d;border-radius:2px;"></div>
<div class="a" style="left:1684.000px;top:978.000px;width:11.500px;height:10.500px;background:#4d4d4d;border-radius:2px;"></div>
<div class="a" style="left:1695.500px;top:977.000px;width:12.500px;height:12.500px;background:#484848;"></div>
<div class="a" style="left:1091.000px;top:978.500px;width:359.000px;height:9.500px;background:#5e5e5e;border-radius:4.500px;"></div>
<svg style="left:244px;top:977px" width="1464" height="13"><path d="M50 11.500l47.500-9.500v9.500z M211 11.500l24-9 24 9z" fill="#484848"/><path d="M27 11.500l19-6v6z M189 11.500l19-6v6z" fill="#333"/><path d="M104.500 6.500h11M125.500 6.500h11M131 1.500v10" stroke="#9a9a9a" stroke-width="1.400"/><rect x="145.500" y="2.500" width="7.500" height="7.500" fill="#b4b4b4"/><path d="M266.500 8.500a4 4 0 1 1 7 2.500M265 5.500l1.500 3.500 3-2 M293.500 8.500a4 4 0 1 0-7 2.500M295 5.500l-1.500 3.500-3-2" stroke="#b0b0b0" stroke-width="1.100" fill="none"/><circle cx="310" cy="7" r="4.300" stroke="#b0b0b0" stroke-width="1.100" fill="none"/><circle cx="310" cy="7" r="1.300" fill="#b0b0b0"/><path d="M310 1v5" stroke="#b0b0b0" stroke-width="1.100"/><path d="M327.500 3.500l-3 3 3 3M1444 3.500l3 3-3 3" stroke="#c0c0c0" stroke-width="1.200" fill="none"/></svg>
<div class="t" style="left:246.500px;top:977.750px;font-size:12.5px;line-height:14.5px;color:#e4e4e4;transform:scaleX(0.863);transform-origin:left center;">45.0</div>
<div class="t" style="left:409.500px;top:977.750px;font-size:12.5px;line-height:14.5px;color:#e4e4e4;transform:scaleX(0.863);transform-origin:left center;">0.0</div>
<div class="a" style="left:244.000px;top:989.500px;width:1464.000px;height:41.000px;background:#383838;"></div>
<div class="a" style="left:266.500px;top:994.000px;width:39.000px;height:33.000px;background:#4d4d4d;"></div>
<svg style="left:244px;top:990px" width="70" height="41"><path d="M6.500 11l3.500-3.500 3.500 3.500M6.500 28.500l3.500 3.500 3.500-3.500M6.500 33.500l3.500 3.500 3.500-3.500" stroke="#8a8a8a" stroke-width="1.100" fill="none"/><rect x="34.500" y="13.500" width="15" height="14" rx="1.500" fill="none" stroke="#c4c4c4" stroke-width="1.200"/><path d="M38.500 13.500v14M45.500 13.500v14" stroke="#c4c4c4" stroke-width="1"/><path d="M42 16v0M42 20.500v0M42 25v0" stroke="#c4c4c4" stroke-width="2" stroke-linecap="round"/></svg>
<div class="a" style="left:1708.000px;top:69.000px;width:16.000px;height:962.000px;background:#383838;"></div>
<!-- right dock -->
<svg style="left:1707px;top:48px" width="212" height="21"><path d="M11 6l-4 4 4 4M16 6l-4 4 4 4M178.500 6l4 4-4 4M201 6l4 4-4 4M206 6l4 4-4 4" stroke="#9a9a9a" stroke-width="1.100" fill="none"/><path d="M20.500 4v12M22.500 4v12M24.500 4v12" stroke="#7a7a7a" stroke-width="1"/></svg>
<div class="a" style="left:1724.000px;top:69.000px;width:195.000px;height:962.000px;background:#404040;"></div>
<div class="a" style="left:1724.000px;top:69.000px;width:195.000px;height:17.000px;background:#3a3a3a;"></div>
<div class="a" style="left:1743.000px;top:72.000px;width:73.000px;height:17.000px;background:#4f4f4f;"></div>
<div class="a" style="left:1817.000px;top:72.000px;width:29.000px;height:13.500px;background:#484848;box-shadow:inset 0 1px 0 #5a5a5a, inset 1px 0 0 #565656;"></div>
<div class="a" style="left:1847.000px;top:72.000px;width:28.500px;height:13.500px;background:#484848;box-shadow:inset 0 1px 0 #5a5a5a, inset 1px 0 0 #565656;"></div>
<div class="a" style="left:1877.000px;top:72.000px;width:29.000px;height:13.500px;background:#484848;box-shadow:inset 0 1px 0 #5a5a5a, inset 1px 0 0 #565656;"></div>
<div class="a" style="left:1724.000px;top:86.000px;width:195.000px;height:5.000px;background:#4f4f4f;"></div>
<svg style="left:1724px;top:69.000px" width="20" height="18"><path d="M6 5.500h7M6 8.500h7M6 11.500h7" stroke="#9a9a9a" stroke-width="1"/></svg>
<svg style="left:1724px;top:69px" width="195" height="22"><g fill="none" stroke="#c4c4c4" stroke-width="1.200"><rect x="29" y="8.500" width="11.500" height="9" rx="1.500" fill="#9a9a9a"/><path d="M26.500 11v9.500h12"/></g></svg>
<svg style="left:1724px;top:69px;overflow:hidden" width="195" height="16.500"><g fill="none" stroke="#707070" stroke-width="1.200"><path d="M102.500 17v-8.500h12v8.500"/><path d="M132 18a7 7 0 0 1 14 0M135 15.500h8"/><circle cx="167.500" cy="16" r="7"/><path d="M167.500 14v3M167.500 11.500v0.500" stroke-width="1.600"/></g><path d="M104 16.500l3-3 2 1.500 3-4v5.500z" fill="#707070"/></svg>
<div class="t" style="left:1771.500px;top:75.250px;font-size:11.5px;line-height:13.5px;color:#d6d6d6;transform:scaleX(0.833);transform-origin:left center;">Navigator</div>
<div class="a" style="left:1724.000px;top:91.000px;width:195.000px;height:165.000px;background:#2e2e2e;"></div>
<div class="a" style="left:1725.000px;top:118.500px;width:194.000px;height:108.300px;background:#ffffff;"></div>
<svg style="left:1725px;top:118.500px;overflow:hidden" width="194" height="108.300" viewBox="1725 118.500 194 108.300"><g transform="translate(1808.600 150.800) scale(0.0862) translate(-258 -109.500)" opacity="0.850"><use href="#sk"/></g><path d="M1886.802 129.692 1876.377 126.217 1864.793 123.900 1856.685 122.742M1856.685 121.583 1862.477 123.900 1856.685 126.217 1861.318 127.375M1886.802 136.642 1879.852 133.167 1874.060 136.642 1870.585 144.750 1868.268 150.542M1891.435 137.800 1890.277 148.225 1891.435 158.651M1875.218 135.484 1884.485 143.592 1887.960 148.225M1870.585 144.750 1865.952 149.384 1869.427 156.334 1874.060 155.175M1882.168 138.959 1879.852 148.225M1886.223 129.113 1887.381 124.479 1890.856 122.742 1894.331 124.479 1895.489 129.113 1894.331 133.746 1890.856 135.484 1887.381 133.746 1886.223 129.113M1732.742 214.251 1731.583 208.459 1735.058 204.984 1739.692 208.459 1740.850 216.568 1743.167 221.201M1743.167 214.251 1744.325 209.618 1748.959 208.459 1751.275 204.984 1754.750 203.826 1754.750 209.618 1751.275 214.251 1752.434 220.043 1747.800 222.360M1745.484 223.518 1752.434 224.097M1762.859 210.776 1766.334 204.984 1770.967 207.301 1772.126 214.251 1767.492 218.885 1762.859 215.409 1762.859 210.776M1764.017 203.826 1768.651 203.247M1772.126 214.251 1777.917 204.984 1782.551 196.876 1789.501 195.718 1795.292 202.668 1796.451 211.934 1795.292 220.043M1794.134 195.718 1794.713 189.926 1792.976 186.451M1786.026 223.518 1788.342 221.201 1791.817 224.097M1764.017 221.201 1775.601 222.360 1784.867 218.885" fill="none" stroke="#a48aa0" stroke-width="0.700" stroke-linejoin="round" opacity="0.800"/><rect x="1808.600" y="150.800" width="124" height="74.500" fill="none" stroke="#ff0000" stroke-width="1.500"/></svg>
<div class="a" style="left:1724.000px;top:256.000px;width:195.000px;height:43.500px;background:#4d4d4d;"></div>
<div class="a" style="left:1729.500px;top:263.500px;width:79.500px;height:11.000px;background:#303030;box-shadow:inset 0 0 0 1px #5e5e5e;"></div>
<div class="a" style="left:1730.500px;top:264.500px;width:37.500px;height:9.000px;background:#4d4d4d;"></div>
<div class="a" style="left:1729.500px;top:283.500px;width:79.500px;height:11.000px;background:#303030;box-shadow:inset 0 0 0 1px #5e5e5e;"></div>
<div class="a" style="left:1730.500px;top:284.500px;width:39.500px;height:9.000px;background:#4d4d4d;"></div>
<svg style="left:1724px;top:256px" width="195" height="44"><path d="M46 17.500l38-9v9z M46 37.500l16-8.500h8l14 8.500z" fill="#444"/><rect x="42.500" y="3.500" width="3.500" height="19" fill="#6a6a6a" stroke="#888" stroke-width="0.600"/><rect x="44.500" y="23.500" width="3.500" height="19" fill="#6a6a6a" stroke="#888" stroke-width="0.600"/><g fill="none" stroke="#c4c4c4" stroke-width="1.200"><circle cx="101.300" cy="13.300" r="6.800"/><path d="M97.500 13.300h7.600"/><circle cx="121.300" cy="13.300" r="6.800"/><path d="M117.500 13.300h7.600M121.300 9.500v7.600"/><circle cx="141.300" cy="13.300" r="6.800"/><rect x="138.300" y="10.300" width="6" height="6" rx="1" fill="#c4c4c4"/><path d="M153.500 4v19M153.500 24v19" stroke="#6a6a6a" stroke-width="1"/><rect x="159.500" y="7.500" width="7" height="7"/><rect x="164" y="12" width="7" height="7" fill="#4d4d4d"/><path d="M161.500 9.500l7.500 7.500M166 17h3v-3"/><rect x="179.500" y="7.500" width="11.500" height="11.500" rx="1"/><path d="M182 17l6.500-6.500M182 13.500v3.500h3.500M185 10.500h3.500v3.500"/><path d="M97 30.500a6 6 0 1 1 3 8.500"/><path d="M94 30l3 4 3.500-3.500z" fill="#c4c4c4" stroke="none"/><path d="M125.500 30.500a6 6 0 1 0-3 8.500"/><path d="M128.500 30l-3 4-3.500-3.500z" fill="#c4c4c4" stroke="none"/><path d="M138 29a6.500 6.500 0 1 0 6-2"/><path d="M141.300 27v6"/><circle cx="141.300" cy="34" r="1.600" fill="#c4c4c4"/><path d="M160 29v9l5-4.500z"/><path d="M171 29v9l-5-4.500z" fill="#c4c4c4"/><path d="M165.500 26.500v14" stroke-width="1"/><path d="M180.500 26.500h9l-4.500 5z" fill="#c4c4c4"/><path d="M180.500 42.500h9l-4.500-5z"/><path d="M178 34.500h14" stroke-width="1"/></g></svg>
<div class="t" style="left:1730.000px;top:262.250px;font-size:12.5px;line-height:14.5px;color:#e4e4e4;transform:scaleX(0.904);transform-origin:left center;">45.0</div>
<div class="t" style="left:1734.000px;top:282.250px;font-size:12.5px;line-height:14.5px;color:#e4e4e4;transform:scaleX(0.863);transform-origin:left center;">0.0</div>
<div class="a" style="left:1724.000px;top:299.500px;width:195.000px;height:1.000px;background:#333;"></div>
<div class="a" style="left:1724.000px;top:300.500px;width:195.000px;height:17.000px;background:#3a3a3a;"></div>
<div class="a" style="left:1743.000px;top:303.500px;width:93.000px;height:17.000px;background:#4f4f4f;"></div>
<div class="a" style="left:1837.000px;top:303.500px;width:29.000px;height:13.500px;background:#484848;box-shadow:inset 0 1px 0 #5a5a5a, inset 1px 0 0 #565656;"></div>
<div class="a" style="left:1867.000px;top:303.500px;width:29.000px;height:13.500px;background:#484848;box-shadow:inset 0 1px 0 #5a5a5a, inset 1px 0 0 #565656;"></div>
<div class="a" style="left:1724.000px;top:317.500px;width:195.000px;height:5.000px;background:#4f4f4f;"></div>
<svg style="left:1724px;top:300.500px" width="20" height="18"><path d="M6 5.500h7M6 8.500h7M6 11.500h7" stroke="#9a9a9a" stroke-width="1"/></svg>
<svg style="left:1724px;top:300px" width="195" height="24"><g fill="none" stroke="#c4c4c4" stroke-width="1.100"><path d="M27 10.500l6.500-3.500 6.500 3.500-6.500 3.500zM27 14l6.500 3.500M27 17.500l6.500 3.500"/><circle cx="38" cy="15.500" r="1.200"/><circle cx="41.500" cy="15.500" r="1.200"/><path d="M37 19l2 2M39 19l-2 2"/><rect x="40.500" y="19" width="2.300" height="2.300"/></g></svg>
<svg style="left:1724px;top:300px;overflow:hidden" width="195" height="17.500"><g fill="none" stroke="#707070" stroke-width="1.200"><path d="M121 14l7-4 7 4M123 18l5-2.500M125 10.500a5 5 0 0 1 8 4"/><path d="M152 18a6 6 0 1 1 10-4"/></g><path d="M131 15.500h5l-2.500 3z M151 18l4-4 6 0z" fill="#707070"/></svg>
<div class="t" style="left:1771.500px;top:307.250px;font-size:11.5px;line-height:13.5px;color:#d6d6d6;transform:scaleX(0.822);transform-origin:left center;">Layer Property</div>
<div class="a" style="left:1906.000px;top:323.000px;width:13.000px;height:176.500px;background:#4a4a4a;"></div>
<div class="a" style="left:1729.000px;top:332.000px;width:5.000px;height:1.000px;background:#707070;"></div>
<div class="a" style="left:1763.000px;top:332.000px;width:139.000px;height:1.000px;background:#707070;"></div>
<div class="t" style="left:1734.500px;top:325.750px;font-size:12.5px;line-height:14.5px;color:#e4e4e4;transform:scaleX(0.835);transform-origin:left center;">Effect</div>
<div class="a" style="left:1823.500px;top:340.500px;width:79.000px;height:19.000px;background:#555555;border-radius:2px;box-shadow:0 0 0 1px #6a6a6a;"></div>
<svg style="left:1823px;top:340px" width="80" height="20"><g fill="none" stroke="#c4c4c4" stroke-width="1.200"><circle cx="11" cy="10" r="6.800"/><rect x="49.500" y="4.500" width="9" height="9" rx="1.500" fill="#8a8a8a"/><path d="M53 16.500h8.500v-8.500"/><path d="M68.500 8.500l4 4 4-4" stroke-width="1.300"/></g><g fill="#c4c4c4"><circle cx="27.000" cy="4.500" r="0.900"/><circle cx="30.000" cy="4.500" r="0.900"/><circle cx="33.000" cy="4.500" r="0.900"/><circle cx="36.000" cy="4.500" r="0.900"/><circle cx="28.500" cy="7.300" r="0.900"/><circle cx="31.500" cy="7.300" r="0.900"/><circle cx="34.500" cy="7.300" r="0.900"/><circle cx="27.000" cy="10.100" r="0.900"/><circle cx="30.000" cy="10.100" r="0.900"/><circle cx="33.000" cy="10.100" r="0.900"/><circle cx="36.000" cy="10.100" r="0.900"/><circle cx="28.500" cy="12.900" r="0.900"/><circle cx="31.500" cy="12.900" r="0.900"/><circle cx="34.500" cy="12.900" r="0.900"/><circle cx="27.000" cy="15.700" r="0.900"/><circle cx="30.000" cy="15.700" r="0.900"/><circle cx="33.000" cy="15.700" r="0.900"/><circle cx="36.000" cy="15.700" r="0.900"/></g></svg>
<div class="a" style="left:1729.000px;top:369.000px;width:5.000px;height:1.000px;background:#707070;"></div>
<div class="a" style="left:1812.000px;top:369.000px;width:90.000px;height:1.000px;background:#707070;"></div>
<div class="t" style="left:1734.500px;top:362.750px;font-size:12.5px;line-height:14.5px;color:#e4e4e4;transform:scaleX(0.823);transform-origin:left center;">Expression color</div>
<div class="a" style="left:1741.500px;top:380.500px;width:109.000px;height:19.000px;background:#555555;border-radius:2px;box-shadow:0 0 0 1px #6a6a6a;"></div>
<svg style="left:1741px;top:380px" width="110" height="20"><circle cx="35" cy="7.500" r="4" fill="#d9575c"/><circle cx="31.500" cy="13" r="4" fill="#4cc04e"/><circle cx="38.500" cy="13" r="4" fill="#4a92dc"/><circle cx="35" cy="11" r="1.600" fill="#f0e8e8"/><path d="M98.500 8.500l4 4 4-4" stroke="#c4c4c4" stroke-width="1.300" fill="none"/></svg>
<div class="t" style="left:1788.000px;top:383.250px;font-size:12.5px;line-height:14.5px;color:#e4e4e4;transform:scaleX(0.804);transform-origin:left center;">Color</div>
<div class="a" style="left:1724.000px;top:499.500px;width:195.000px;height:1.500px;background:#333;"></div>
<div class="a" style="left:1724.000px;top:501.000px;width:195.000px;height:16.000px;background:#3a3a3a;"></div>
<div class="a" style="left:1743.000px;top:504.000px;width:54.000px;height:16.000px;background:#4f4f4f;"></div>
<div class="a" style="left:1798.500px;top:504.000px;width:28.500px;height:12.500px;background:#484848;box-shadow:inset 0 1px 0 #5a5a5a, inset 1px 0 0 #565656;"></div>
<div class="a" style="left:1828.500px;top:504.000px;width:28.500px;height:12.500px;background:#484848;box-shadow:inset 0 1px 0 #5a5a5a, inset 1px 0 0 #565656;"></div>
<div class="a" style="left:1724.000px;top:517.000px;width:195.000px;height:5.000px;background:#4f4f4f;"></div>
<svg style="left:1724px;top:501.000px" width="20" height="18"><path d="M6 5.500h7M6 8.500h7M6 11.500h7" stroke="#9a9a9a" stroke-width="1"/></svg>
<svg style="left:1724px;top:500px" width="195" height="24"><g fill="none" stroke="#c4c4c4" stroke-width="1.100"><path d="M27 10l6.500-3.500 6.500 3.500-6.500 3.500zM27 13.500l6.500 3.500 6.500-3.500M27 17l6.500 3.500 6.500-3.500"/></g></svg>
<svg style="left:1724px;top:500px;overflow:hidden" width="195" height="17.500"><g fill="none" stroke="#707070" stroke-width="1.200"><path d="M84 11.500h9a3.500 3.500 0 0 1 0 7h-8M87 8.500l-3 3 3 3"/><path d="M113.500 18v-6h11v6M112.500 10l12.500-3.500"/></g></svg>
<div class="t" style="left:1771.500px;top:506.750px;font-size:11.5px;line-height:13.5px;color:#d6d6d6;transform:scaleX(0.765);transform-origin:left center;">Layer</div>
<div class="a" style="left:1724.000px;top:522.000px;width:195.000px;height:68.500px;background:#4d4d4d;"></div>
<div class="a" style="left:1725.500px;top:523.500px;width:38.000px;height:19.000px;background:#5c5c5c;border-radius:2px;box-shadow:0 0 0 1px #747474;"></div>
<div class="a" style="left:1767.500px;top:523.500px;width:53.000px;height:19.000px;background:#555555;border-radius:2px;"></div>
<div class="a" style="left:1827.000px;top:528.500px;width:54.000px;height:8.000px;background:#4d4d4d;box-shadow:inset 0 0 0 1px #6c6c6c;"></div>
<div class="t" style="left:1771.500px;top:525.750px;font-size:12.5px;line-height:14.5px;color:#8e8e8e;transform:scaleX(0.782);transform-origin:left center;">Normal</div>
<svg style="left:1724px;top:522px" width="195" height="70"><g fill="none" stroke="#c4c4c4" stroke-width="1.200"><rect x="5.500" y="5.500" width="14" height="11.500" rx="2"/><path d="M28.500 9l4 4 4-4"/></g><path d="M85.500 9l4 4 4-4" stroke="#9a9a9a" stroke-width="1.200" fill="none"/><g fill="none" stroke="#c4c4c4" stroke-width="1.100"><rect x="35.500" y="27.500" width="9" height="9" rx="1" stroke-dasharray="2 1.300"/><rect x="33" y="30.500" width="8" height="8" rx="1" fill="#9a9a9a" stroke="none"/><path d="M59 39l1.500-8h-1.500l-1.500 8z M57 29.500h4M52 27l4 2M66 27l-4 2M52 32l4-1M66 32l-4-1" /><path d="M56.500 39.500l1.500-9h2l1.500 9z" fill="#c4c4c4" stroke="none"/><path d="M75.500 26.500h7v8l-3.500 4-3.500-4z"/><path d="M77 29l2 2.500 2-2.500v4h-4z" fill="#c4c4c4" stroke="none"/><path d="M82 38c3 1 5-0.500 5-2.500M85.500 34l1.500 1.500 1.500-1.500"/><path d="M96.500 31v-2.500a3 3 0 0 1 6 0v2.500"/><rect x="94.500" y="31" width="10" height="7.500" rx="1" fill="#c4c4c4" stroke="none"/><path d="M114.500 33v-1.500a2 2 0 0 1 4 0v1.500"/><rect x="113" y="33" width="7" height="5.500" rx="0.800" fill="#c4c4c4" stroke="none"/><path d="M116 26h3.500v3.500h-3.500zM123 26h3.500v3.500h-3.500zM119.500 29.500h3.500v3.500h-3.500zM123 33h3.500v3.500h-3.500z" fill="#c4c4c4" stroke="none"/></g><rect x="129.500" y="22.500" width="31" height="19" rx="2" fill="#555"/><rect x="162" y="22.500" width="33" height="19" rx="2" fill="#555"/><g fill="none" stroke="#6e6e6e" stroke-width="1.600"><circle cx="140" cy="31" r="4.500"/><path d="M143 34.500l5 5M148 34.500l-5 5" stroke-width="1.200"/><path d="M152 29.500l3 3 3-3" stroke-width="1.200"/><path d="M168 27v10h10zM176 34l5 5M181 34l-5 5" stroke-width="1.200"/><path d="M185 29.500l3 3 3-3" stroke-width="1.200"/></g><g fill="none" stroke="#c4c4c4" stroke-width="1.100"><rect x="3.500" y="48.500" width="13" height="12" rx="1"/><path d="M3.500 54.500h13M6 51.500h2M6 57.500h2"/><path d="M39.500 49.500h11.500v9.500M39.500 49.500v10l3 3h4"/><circle cx="52.500" cy="61" r="3.300" fill="#4d4d4d"/><path d="M52.500 59v4M50.500 61h4" stroke-width="1"/><rect x="59.500" y="49.500" width="12" height="12" rx="1.500"/><circle cx="65.500" cy="55.500" r="3.500"/><path d="M65.500 52v7M62.500 54l6 3M68.500 54l-6 3" stroke-width="0.700"/><circle cx="72.500" cy="61" r="3.300" fill="#4d4d4d"/><path d="M72.500 59v4M70.500 61h4" stroke-width="1"/><path d="M78.500 60.500v-11.500h5l1.500 2h6v9.500z" fill="#c4c4c4"/><circle cx="92" cy="61.500" r="3.300" fill="#4d4d4d"/><path d="M92 59.500v4M90 61.500h4" stroke-width="1"/></g><g fill="none" stroke="#686868" stroke-width="1.100"><rect x="103.500" y="48.500" width="7.500" height="7.500"/><rect x="99.500" y="53.500" width="8" height="8"/><path d="M105 51.500v5h-3M103.500 55l-1.500 1.500 1.500 1.500"/><rect x="123.500" y="48.500" width="7.500" height="7.500"/><rect x="119.500" y="53.500" width="8" height="8"/><path d="M125.500 54.500l-3.500 3.500M122 55.500v2.500h2.500"/><rect x="159.500" y="51.500" width="13" height="9" rx="1.500"/><rect x="163" y="49" width="4" height="2.500" /><circle cx="167.500" cy="56" r="2.300" fill="#686868"/><path d="M160.500 54.500h3.500M162 53l-1.500 1.500 1.500 1.500"/></g><rect x="138" y="49" width="14" height="13.500" rx="2.500" fill="#c4c4c4"/><circle cx="145" cy="55.800" r="3.800" fill="#4d4d4d"/><g fill="none" stroke="#c4c4c4" stroke-width="1.100"><path d="M180 51.500h10M181.500 51.500l0.700 11h5.600l0.700-11M183 49.500h4M183.700 54v6M186.300 54v6"/></g></svg>
<div class="a" style="left:1724.000px;top:591.000px;width:182.000px;height:32.000px;background:#404040;"></div>
<div class="a" style="left:1724.000px;top:623.000px;width:182.000px;height:1.000px;background:#2e2e2e;"></div>
<div class="a" style="left:1744.000px;top:591.000px;width:1.000px;height:32.000px;background:#2e2e2e;"></div>
<div class="a" style="left:1762.000px;top:591.000px;width:1.000px;height:32.000px;background:#2e2e2e;"></div>
<div class="a" style="left:1763.000px;top:591.000px;width:143.000px;height:32.000px;background:#606b85;"></div>
<div class="a" style="left:1767.000px;top:592.000px;width:38.000px;height:30.000px;background:#2a2f3c;box-shadow:inset 0 0 0 1.500px #e8e8e8;"></div>
<div class="a" style="left:1729.000px;top:602.000px;width:10.000px;height:10.000px;background:#404040;border-radius:2px;box-shadow:inset 0 0 0 1px #555;"></div>
<svg style="left:1745px;top:591.000px" width="18" height="32"><path d="M2 22.500h13" stroke="#c8c8c8" stroke-width="1"/><path d="M3 20.500l1.500-3.500 7.500-7 2 2-7.500 7z" fill="#c8c8c8"/></svg>
<div class="a" style="left:1769.500px;top:594.500px;width:33.500px;height:25.000px;background:#5e5e5e;box-shadow:0 0 0 1px #2e2e2e;"></div>
<svg style="left:1769.500px;top:594.500px" width="34" height="25"><rect x="0" y="3" width="33.500" height="19" fill="#ffffff"/><path d="M4.800 3.000h4.800v4.750h-4.800zM14.400 3.000h4.800v4.750h-4.800zM24.000 3.000h4.800v4.750h-4.800zM0.000 7.750h4.800v4.750h-4.800zM9.600 7.750h4.800v4.750h-4.800zM19.200 7.750h4.800v4.750h-4.800zM28.800 7.750h4.800v4.750h-4.800zM4.800 12.500h4.800v4.750h-4.800zM14.400 12.500h4.800v4.750h-4.800zM24.000 12.500h4.800v4.750h-4.800zM0.000 17.250h4.800v4.750h-4.800zM9.600 17.250h4.800v4.750h-4.800zM19.200 17.250h4.800v4.750h-4.800zM28.800 17.250h4.800v4.750h-4.800z" fill="#cfcfcf"/><path d="M22 12l1 2" stroke="#a09098" stroke-width="0.800"/></svg>
<div class="t" style="left:1811.500px;top:593.750px;font-size:12.5px;line-height:14.5px;color:#e4e4e4;transform:scaleX(0.789);transform-origin:left center;">100 % Normal</div>
<div class="t" style="left:1811.500px;top:606.750px;font-size:12.5px;line-height:14.5px;color:#e4e4e4;transform:scaleX(0.816);transform-origin:left center;">Layer 3</div>
<div class="a" style="left:1724.000px;top:624.000px;width:182.000px;height:32.000px;background:#404040;"></div>
<div class="a" style="left:1724.000px;top:656.000px;width:182.000px;height:1.000px;background:#2e2e2e;"></div>
<div class="a" style="left:1744.000px;top:624.000px;width:1.000px;height:32.000px;background:#2e2e2e;"></div>
<div class="a" style="left:1762.000px;top:624.000px;width:1.000px;height:32.000px;background:#2e2e2e;"></div>
<svg style="left:1724px;top:624.000px" width="20" height="32"><path d="M3.500 16c3.500-5.500 10-5.500 13.500 0-3.500 4.500-10 4.500-13.500 0z" fill="none" stroke="#c8c8c8" stroke-width="1.200"/><circle cx="10.200" cy="16" r="2.600" fill="#c8c8c8"/></svg>
<div class="a" style="left:1749.000px;top:635.000px;width:10.000px;height:10.000px;background:#404040;border-radius:2px;box-shadow:inset 0 0 0 1px #555;"></div>
<div class="a" style="left:1769.500px;top:627.500px;width:33.500px;height:25.000px;background:#5e5e5e;box-shadow:0 0 0 1px #2e2e2e;"></div>
<svg style="left:1769.500px;top:627.500px" width="34" height="25"><rect x="0" y="3" width="33.500" height="19" fill="#ffffff"/><path d="M4.800 3.000h4.800v4.750h-4.800zM14.400 3.000h4.800v4.750h-4.800zM24.000 3.000h4.800v4.750h-4.800zM0.000 7.750h4.800v4.750h-4.800zM9.600 7.750h4.800v4.750h-4.800zM19.200 7.750h4.800v4.750h-4.800zM28.800 7.750h4.800v4.750h-4.800zM4.800 12.500h4.800v4.750h-4.800zM14.400 12.500h4.800v4.750h-4.800zM24.000 12.500h4.800v4.750h-4.800zM0.000 17.250h4.800v4.750h-4.800zM9.600 17.250h4.800v4.750h-4.800zM19.200 17.250h4.800v4.750h-4.800zM28.800 17.250h4.800v4.750h-4.800z" fill="#cfcfcf"/><path d="M22 8l2-3 2 2 1 4 2 3-1 5h-3l-1-3-1 3h-2l1-6zM27 12l3 2v5h-2zM19 13l2 1v5h-2zM3 19l3-1 2 1M9 18l2 1" stroke="#a07898" stroke-width="1" fill="#c8a8c0" fill-opacity="0.600"/></svg>
<div class="t" style="left:1811.500px;top:626.750px;font-size:12.5px;line-height:14.5px;color:#e4e4e4;transform:scaleX(0.782);transform-origin:left center;">67 % Normal</div>
<div class="t" style="left:1811.500px;top:639.750px;font-size:12.5px;line-height:14.5px;color:#e4e4e4;transform:scaleX(0.816);transform-origin:left center;">Layer 2</div>
<div class="a" style="left:1724.000px;top:657.000px;width:182.000px;height:32.000px;background:#404040;"></div>
<div class="a" style="left:1724.000px;top:689.000px;width:182.000px;height:1.000px;background:#2e2e2e;"></div>
<div class="a" style="left:1744.000px;top:657.000px;width:1.000px;height:32.000px;background:#2e2e2e;"></div>
<div class="a" style="left:1762.000px;top:657.000px;width:1.000px;height:32.000px;background:#2e2e2e;"></div>
<div class="a" style="left:1729.000px;top:668.000px;width:10.000px;height:10.000px;background:#404040;border-radius:2px;box-shadow:inset 0 0 0 1px #555;"></div>
<div class="a" style="left:1749.000px;top:668.000px;width:10.000px;height:10.000px;background:#404040;border-radius:2px;box-shadow:inset 0 0 0 1px #555;"></div>
<div class="a" style="left:1769.500px;top:660.500px;width:33.500px;height:25.000px;background:#5e5e5e;box-shadow:0 0 0 1px #2e2e2e;"></div>
<div class="a" style="left:1769.500px;top:663.500px;width:33.500px;height:19.000px;background:linear-gradient(90deg,#e9b27c,#f3d6b0);"></div>
<svg style="left:1769.500px;top:660.500px" width="34" height="25"><path d="M2 13c4-5 10-6 16-5l3 2-6 1c-4 0-8 2-11 5z" fill="#9c3a22"/><path d="M8 9c3-2 7-2 10-1" stroke="#e0a030" stroke-width="1.500" fill="none"/><path d="M14 15h6M14 17.500h6M14 20h6" stroke="#f6ead8" stroke-width="1"/></svg>
<div class="t" style="left:1811.500px;top:659.750px;font-size:12.5px;line-height:14.5px;color:#e4e4e4;transform:scaleX(0.782);transform-origin:left center;">74 % Normal</div>
<div class="t" style="left:1811.500px;top:672.750px;font-size:12.5px;line-height:14.5px;color:#e4e4e4;transform:scaleX(0.816);transform-origin:left center;">Layer 1</div>
<div class="a" style="left:1724.000px;top:690.000px;width:182.000px;height:32.000px;background:#404040;"></div>
<div class="a" style="left:1724.000px;top:722.000px;width:182.000px;height:1.000px;background:#2e2e2e;"></div>
<div class="a" style="left:1744.000px;top:690.000px;width:1.000px;height:32.000px;background:#2e2e2e;"></div>
<div class="a" style="left:1762.000px;top:690.000px;width:1.000px;height:32.000px;background:#2e2e2e;"></div>
<svg style="left:1724px;top:690.000px" width="20" height="32"><path d="M3.500 16c3.500-5.500 10-5.500 13.500 0-3.500 4.500-10 4.500-13.500 0z" fill="none" stroke="#c8c8c8" stroke-width="1.200"/><circle cx="10.200" cy="16" r="2.600" fill="#c8c8c8"/></svg>
<div class="a" style="left:1749.000px;top:701.000px;width:10.000px;height:10.000px;background:#404040;border-radius:2px;box-shadow:inset 0 0 0 1px #555;"></div>
<div class="a" style="left:1769.500px;top:693.500px;width:33.500px;height:25.000px;background:#ffffff;box-shadow:0 0 0 1px #2e2e2e;"></div>
<svg style="left:1814px;top:692.000px" width="20" height="24"><rect x="1.500" y="1.500" width="15" height="16.500" rx="1.500" fill="#ffffff" stroke="#222" stroke-width="1"/><path d="M5 5h8v9h-5l-3-3z" fill="none" stroke="#333" stroke-width="1"/></svg>
<div class="t" style="left:1836.000px;top:704.750px;font-size:12.5px;line-height:14.5px;color:#e4e4e4;transform:scaleX(0.809);transform-origin:left center;">Paper</div>
<div class="a" style="left:1906.000px;top:590.500px;width:13.000px;height:440.500px;background:#4a4a4a;"></div>
<div class="a" style="left:1724.000px;top:723.000px;width:182.000px;height:308.000px;background:#404040;"></div>
<!-- taskbar -->
<div class="a" style="left:0.000px;top:1030.500px;width:1919.000px;height:1.500px;background:#111111;"></div>
<div class="a" style="left:0.000px;top:1032.000px;width:1919.000px;height:47.000px;background:linear-gradient(90deg,#1b1b1f 0%,#1b1c22 45%,#1c2130 62%,#1b1e2a 75%,#1b1c22 100%);"></div>
<div class="a" style="left:409.000px;top:1036.500px;width:39.500px;height:39.000px;background:#2a2a30;border-radius:4px;box-shadow:inset 0 0 0 1px #35353b;"></div>
<svg style="left:0;top:1032px" width="1919" height="47"><defs><linearGradient id="wg" x1="0" y1="0" x2="1" y2="1"><stop offset="0" stop-color="#7fdcff"/><stop offset="1" stop-color="#0a8fe8"/></linearGradient><linearGradient id="fg" x1="0" y1="0" x2="0" y2="1"><stop offset="0" stop-color="#ffd84a"/><stop offset="1" stop-color="#f5b018"/></linearGradient><linearGradient id="wd" x1="0" y1="0" x2="1" y2="1"><stop offset="0" stop-color="#56c8f8"/><stop offset="0.500" stop-color="#2a7cf0"/><stop offset="1" stop-color="#1848c8"/></linearGradient><linearGradient id="mp" x1="0" y1="0" x2="0" y2="1"><stop offset="0" stop-color="#f08848"/><stop offset="1" stop-color="#a868d8"/></linearGradient><linearGradient id="st" x1="0" y1="0" x2="0" y2="1"><stop offset="0" stop-color="#12245a"/><stop offset="1" stop-color="#1a7ab8"/></linearGradient><radialGradient id="ff" cx="0.500" cy="0.350" r="0.700"><stop offset="0" stop-color="#ffd030"/><stop offset="0.550" stop-color="#ff7a18"/><stop offset="1" stop-color="#e8205a"/></radialGradient><linearGradient id="cs" x1="0" y1="0" x2="0" y2="1"><stop offset="0" stop-color="#f4f4f4"/><stop offset="0.550" stop-color="#c4c4c4"/><stop offset="1" stop-color="#f0f0f0"/></linearGradient></defs><path d="M21 12.800h11v11h-11zM33.200 12.800h11v11h-11zM21 25h11v11h-11zM33.200 25h11v11h-11z" fill="url(#wg)"/><path d="M65.500 15a1.500 1.500 0 0 1 1.500-1.500h6l2 2.500h12.500a1.500 1.500 0 0 1 1.500 1.500v4h-23.500z" fill="#e8a410"/><rect x="65.500" y="17.500" width="23.500" height="17.500" rx="1.500" fill="url(#fg)"/><path d="M70 35v-5a1.500 1.500 0 0 1 1.500-1.500h11.500a1.500 1.500 0 0 1 1.500 1.500v5z" fill="#1a86d8"/><path d="M74 31.500h7" stroke="#0a5aa8" stroke-width="1.200"/><rect x="112" y="13" width="18.500" height="22" rx="2.500" fill="url(#wd)"/><path d="M112 13h18.500v8h-18.500z" fill="#8fd0ff" fill-opacity="0.350"/><rect x="109" y="24" width="10.500" height="10.500" rx="2" fill="#1a48b8"/><text x="114.250" y="32.300" font-size="8.500" font-weight="bold" font-family="Liberation Sans, sans-serif" fill="#ffffff" text-anchor="middle">W</text><circle cx="165" cy="24.300" r="11" fill="#26262a" stroke="url(#mp)" stroke-width="1.800"/><path d="M161.500 18.300l9 6-9 6z" fill="#f4f4f4"/><circle cx="208.700" cy="24.300" r="11.300" fill="url(#st)"/><circle cx="212.800" cy="20.500" r="3.600" fill="none" stroke="#f0f0f0" stroke-width="1.500"/><circle cx="212.800" cy="20.500" r="1.600" fill="#f0f0f0"/><path d="M197.500 24.500l7 3a3 3 0 0 1 3.500-0.500l3-4 2 1.500-3 4.500a3 3 0 0 1-5.800 1l-6.500-2.800z" fill="#f0f0f0"/><path d="M252.500 12.500l11 11c1 1 0.500 2.200-1 2.200h-4l2 2.500h-4l-1.500 3-2-3-3.500 1 1-3h-6c-2 0-2.500-1.200-1.500-2.200z" fill="#0e0e10" stroke="#3a5a8a" stroke-width="0.700"/><path d="M252.500 13.500l6 6-3.200 1.200-2.800-2.200-2.800 2.600-3.200-1.600z" fill="#f2f2f2"/><path d="M246.500 19.500l6-6 6 6" fill="none" stroke="#9ab8e0" stroke-width="0.800"/><circle cx="260.500" cy="31" r="1" fill="#0e0e10" stroke="#3a5a8a" stroke-width="0.400"/><ellipse cx="252" cy="33.500" rx="3.500" ry="1.200" fill="#0e0e10" stroke="#3a5a8a" stroke-width="0.400"/><circle cx="296.300" cy="25" r="10.800" fill="url(#ff)"/><path d="M299 12.500c4 2 7.500 6 8 11.500l-3-2c0-4-2-6-5-9.500z" fill="#ffc828"/><path d="M286 17c1-2 2-3 3.500-3.500-0.500 2 0 3 1.500 4z" fill="#ff9a20"/><circle cx="297" cy="24.500" r="5" fill="#7a3cd8"/><path d="M291 22c2-2 5-2 7 0-2-0.500-3 1-2 2.500s-2 3-4 1.500z" fill="#ff8a20"/><circle cx="340.800" cy="24.300" r="12.200" fill="#5865f2"/><path d="M334 19.500c4-2 9.500-2 13.500 0 1.500 3 2.500 6 2.500 9.500-1.500 1.200-3 1.800-4.500 2.200l-1-1.800c-2.500 0.800-5 0.800-7.500 0l-1 1.800c-1.500-0.400-3-1-4.500-2.200 0-3.500 1-6.500 2.500-9.500z" fill="#ffffff"/><ellipse cx="337.800" cy="25.800" rx="1.700" ry="2" fill="#5865f2"/><ellipse cx="343.800" cy="25.800" rx="1.700" ry="2" fill="#5865f2"/><rect x="373" y="12.500" width="23.500" height="23.500" rx="5" fill="#ffffff"/><text x="384.750" y="27.500" font-size="7.200" font-weight="bold" font-family="Liberation Sans, sans-serif" fill="#22b573" text-anchor="middle" textLength="19" lengthAdjust="spacingAndGlyphs">cricut</text><rect x="417" y="12.500" width="23.500" height="23.500" rx="5" fill="url(#cs)"/><path d="M423 22c0-5 12-6.500 12-1.500 0 3.500-8 3-8 7 0 2 1.500 3 3.500 2.500" fill="none" stroke="#1e1e1e" stroke-width="2.400" stroke-linecap="round"/><rect x="461" y="12.500" width="23.500" height="23.500" rx="5" fill="#e8303a"/><circle cx="472.700" cy="24.300" r="9" fill="#ffffff"/><path d="M467.500 19.500h2.800l2.400 5 2.400-5h2.800l-4 9h-2.400z" fill="#e8303a"/><path d="M506.200 19.500L508.000 14.800L511.200 16.500L510.700 18.800L513.600 17.800L515.000 14.800L519.000 14.800L520.400 17.800L523.300 18.800L522.800 16.500L526.000 14.800L527.800 19.500L527.200 22.000L527.200 29.500C525.000 33.500 521.000 34.800 517.000 34.800C513.000 34.800 509.000 33.500 506.800 29.500L506.800 22.000z" fill="#478cbf"/><circle cx="512.000" cy="25.300" r="2.900" fill="#ffffff"/><circle cx="522.000" cy="25.300" r="2.900" fill="#ffffff"/><circle cx="512.000" cy="25.500" r="1.500" fill="#414042"/><circle cx="522.000" cy="25.500" r="1.500" fill="#414042"/><rect x="516.100" y="24" width="1.800" height="4.200" rx="0.800" fill="#ffffff"/><path d="M508.600 30.300h3v2.200h3.500v-2.200h3.800v2.200h3.500v-2.200h3" fill="none" stroke="#ffffff" stroke-width="1.300"/><path d="M550.200 19.500L552.000 14.800L555.200 16.500L554.700 18.800L557.600 17.800L559.000 14.800L563.000 14.800L564.400 17.800L567.300 18.800L566.800 16.500L570.000 14.800L571.800 19.500L571.200 22.000L571.200 29.500C569.000 33.500 565.000 34.800 561.000 34.800C557.000 34.800 553.000 33.500 550.800 29.500L550.800 22.000z" fill="#478cbf"/><circle cx="556.000" cy="25.300" r="2.900" fill="#ffffff"/><circle cx="566.000" cy="25.300" r="2.900" fill="#ffffff"/><circle cx="556.000" cy="25.500" r="1.500" fill="#414042"/><circle cx="566.000" cy="25.500" r="1.500" fill="#414042"/><rect x="560.100" y="24" width="1.800" height="4.200" rx="0.800" fill="#ffffff"/><path d="M552.600 30.300h3v2.200h3.500v-2.200h3.800v2.200h3.500v-2.200h3" fill="none" stroke="#ffffff" stroke-width="1.300"/><rect x="74.000" y="40.200" width="6" height="2.600" rx="1.300" fill="#8c8c8c"/><rect x="162.000" y="40.200" width="6" height="2.600" rx="1.300" fill="#8c8c8c"/><rect x="293.500" y="40.200" width="6" height="2.600" rx="1.300" fill="#8c8c8c"/><rect x="337.800" y="40.200" width="6" height="2.600" rx="1.300" fill="#8c8c8c"/><rect x="557.500" y="40.200" width="6" height="2.600" rx="1.300" fill="#8c8c8c"/><rect x="420.500" y="39.800" width="16" height="2.800" rx="1.400" fill="#c4aee8"/><path d="M1732.500 25.500l5-5 5 5" stroke="#f0f0f0" stroke-width="1.400" fill="none"/><g fill="none" stroke="#f0f0f0" stroke-width="1.300" stroke-linecap="round"><path d="M1761.500 21.500a10 10 0 0 1 14 0M1763.800 24.300a6.800 6.800 0 0 1 9.400 0M1766 27a3.600 3.600 0 0 1 5 0"/></g><circle cx="1768.500" cy="29.500" r="1.100" fill="#f0f0f0"/><path d="M1784 21.500h2.500l4-3.500v12l-4-3.500h-2.500z" fill="none" stroke="#f0f0f0" stroke-width="1.200" stroke-linejoin="round"/><path d="M1793 21a4.500 4.500 0 0 1 0 6M1795.500 18.800a8 8 0 0 1 0 10.500" fill="none" stroke="#f0f0f0" stroke-width="1.100" stroke-linecap="round"/><path d="M1798.200 17.500a10.500 10.500 0 0 1 0 13" fill="none" stroke="#6a6a70" stroke-width="1.100" stroke-linecap="round"/><rect x="1810" y="19.500" width="17" height="9.500" rx="2.200" fill="#8ed48a" stroke="#e8f4e8" stroke-width="1.100"/><path d="M1828 22.500v3.500" stroke="#e8f4e8" stroke-width="1.600" stroke-linecap="round"/><path d="M1816 19.500l1-3.500M1821.500 19.500l-1-3.500M1818.700 14.500v3" stroke="#e8f4e8" stroke-width="1.100"/><path d="M1819.500 20.500l-2.500 4h2l-1 3.500 3-4.500h-2z" fill="#1b1c22"/></svg>
<div class="t" style="left:1850.136px;top:1041.000px;font-size:12px;line-height:14px;color:#f4f4f4;transform:scaleX(0.973);transform-origin:right center;">12:57 PM</div>
<div class="t" style="left:1848.117px;top:1057.000px;font-size:12px;line-height:14px;color:#f4f4f4;transform:scaleX(1.040);transform-origin:right center;">2/16/2026</div>
</body>
</html>
